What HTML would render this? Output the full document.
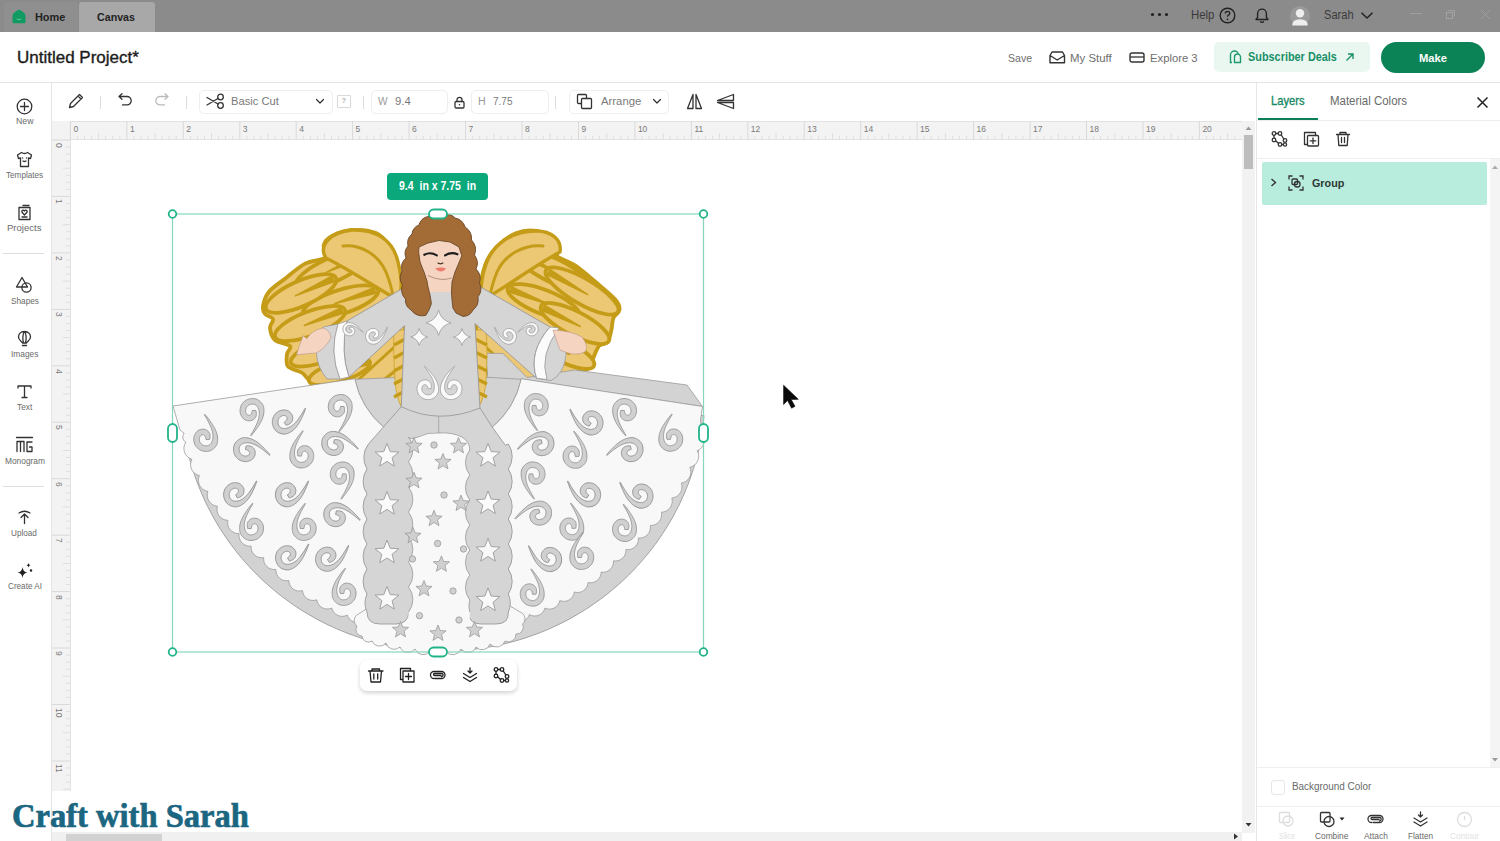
<!DOCTYPE html>
<html><head><meta charset="utf-8"><style>*{margin:0;padding:0;box-sizing:border-box}
html,body{width:1500px;height:841px;overflow:hidden;background:#fff;font-family:"Liberation Sans",sans-serif;color:#2b2b2b}
.a{position:absolute}
.tx{position:absolute;white-space:nowrap}
svg{overflow:visible}</style></head><body><div class="a" style="left:0;top:0;width:1500px;height:32px;background:#8b8b8b"></div><div class="a" style="left:79px;top:2px;width:76px;height:30px;background:#a8a8a8;border-radius:3px 3px 0 0"></div><div class="a" style="left:4px;top:2px;width:74px;height:30px;background:#8f8f8f;border-radius:3px 3px 0 0"></div><svg class="a" style="left:12px;top:9px;" width="14" height="15" viewBox="0 0 14 15"><path d="M0.5 7 Q0.5 4.5 3 3 L5.5 1.2 Q7 0.2 8.5 1.2 L11 3 Q13.5 4.5 13.5 7 V13 Q13.5 14.3 12.2 14.3 H1.8 Q0.5 14.3 0.5 13 Z" fill="#119a62"/><path d="M4.8 10 q2.2 1.4 4.4 0" stroke="#6cc9a0" stroke-width="0.9" fill="none"/></svg><div class="tx" style="left:35.00px;top:10.93px;font-size:11.77px;line-height:11.77px;font-weight:bold;color:#222;font-family:'Liberation Sans',sans-serif;transform:scaleX(0.9263);transform-origin:0 0;">Home</div><div class="tx" style="left:97.40px;top:10.93px;font-size:11.77px;line-height:11.77px;font-weight:bold;color:#222;font-family:'Liberation Sans',sans-serif;transform:scaleX(0.9072);transform-origin:0 0;">Canvas</div><svg class="a" style="left:1150px;top:12px;" width="20" height="5" viewBox="0 0 20 5"><circle cx="2.5" cy="2.5" r="1.6" fill="#222"/><circle cx="9.5" cy="2.5" r="1.6" fill="#222"/><circle cx="16.5" cy="2.5" r="1.6" fill="#222"/></svg><div class="tx" style="left:1191.00px;top:8.43px;font-size:13.08px;line-height:13.08px;font-weight:normal;color:#3a3a3a;font-family:'Liberation Sans',sans-serif;transform:scaleX(0.8697);transform-origin:0 0;">Help</div><svg class="a" style="left:1218px;top:7px;" width="19" height="17" viewBox="0 0 19 17"><circle cx="9.5" cy="8.5" r="7.3" fill="none" stroke="#222" stroke-width="1.4"/><path d="M7.3 6.6 q0-2.2 2.2-2.2 q2.2 0 2.2 2 q0 1.4-1.6 2 q-0.6 0.3-0.6 1.3" fill="none" stroke="#222" stroke-width="1.4"/><circle cx="9.5" cy="12.3" r="0.9" fill="#222"/></svg><svg class="a" style="left:1253px;top:7px;" width="18" height="17" viewBox="0 0 18 17"><path d="M3 12.5 h12 l-1.6-2.2 v-3.8 a4.4 4.4 0 0 0-8.8 0 v3.8 z" fill="none" stroke="#222" stroke-width="1.4" stroke-linejoin="round"/><path d="M7.3 14.2 a1.8 1.8 0 0 0 3.4 0" fill="none" stroke="#222" stroke-width="1.3"/></svg><svg class="a" style="left:1289px;top:6px;" width="22" height="21" viewBox="0 0 22 21"><circle cx="11" cy="10" r="10" fill="#9a9a9a"/><circle cx="11" cy="7.2" r="4.2" fill="#eeeeee"/><path d="M3.2 19.5 q0-6.2 7.8-6.2 q7.8 0 7.8 6.2 z" fill="#eeeeee"/></svg><div class="tx" style="left:1324.00px;top:8.43px;font-size:13.08px;line-height:13.08px;font-weight:normal;color:#3a3a3a;font-family:'Liberation Sans',sans-serif;transform:scaleX(0.8479);transform-origin:0 0;">Sarah</div><svg class="a" style="left:1360px;top:11px;" width="14" height="9" viewBox="0 0 14 9"><path d="M1.5 1.8 L7 7 L12.5 1.8" fill="none" stroke="#222" stroke-width="1.5"/></svg><div class="a" style="left:1410px;top:13px;width:12px;height:1px;background:#9e9e9e"></div><svg class="a" style="left:1446px;top:10px;" width="11" height="9" viewBox="0 0 11 9"><rect x="0.5" y="2.5" width="6" height="6" fill="none" stroke="#a2a2a2"/><path d="M2.5 0.5 h6 v6" fill="none" stroke="#a2a2a2"/></svg><svg class="a" style="left:1480px;top:9px;" width="11" height="11" viewBox="0 0 11 11"><path d="M1 1 L10 10 M10 1 L1 10" stroke="#a0a0a0" stroke-width="1"/></svg><div class="a" style="left:0;top:32px;width:1500px;height:51px;background:#fff"></div><div class="a" style="left:0;top:82px;width:1500px;height:1px;background:#e4e4e4"></div><div class="tx" style="left:16.60px;top:48.82px;font-size:16.28px;line-height:16.28px;font-weight:normal;color:#1c1c1c;font-family:'Liberation Sans',sans-serif;transform:scaleX(1.0452);transform-origin:0 0;-webkit-text-stroke:0.35px currentColor;">Untitled Project*</div><div class="tx" style="left:1007.60px;top:51.66px;font-size:11.63px;line-height:11.63px;font-weight:normal;color:#6e6e6e;font-family:'Liberation Sans',sans-serif;transform:scaleX(0.9093);transform-origin:0 0;">Save</div><svg class="a" style="left:1049px;top:51px;" width="17" height="13" viewBox="0 0 17 13"><path d="M1 4.5 V11.8 H15.5 V4.5 L13.5 1 H3 Z M1 4.5 L8.2 9 L15.5 4.5" fill="none" stroke="#333" stroke-width="1.4" stroke-linejoin="round"/></svg><div class="tx" style="left:1069.80px;top:51.66px;font-size:11.63px;line-height:11.63px;font-weight:normal;color:#6e6e6e;font-family:'Liberation Sans',sans-serif;transform:scaleX(0.9827);transform-origin:0 0;">My Stuff</div><svg class="a" style="left:1129px;top:52px;" width="16" height="11" viewBox="0 0 16 11"><rect x="1" y="1" width="14" height="9" rx="2" fill="none" stroke="#333" stroke-width="1.4"/><path d="M1 5 H15" stroke="#333" stroke-width="1.3"/></svg><div class="tx" style="left:1149.80px;top:51.66px;font-size:11.63px;line-height:11.63px;font-weight:normal;color:#6e6e6e;font-family:'Liberation Sans',sans-serif;transform:scaleX(0.9690);transform-origin:0 0;">Explore 3</div><div class="a" style="left:1214px;top:42px;width:156px;height:30px;background:#eaf7f1;border-radius:5px"></div><svg class="a" style="left:1228px;top:50px;" width="15" height="14" viewBox="0 0 15 14"><path d="M4 12.5 H2.5 V5 a4 4 0 0 1 8 0 M6 12.5 H12.5 V7 a3 3 0 0 0-6 0 V12.5" fill="none" stroke="#1d9a70" stroke-width="1.4"/></svg><div class="tx" style="left:1248.00px;top:51.04px;font-size:12.35px;line-height:12.35px;font-weight:bold;color:#1a9069;font-family:'Liberation Sans',sans-serif;transform:scaleX(0.8817);transform-origin:0 0;">Subscriber Deals</div><svg class="a" style="left:1345px;top:52px;" width="10" height="10" viewBox="0 0 10 10"><path d="M1.5 8.5 L8 2 M3 2 H8 V7" fill="none" stroke="#1a9069" stroke-width="1.4"/></svg><div class="a" style="left:1381px;top:42px;width:104px;height:31px;background:#0c8257;border-radius:16px"></div><div class="tx" style="left:1418.50px;top:52.16px;font-size:11.63px;line-height:11.63px;font-weight:bold;color:#ffffff;font-family:'Liberation Sans',sans-serif;transform:scaleX(0.9626);transform-origin:0 0;">Make</div><div class="a" style="left:51px;top:83px;width:1px;height:758px;background:#e4e4e4"></div><svg class="a" style="left:16px;top:98px;" width="17" height="17" viewBox="0 0 17 17"><circle cx="8.5" cy="8.5" r="7.3" fill="none" stroke="#333" stroke-width="1.3" stroke-linecap="round" stroke-linejoin="round"/><path d="M8.5 4.5 V12.5 M4.5 8.5 H12.5" fill="none" stroke="#333" stroke-width="1.3" stroke-linecap="round" stroke-linejoin="round"/></svg><div class="tx" style="left:15.50px;top:117.42px;font-size:8.72px;line-height:8.72px;font-weight:normal;color:#6a6a6a;font-family:'Liberation Sans',sans-serif;transform:scaleX(1.0031);transform-origin:0 0;">New</div><svg class="a" style="left:16px;top:151px;" width="17" height="17" viewBox="0 0 17 17"><path d="M5.5 1.5 L1.5 4 L2.5 7.5 L4.5 7 V15.5 H12.5 V7 L14.5 7.5 L15.5 4 L11.5 1.5 Q8.5 3.5 5.5 1.5 Z" fill="none" stroke="#333" stroke-width="1.3" stroke-linecap="round" stroke-linejoin="round"/><path d="M6.5 7 h0.1 M10.5 7 h0.1 M7 10 q1.5 1 3 0" fill="none" stroke="#333" stroke-width="1.3" stroke-linecap="round" stroke-linejoin="round"/></svg><div class="tx" style="left:5.70px;top:170.75px;font-size:9.16px;line-height:9.16px;font-weight:normal;color:#6a6a6a;font-family:'Liberation Sans',sans-serif;transform:scaleX(0.8913);transform-origin:0 0;">Templates</div><svg class="a" style="left:17px;top:204px;" width="15" height="17" viewBox="0 0 15 17"><path d="M2 3.5 H13 V15.5 H2 Z" fill="none" stroke="#333" stroke-width="1.3" stroke-linecap="round" stroke-linejoin="round"/><path d="M6 1.5 H12" fill="none" stroke="#333" stroke-width="1.3" stroke-linecap="round" stroke-linejoin="round"/><path d="M7.5 11 L5 8.3 a1.3 1.3 0 0 1 2.5-1.3 a1.3 1.3 0 0 1 2.5 1.3 Z" fill="none" stroke="#333" stroke-width="1.3" stroke-linecap="round" stroke-linejoin="round"/><path d="M5 13 H10" fill="none" stroke="#333" stroke-width="1.3" stroke-linecap="round" stroke-linejoin="round"/></svg><div class="tx" style="left:7.00px;top:224.39px;font-size:8.87px;line-height:8.87px;font-weight:normal;color:#6a6a6a;font-family:'Liberation Sans',sans-serif;transform:scaleX(1.0772);transform-origin:0 0;">Projects</div><div class="a" style="left:3px;top:253px;width:41px;height:1px;background:#dedede"></div><svg class="a" style="left:15px;top:276px;" width="18" height="18" viewBox="0 0 18 18"><path d="M7 1.5 L1.5 11 H12.5 Z" fill="none" stroke="#333" stroke-width="1.3" stroke-linecap="round" stroke-linejoin="round"/><circle cx="11.5" cy="11.5" r="4.6" fill="none" stroke="#333" stroke-width="1.3" stroke-linecap="round" stroke-linejoin="round"/></svg><div class="tx" style="left:10.50px;top:296.99px;font-size:8.87px;line-height:8.87px;font-weight:normal;color:#6a6a6a;font-family:'Liberation Sans',sans-serif;transform:scaleX(0.9311);transform-origin:0 0;">Shapes</div><svg class="a" style="left:17px;top:330px;" width="15" height="17" viewBox="0 0 15 17"><path d="M7.5 1.5 C3 1.5 1.5 4.5 1.5 7 C1.5 10 4.5 11.5 5.5 13 H9.5 C10.5 11.5 13.5 10 13.5 7 C13.5 4.5 12 1.5 7.5 1.5 Z M7.5 1.5 C5.5 3.5 5.5 10 6.5 13 M7.5 1.5 C9.5 3.5 9.5 10 8.5 13 M5.5 15.5 H9.5" fill="none" stroke="#333" stroke-width="1.3" stroke-linecap="round" stroke-linejoin="round"/></svg><div class="tx" style="left:10.60px;top:350.09px;font-size:8.87px;line-height:8.87px;font-weight:normal;color:#6a6a6a;font-family:'Liberation Sans',sans-serif;transform:scaleX(0.9424);transform-origin:0 0;">Images</div><svg class="a" style="left:16px;top:384px;" width="17" height="15" viewBox="0 0 17 15"><path d="M2 4 V2 H15 V4 M8.5 2 V13.5 M6 13.5 H11" fill="none" stroke="#333" stroke-width="1.3" stroke-linecap="round" stroke-linejoin="round"/></svg><div class="tx" style="left:16.50px;top:403.12px;font-size:8.72px;line-height:8.72px;font-weight:normal;color:#6a6a6a;font-family:'Liberation Sans',sans-serif;transform:scaleX(0.9504);transform-origin:0 0;">Text</div><svg class="a" style="left:15px;top:436px;" width="19" height="18" viewBox="0 0 19 18"><path d="M1.5 1.5 H17.5" fill="none" stroke="#333" stroke-width="1.3" stroke-linecap="round" stroke-linejoin="round"/><path d="M2 15.5 V5.5 H9 V15.5 M5.5 5.5 V15.5" fill="none" stroke="#333" stroke-width="1.3" stroke-linecap="round" stroke-linejoin="round"/><path d="M17 6 H12 V15.5 H17 V11 H14.5" fill="none" stroke="#333" stroke-width="1.3" stroke-linecap="round" stroke-linejoin="round"/></svg><div class="tx" style="left:4.50px;top:457.19px;font-size:8.87px;line-height:8.87px;font-weight:normal;color:#6a6a6a;font-family:'Liberation Sans',sans-serif;transform:scaleX(0.9438);transform-origin:0 0;">Monogram</div><div class="a" style="left:3px;top:486px;width:41px;height:1px;background:#dedede"></div><svg class="a" style="left:17px;top:509px;" width="15" height="16" viewBox="0 0 15 16"><path d="M2 4 Q7.5 0.5 13 4 M7.5 5 V14.5 M4 8.5 L7.5 5 L11 8.5" fill="none" stroke="#333" stroke-width="1.3" stroke-linecap="round" stroke-linejoin="round"/></svg><div class="tx" style="left:11.30px;top:528.87px;font-size:9.01px;line-height:9.01px;font-weight:normal;color:#6a6a6a;font-family:'Liberation Sans',sans-serif;transform:scaleX(0.9069);transform-origin:0 0;">Upload</div><svg class="a" style="left:16px;top:562px;" width="17" height="17" viewBox="0 0 17 17"><path d="M6.5 5 Q7 10 11.5 10.5 Q7 11 6.5 16 Q6 11 1.5 10.5 Q6 10 6.5 5 Z" fill="#222"/><path d="M12.5 1 Q12.7 3 14.5 3.3 Q12.7 3.6 12.5 5.5 Q12.3 3.6 10.5 3.3 Q12.3 3 12.5 1 Z" fill="#222"/><circle cx="15" cy="8.5" r="1.2" fill="#222"/></svg><div class="tx" style="left:7.50px;top:582.07px;font-size:9.01px;line-height:9.01px;font-weight:normal;color:#6a6a6a;font-family:'Liberation Sans',sans-serif;transform:scaleX(0.9050);transform-origin:0 0;">Create AI</div><svg class="a" style="left:67px;top:92px;" width="18" height="18" viewBox="0 0 18 18"><path d="M2.5 15.5 L3.5 11.5 L12.5 2.5 L15.5 5.5 L6.5 14.5 Z M11 4 L14 7" fill="none" stroke="#333" stroke-width="1.3" stroke-linecap="round" stroke-linejoin="round"/></svg><div class="a" style="left:100px;top:96px;width:1px;height:13px;background:#dcdcdc"></div><svg class="a" style="left:116px;top:93px;" width="19" height="15" viewBox="0 0 19 15"><path d="M3 3.5 H11 a4.2 4.2 0 0 1 0 8.4 H6.5 M6 0.8 L3 3.5 L6 6.2" fill="none" stroke="#333" stroke-width="1.3" stroke-linecap="round" stroke-linejoin="round"/></svg><svg class="a" style="left:152px;top:93px;" width="19" height="15" viewBox="0 0 19 15"><path d="M16 3.5 H8 a4.2 4.2 0 0 0 0 8.4 H12.5 M13 0.8 L16 3.5 L13 6.2" fill="none" stroke="#bbbbbb" stroke-width="1.3" stroke-linecap="round" stroke-linejoin="round"/></svg><div class="a" style="left:186px;top:96px;width:1px;height:13px;background:#dcdcdc"></div><div class="a" style="left:199px;top:89.5px;width:134px;height:24px;border:1px solid #eeeeee;border-radius:5px;background:#fff"></div><svg class="a" style="left:205px;top:93px;" width="21" height="17" viewBox="0 0 21 17"><circle cx="15.5" cy="4" r="2.8" fill="none" stroke="#333" stroke-width="1.3" stroke-linecap="round" stroke-linejoin="round"/><circle cx="15.5" cy="12.5" r="2.8" fill="none" stroke="#333" stroke-width="1.3" stroke-linecap="round" stroke-linejoin="round"/><path d="M13 5.5 L2 12 M13 11 L2 4.5" fill="none" stroke="#333" stroke-width="1.3" stroke-linecap="round" stroke-linejoin="round"/></svg><div class="tx" style="left:230.80px;top:95.36px;font-size:11.63px;line-height:11.63px;font-weight:normal;color:#7a7a7a;font-family:'Liberation Sans',sans-serif;transform:scaleX(0.9606);transform-origin:0 0;">Basic Cut</div><svg class="a" style="left:315px;top:98px;" width="10" height="7" viewBox="0 0 10 7"><path d="M1.5 1.5 L5 5 L8.5 1.5" fill="none" stroke="#333" stroke-width="1.3" stroke-linecap="round" stroke-linejoin="round"/></svg><div class="a" style="left:337px;top:94.5px;width:14px;height:13px;border:1px solid #d8d8d8;border-radius:1px"></div><div class="tx" style="left:337px;top:95px;width:14px;text-align:center;font-size:7px;line-height:12px;color:#b0b0b0;font-weight:bold">?</div><div class="a" style="left:363px;top:96px;width:1px;height:13px;background:#dcdcdc"></div><div class="a" style="left:371px;top:90px;width:77px;height:24px;border:1px solid #eeeeee;border-radius:5px"></div><div class="tx" style="left:377.70px;top:95.36px;font-size:11.63px;line-height:11.63px;font-weight:normal;color:#9a9a9a;font-family:'Liberation Sans',sans-serif;transform:scaleX(0.8747);transform-origin:0 0;">W</div><div class="tx" style="left:395.00px;top:95.36px;font-size:11.63px;line-height:11.63px;font-weight:normal;color:#7a7a7a;font-family:'Liberation Sans',sans-serif;transform:scaleX(0.9713);transform-origin:0 0;">9.4</div><svg class="a" style="left:454px;top:96px;" width="11" height="13" viewBox="0 0 11 13"><rect x="1" y="5.5" width="9" height="6.5" rx="1.2" fill="none" stroke="#333" stroke-width="1.3" stroke-linecap="round" stroke-linejoin="round"/><path d="M3 5.5 V3.8 a2.5 2.5 0 0 1 5 0 V5.5" fill="none" stroke="#333" stroke-width="1.3" stroke-linecap="round" stroke-linejoin="round"/><circle cx="5.5" cy="8.7" r="0.8" fill="#333"/></svg><div class="a" style="left:471px;top:90px;width:78px;height:24px;border:1px solid #eeeeee;border-radius:5px"></div><div class="tx" style="left:478.30px;top:95.36px;font-size:11.63px;line-height:11.63px;font-weight:normal;color:#9a9a9a;font-family:'Liberation Sans',sans-serif;transform:scaleX(0.9169);transform-origin:0 0;">H</div><div class="tx" style="left:493.40px;top:95.36px;font-size:11.63px;line-height:11.63px;font-weight:normal;color:#7a7a7a;font-family:'Liberation Sans',sans-serif;transform:scaleX(0.8616);transform-origin:0 0;">7.75</div><div class="a" style="left:555px;top:96px;width:1px;height:13px;background:#dcdcdc"></div><div class="a" style="left:569px;top:89.5px;width:100px;height:24px;border:1px solid #eeeeee;border-radius:5px"></div><svg class="a" style="left:576px;top:93px;" width="17" height="17" viewBox="0 0 17 17"><rect x="1.5" y="1.5" width="9" height="9" rx="1" fill="none" stroke="#333" stroke-width="1.3" stroke-linecap="round" stroke-linejoin="round"/><rect x="5.5" y="5.5" width="10" height="10" rx="1" fill="#fff" stroke="#333" stroke-width="1.3"/></svg><div class="tx" style="left:600.50px;top:95.36px;font-size:11.63px;line-height:11.63px;font-weight:normal;color:#7a7a7a;font-family:'Liberation Sans',sans-serif;transform:scaleX(0.9741);transform-origin:0 0;">Arrange</div><svg class="a" style="left:652px;top:98px;" width="10" height="7" viewBox="0 0 10 7"><path d="M1.5 1.5 L5 5 L8.5 1.5" fill="none" stroke="#333" stroke-width="1.3" stroke-linecap="round" stroke-linejoin="round"/></svg><svg class="a" style="left:686px;top:93px;" width="17" height="17" viewBox="0 0 17 17"><path d="M7 1.5 L1.5 15.5 H7 Z M10 1.5 L15.5 15.5 H10 Z" fill="none" stroke="#333" stroke-width="1.3" stroke-linecap="round" stroke-linejoin="round"/></svg><svg class="a" style="left:716px;top:93px;" width="19" height="17" viewBox="0 0 19 17"><path d="M17.5 1.5 L1.5 7.5 H17.5 Z M17.5 15.5 L1.5 9.5 H17.5 Z" fill="none" stroke="#333" stroke-width="1.3" stroke-linecap="round" stroke-linejoin="round"/></svg><div class="a" style="left:52px;top:121px;width:1190px;height:19px;background:#f3f3f3;border-top:1px solid #e2e2e2;border-bottom:1px solid #e3e3e3"></div><div class="a" style="left:52px;top:121px;width:18.5px;height:670px;background:#f3f3f3;border-right:1px solid #e3e3e3"></div><svg class="a" style="left:0;top:0" width="1242" height="142"><path d="M70.4 121 V140" stroke="#d9d9d9" stroke-width="1"/><path d="M77.5 136 V140" stroke="#dedede" stroke-width="1"/><path d="M84.5 136 V140" stroke="#dedede" stroke-width="1"/><path d="M91.6 136 V140" stroke="#dedede" stroke-width="1"/><path d="M98.6 133 V140" stroke="#dedede" stroke-width="1"/><path d="M105.7 136 V140" stroke="#dedede" stroke-width="1"/><path d="M112.7 136 V140" stroke="#dedede" stroke-width="1"/><path d="M119.8 136 V140" stroke="#dedede" stroke-width="1"/><path d="M126.9 121 V140" stroke="#d9d9d9" stroke-width="1"/><path d="M133.9 136 V140" stroke="#dedede" stroke-width="1"/><path d="M141.0 136 V140" stroke="#dedede" stroke-width="1"/><path d="M148.0 136 V140" stroke="#dedede" stroke-width="1"/><path d="M155.1 133 V140" stroke="#dedede" stroke-width="1"/><path d="M162.1 136 V140" stroke="#dedede" stroke-width="1"/><path d="M169.2 136 V140" stroke="#dedede" stroke-width="1"/><path d="M176.2 136 V140" stroke="#dedede" stroke-width="1"/><path d="M183.3 121 V140" stroke="#d9d9d9" stroke-width="1"/><path d="M190.4 136 V140" stroke="#dedede" stroke-width="1"/><path d="M197.4 136 V140" stroke="#dedede" stroke-width="1"/><path d="M204.5 136 V140" stroke="#dedede" stroke-width="1"/><path d="M211.5 133 V140" stroke="#dedede" stroke-width="1"/><path d="M218.6 136 V140" stroke="#dedede" stroke-width="1"/><path d="M225.6 136 V140" stroke="#dedede" stroke-width="1"/><path d="M232.7 136 V140" stroke="#dedede" stroke-width="1"/><path d="M239.8 121 V140" stroke="#d9d9d9" stroke-width="1"/><path d="M246.8 136 V140" stroke="#dedede" stroke-width="1"/><path d="M253.9 136 V140" stroke="#dedede" stroke-width="1"/><path d="M260.9 136 V140" stroke="#dedede" stroke-width="1"/><path d="M268.0 133 V140" stroke="#dedede" stroke-width="1"/><path d="M275.0 136 V140" stroke="#dedede" stroke-width="1"/><path d="M282.1 136 V140" stroke="#dedede" stroke-width="1"/><path d="M289.1 136 V140" stroke="#dedede" stroke-width="1"/><path d="M296.2 121 V140" stroke="#d9d9d9" stroke-width="1"/><path d="M303.3 136 V140" stroke="#dedede" stroke-width="1"/><path d="M310.3 136 V140" stroke="#dedede" stroke-width="1"/><path d="M317.4 136 V140" stroke="#dedede" stroke-width="1"/><path d="M324.4 133 V140" stroke="#dedede" stroke-width="1"/><path d="M331.5 136 V140" stroke="#dedede" stroke-width="1"/><path d="M338.5 136 V140" stroke="#dedede" stroke-width="1"/><path d="M345.6 136 V140" stroke="#dedede" stroke-width="1"/><path d="M352.6 121 V140" stroke="#d9d9d9" stroke-width="1"/><path d="M359.7 136 V140" stroke="#dedede" stroke-width="1"/><path d="M366.8 136 V140" stroke="#dedede" stroke-width="1"/><path d="M373.8 136 V140" stroke="#dedede" stroke-width="1"/><path d="M380.9 133 V140" stroke="#dedede" stroke-width="1"/><path d="M387.9 136 V140" stroke="#dedede" stroke-width="1"/><path d="M395.0 136 V140" stroke="#dedede" stroke-width="1"/><path d="M402.0 136 V140" stroke="#dedede" stroke-width="1"/><path d="M409.1 121 V140" stroke="#d9d9d9" stroke-width="1"/><path d="M416.2 136 V140" stroke="#dedede" stroke-width="1"/><path d="M423.2 136 V140" stroke="#dedede" stroke-width="1"/><path d="M430.3 136 V140" stroke="#dedede" stroke-width="1"/><path d="M437.3 133 V140" stroke="#dedede" stroke-width="1"/><path d="M444.4 136 V140" stroke="#dedede" stroke-width="1"/><path d="M451.4 136 V140" stroke="#dedede" stroke-width="1"/><path d="M458.5 136 V140" stroke="#dedede" stroke-width="1"/><path d="M465.6 121 V140" stroke="#d9d9d9" stroke-width="1"/><path d="M472.6 136 V140" stroke="#dedede" stroke-width="1"/><path d="M479.7 136 V140" stroke="#dedede" stroke-width="1"/><path d="M486.7 136 V140" stroke="#dedede" stroke-width="1"/><path d="M493.8 133 V140" stroke="#dedede" stroke-width="1"/><path d="M500.8 136 V140" stroke="#dedede" stroke-width="1"/><path d="M507.9 136 V140" stroke="#dedede" stroke-width="1"/><path d="M514.9 136 V140" stroke="#dedede" stroke-width="1"/><path d="M522.0 121 V140" stroke="#d9d9d9" stroke-width="1"/><path d="M529.1 136 V140" stroke="#dedede" stroke-width="1"/><path d="M536.1 136 V140" stroke="#dedede" stroke-width="1"/><path d="M543.2 136 V140" stroke="#dedede" stroke-width="1"/><path d="M550.2 133 V140" stroke="#dedede" stroke-width="1"/><path d="M557.3 136 V140" stroke="#dedede" stroke-width="1"/><path d="M564.3 136 V140" stroke="#dedede" stroke-width="1"/><path d="M571.4 136 V140" stroke="#dedede" stroke-width="1"/><path d="M578.5 121 V140" stroke="#d9d9d9" stroke-width="1"/><path d="M585.5 136 V140" stroke="#dedede" stroke-width="1"/><path d="M592.6 136 V140" stroke="#dedede" stroke-width="1"/><path d="M599.6 136 V140" stroke="#dedede" stroke-width="1"/><path d="M606.7 133 V140" stroke="#dedede" stroke-width="1"/><path d="M613.7 136 V140" stroke="#dedede" stroke-width="1"/><path d="M620.8 136 V140" stroke="#dedede" stroke-width="1"/><path d="M627.8 136 V140" stroke="#dedede" stroke-width="1"/><path d="M634.9 121 V140" stroke="#d9d9d9" stroke-width="1"/><path d="M642.0 136 V140" stroke="#dedede" stroke-width="1"/><path d="M649.0 136 V140" stroke="#dedede" stroke-width="1"/><path d="M656.1 136 V140" stroke="#dedede" stroke-width="1"/><path d="M663.1 133 V140" stroke="#dedede" stroke-width="1"/><path d="M670.2 136 V140" stroke="#dedede" stroke-width="1"/><path d="M677.2 136 V140" stroke="#dedede" stroke-width="1"/><path d="M684.3 136 V140" stroke="#dedede" stroke-width="1"/><path d="M691.4 121 V140" stroke="#d9d9d9" stroke-width="1"/><path d="M698.4 136 V140" stroke="#dedede" stroke-width="1"/><path d="M705.5 136 V140" stroke="#dedede" stroke-width="1"/><path d="M712.5 136 V140" stroke="#dedede" stroke-width="1"/><path d="M719.6 133 V140" stroke="#dedede" stroke-width="1"/><path d="M726.6 136 V140" stroke="#dedede" stroke-width="1"/><path d="M733.7 136 V140" stroke="#dedede" stroke-width="1"/><path d="M740.7 136 V140" stroke="#dedede" stroke-width="1"/><path d="M747.8 121 V140" stroke="#d9d9d9" stroke-width="1"/><path d="M754.9 136 V140" stroke="#dedede" stroke-width="1"/><path d="M761.9 136 V140" stroke="#dedede" stroke-width="1"/><path d="M769.0 136 V140" stroke="#dedede" stroke-width="1"/><path d="M776.0 133 V140" stroke="#dedede" stroke-width="1"/><path d="M783.1 136 V140" stroke="#dedede" stroke-width="1"/><path d="M790.1 136 V140" stroke="#dedede" stroke-width="1"/><path d="M797.2 136 V140" stroke="#dedede" stroke-width="1"/><path d="M804.2 121 V140" stroke="#d9d9d9" stroke-width="1"/><path d="M811.3 136 V140" stroke="#dedede" stroke-width="1"/><path d="M818.4 136 V140" stroke="#dedede" stroke-width="1"/><path d="M825.4 136 V140" stroke="#dedede" stroke-width="1"/><path d="M832.5 133 V140" stroke="#dedede" stroke-width="1"/><path d="M839.5 136 V140" stroke="#dedede" stroke-width="1"/><path d="M846.6 136 V140" stroke="#dedede" stroke-width="1"/><path d="M853.6 136 V140" stroke="#dedede" stroke-width="1"/><path d="M860.7 121 V140" stroke="#d9d9d9" stroke-width="1"/><path d="M867.8 136 V140" stroke="#dedede" stroke-width="1"/><path d="M874.8 136 V140" stroke="#dedede" stroke-width="1"/><path d="M881.9 136 V140" stroke="#dedede" stroke-width="1"/><path d="M888.9 133 V140" stroke="#dedede" stroke-width="1"/><path d="M896.0 136 V140" stroke="#dedede" stroke-width="1"/><path d="M903.0 136 V140" stroke="#dedede" stroke-width="1"/><path d="M910.1 136 V140" stroke="#dedede" stroke-width="1"/><path d="M917.1 121 V140" stroke="#d9d9d9" stroke-width="1"/><path d="M924.2 136 V140" stroke="#dedede" stroke-width="1"/><path d="M931.3 136 V140" stroke="#dedede" stroke-width="1"/><path d="M938.3 136 V140" stroke="#dedede" stroke-width="1"/><path d="M945.4 133 V140" stroke="#dedede" stroke-width="1"/><path d="M952.4 136 V140" stroke="#dedede" stroke-width="1"/><path d="M959.5 136 V140" stroke="#dedede" stroke-width="1"/><path d="M966.5 136 V140" stroke="#dedede" stroke-width="1"/><path d="M973.6 121 V140" stroke="#d9d9d9" stroke-width="1"/><path d="M980.7 136 V140" stroke="#dedede" stroke-width="1"/><path d="M987.7 136 V140" stroke="#dedede" stroke-width="1"/><path d="M994.8 136 V140" stroke="#dedede" stroke-width="1"/><path d="M1001.8 133 V140" stroke="#dedede" stroke-width="1"/><path d="M1008.9 136 V140" stroke="#dedede" stroke-width="1"/><path d="M1015.9 136 V140" stroke="#dedede" stroke-width="1"/><path d="M1023.0 136 V140" stroke="#dedede" stroke-width="1"/><path d="M1030.1 121 V140" stroke="#d9d9d9" stroke-width="1"/><path d="M1037.1 136 V140" stroke="#dedede" stroke-width="1"/><path d="M1044.2 136 V140" stroke="#dedede" stroke-width="1"/><path d="M1051.2 136 V140" stroke="#dedede" stroke-width="1"/><path d="M1058.3 133 V140" stroke="#dedede" stroke-width="1"/><path d="M1065.3 136 V140" stroke="#dedede" stroke-width="1"/><path d="M1072.4 136 V140" stroke="#dedede" stroke-width="1"/><path d="M1079.4 136 V140" stroke="#dedede" stroke-width="1"/><path d="M1086.5 121 V140" stroke="#d9d9d9" stroke-width="1"/><path d="M1093.6 136 V140" stroke="#dedede" stroke-width="1"/><path d="M1100.6 136 V140" stroke="#dedede" stroke-width="1"/><path d="M1107.7 136 V140" stroke="#dedede" stroke-width="1"/><path d="M1114.7 133 V140" stroke="#dedede" stroke-width="1"/><path d="M1121.8 136 V140" stroke="#dedede" stroke-width="1"/><path d="M1128.8 136 V140" stroke="#dedede" stroke-width="1"/><path d="M1135.9 136 V140" stroke="#dedede" stroke-width="1"/><path d="M1143.0 121 V140" stroke="#d9d9d9" stroke-width="1"/><path d="M1150.0 136 V140" stroke="#dedede" stroke-width="1"/><path d="M1157.1 136 V140" stroke="#dedede" stroke-width="1"/><path d="M1164.1 136 V140" stroke="#dedede" stroke-width="1"/><path d="M1171.2 133 V140" stroke="#dedede" stroke-width="1"/><path d="M1178.2 136 V140" stroke="#dedede" stroke-width="1"/><path d="M1185.3 136 V140" stroke="#dedede" stroke-width="1"/><path d="M1192.3 136 V140" stroke="#dedede" stroke-width="1"/><path d="M1199.4 121 V140" stroke="#d9d9d9" stroke-width="1"/><path d="M1206.5 136 V140" stroke="#dedede" stroke-width="1"/><path d="M1213.5 136 V140" stroke="#dedede" stroke-width="1"/><path d="M1220.6 136 V140" stroke="#dedede" stroke-width="1"/><path d="M1227.6 133 V140" stroke="#dedede" stroke-width="1"/><path d="M1234.7 136 V140" stroke="#dedede" stroke-width="1"/></svg><div class="tx" style="left:73.4px;top:123.5px;font-size:8.5px;line-height:10px;color:#7a7a7a">0</div><div class="tx" style="left:129.9px;top:123.5px;font-size:8.5px;line-height:10px;color:#7a7a7a">1</div><div class="tx" style="left:186.3px;top:123.5px;font-size:8.5px;line-height:10px;color:#7a7a7a">2</div><div class="tx" style="left:242.8px;top:123.5px;font-size:8.5px;line-height:10px;color:#7a7a7a">3</div><div class="tx" style="left:299.2px;top:123.5px;font-size:8.5px;line-height:10px;color:#7a7a7a">4</div><div class="tx" style="left:355.6px;top:123.5px;font-size:8.5px;line-height:10px;color:#7a7a7a">5</div><div class="tx" style="left:412.1px;top:123.5px;font-size:8.5px;line-height:10px;color:#7a7a7a">6</div><div class="tx" style="left:468.6px;top:123.5px;font-size:8.5px;line-height:10px;color:#7a7a7a">7</div><div class="tx" style="left:525.0px;top:123.5px;font-size:8.5px;line-height:10px;color:#7a7a7a">8</div><div class="tx" style="left:581.5px;top:123.5px;font-size:8.5px;line-height:10px;color:#7a7a7a">9</div><div class="tx" style="left:637.9px;top:123.5px;font-size:8.5px;line-height:10px;color:#7a7a7a">10</div><div class="tx" style="left:694.4px;top:123.5px;font-size:8.5px;line-height:10px;color:#7a7a7a">11</div><div class="tx" style="left:750.8px;top:123.5px;font-size:8.5px;line-height:10px;color:#7a7a7a">12</div><div class="tx" style="left:807.2px;top:123.5px;font-size:8.5px;line-height:10px;color:#7a7a7a">13</div><div class="tx" style="left:863.7px;top:123.5px;font-size:8.5px;line-height:10px;color:#7a7a7a">14</div><div class="tx" style="left:920.1px;top:123.5px;font-size:8.5px;line-height:10px;color:#7a7a7a">15</div><div class="tx" style="left:976.6px;top:123.5px;font-size:8.5px;line-height:10px;color:#7a7a7a">16</div><div class="tx" style="left:1033.1px;top:123.5px;font-size:8.5px;line-height:10px;color:#7a7a7a">17</div><div class="tx" style="left:1089.5px;top:123.5px;font-size:8.5px;line-height:10px;color:#7a7a7a">18</div><div class="tx" style="left:1146.0px;top:123.5px;font-size:8.5px;line-height:10px;color:#7a7a7a">19</div><div class="tx" style="left:1202.4px;top:123.5px;font-size:8.5px;line-height:10px;color:#7a7a7a">20</div><svg class="a" style="left:0;top:0" width="72" height="800"><path d="M52 140.0 H70" stroke="#d9d9d9" stroke-width="1"/><path d="M66 147.1 H70" stroke="#dedede" stroke-width="1"/><path d="M66 154.1 H70" stroke="#dedede" stroke-width="1"/><path d="M66 161.2 H70" stroke="#dedede" stroke-width="1"/><path d="M63 168.2 H70" stroke="#dedede" stroke-width="1"/><path d="M66 175.3 H70" stroke="#dedede" stroke-width="1"/><path d="M66 182.3 H70" stroke="#dedede" stroke-width="1"/><path d="M66 189.4 H70" stroke="#dedede" stroke-width="1"/><path d="M52 196.4 H70" stroke="#d9d9d9" stroke-width="1"/><path d="M66 203.5 H70" stroke="#dedede" stroke-width="1"/><path d="M66 210.6 H70" stroke="#dedede" stroke-width="1"/><path d="M66 217.6 H70" stroke="#dedede" stroke-width="1"/><path d="M63 224.7 H70" stroke="#dedede" stroke-width="1"/><path d="M66 231.7 H70" stroke="#dedede" stroke-width="1"/><path d="M66 238.8 H70" stroke="#dedede" stroke-width="1"/><path d="M66 245.8 H70" stroke="#dedede" stroke-width="1"/><path d="M52 252.9 H70" stroke="#d9d9d9" stroke-width="1"/><path d="M66 260.0 H70" stroke="#dedede" stroke-width="1"/><path d="M66 267.0 H70" stroke="#dedede" stroke-width="1"/><path d="M66 274.1 H70" stroke="#dedede" stroke-width="1"/><path d="M63 281.1 H70" stroke="#dedede" stroke-width="1"/><path d="M66 288.2 H70" stroke="#dedede" stroke-width="1"/><path d="M66 295.2 H70" stroke="#dedede" stroke-width="1"/><path d="M66 302.3 H70" stroke="#dedede" stroke-width="1"/><path d="M52 309.4 H70" stroke="#d9d9d9" stroke-width="1"/><path d="M66 316.4 H70" stroke="#dedede" stroke-width="1"/><path d="M66 323.5 H70" stroke="#dedede" stroke-width="1"/><path d="M66 330.5 H70" stroke="#dedede" stroke-width="1"/><path d="M63 337.6 H70" stroke="#dedede" stroke-width="1"/><path d="M66 344.6 H70" stroke="#dedede" stroke-width="1"/><path d="M66 351.7 H70" stroke="#dedede" stroke-width="1"/><path d="M66 358.7 H70" stroke="#dedede" stroke-width="1"/><path d="M52 365.8 H70" stroke="#d9d9d9" stroke-width="1"/><path d="M66 372.9 H70" stroke="#dedede" stroke-width="1"/><path d="M66 379.9 H70" stroke="#dedede" stroke-width="1"/><path d="M66 387.0 H70" stroke="#dedede" stroke-width="1"/><path d="M63 394.0 H70" stroke="#dedede" stroke-width="1"/><path d="M66 401.1 H70" stroke="#dedede" stroke-width="1"/><path d="M66 408.1 H70" stroke="#dedede" stroke-width="1"/><path d="M66 415.2 H70" stroke="#dedede" stroke-width="1"/><path d="M52 422.2 H70" stroke="#d9d9d9" stroke-width="1"/><path d="M66 429.3 H70" stroke="#dedede" stroke-width="1"/><path d="M66 436.4 H70" stroke="#dedede" stroke-width="1"/><path d="M66 443.4 H70" stroke="#dedede" stroke-width="1"/><path d="M63 450.5 H70" stroke="#dedede" stroke-width="1"/><path d="M66 457.5 H70" stroke="#dedede" stroke-width="1"/><path d="M66 464.6 H70" stroke="#dedede" stroke-width="1"/><path d="M66 471.6 H70" stroke="#dedede" stroke-width="1"/><path d="M52 478.7 H70" stroke="#d9d9d9" stroke-width="1"/><path d="M66 485.8 H70" stroke="#dedede" stroke-width="1"/><path d="M66 492.8 H70" stroke="#dedede" stroke-width="1"/><path d="M66 499.9 H70" stroke="#dedede" stroke-width="1"/><path d="M63 506.9 H70" stroke="#dedede" stroke-width="1"/><path d="M66 514.0 H70" stroke="#dedede" stroke-width="1"/><path d="M66 521.0 H70" stroke="#dedede" stroke-width="1"/><path d="M66 528.1 H70" stroke="#dedede" stroke-width="1"/><path d="M52 535.2 H70" stroke="#d9d9d9" stroke-width="1"/><path d="M66 542.2 H70" stroke="#dedede" stroke-width="1"/><path d="M66 549.3 H70" stroke="#dedede" stroke-width="1"/><path d="M66 556.3 H70" stroke="#dedede" stroke-width="1"/><path d="M63 563.4 H70" stroke="#dedede" stroke-width="1"/><path d="M66 570.4 H70" stroke="#dedede" stroke-width="1"/><path d="M66 577.5 H70" stroke="#dedede" stroke-width="1"/><path d="M66 584.5 H70" stroke="#dedede" stroke-width="1"/><path d="M52 591.6 H70" stroke="#d9d9d9" stroke-width="1"/><path d="M66 598.7 H70" stroke="#dedede" stroke-width="1"/><path d="M66 605.7 H70" stroke="#dedede" stroke-width="1"/><path d="M66 612.8 H70" stroke="#dedede" stroke-width="1"/><path d="M63 619.8 H70" stroke="#dedede" stroke-width="1"/><path d="M66 626.9 H70" stroke="#dedede" stroke-width="1"/><path d="M66 633.9 H70" stroke="#dedede" stroke-width="1"/><path d="M66 641.0 H70" stroke="#dedede" stroke-width="1"/><path d="M52 648.0 H70" stroke="#d9d9d9" stroke-width="1"/><path d="M66 655.1 H70" stroke="#dedede" stroke-width="1"/><path d="M66 662.2 H70" stroke="#dedede" stroke-width="1"/><path d="M66 669.2 H70" stroke="#dedede" stroke-width="1"/><path d="M63 676.3 H70" stroke="#dedede" stroke-width="1"/><path d="M66 683.3 H70" stroke="#dedede" stroke-width="1"/><path d="M66 690.4 H70" stroke="#dedede" stroke-width="1"/><path d="M66 697.4 H70" stroke="#dedede" stroke-width="1"/><path d="M52 704.5 H70" stroke="#d9d9d9" stroke-width="1"/><path d="M66 711.6 H70" stroke="#dedede" stroke-width="1"/><path d="M66 718.6 H70" stroke="#dedede" stroke-width="1"/><path d="M66 725.7 H70" stroke="#dedede" stroke-width="1"/><path d="M63 732.7 H70" stroke="#dedede" stroke-width="1"/><path d="M66 739.8 H70" stroke="#dedede" stroke-width="1"/><path d="M66 746.8 H70" stroke="#dedede" stroke-width="1"/><path d="M66 753.9 H70" stroke="#dedede" stroke-width="1"/><path d="M52 761.0 H70" stroke="#d9d9d9" stroke-width="1"/><path d="M66 768.0 H70" stroke="#dedede" stroke-width="1"/><path d="M66 775.1 H70" stroke="#dedede" stroke-width="1"/><path d="M66 782.1 H70" stroke="#dedede" stroke-width="1"/><path d="M63 789.2 H70" stroke="#dedede" stroke-width="1"/></svg><div class="tx" style="left:53.5px;top:143.0px;font-size:8.5px;line-height:10px;color:#7a7a7a;transform:rotate(90deg);transform-origin:5px 5px">0</div><div class="tx" style="left:53.5px;top:199.4px;font-size:8.5px;line-height:10px;color:#7a7a7a;transform:rotate(90deg);transform-origin:5px 5px">1</div><div class="tx" style="left:53.5px;top:255.9px;font-size:8.5px;line-height:10px;color:#7a7a7a;transform:rotate(90deg);transform-origin:5px 5px">2</div><div class="tx" style="left:53.5px;top:312.4px;font-size:8.5px;line-height:10px;color:#7a7a7a;transform:rotate(90deg);transform-origin:5px 5px">3</div><div class="tx" style="left:53.5px;top:368.8px;font-size:8.5px;line-height:10px;color:#7a7a7a;transform:rotate(90deg);transform-origin:5px 5px">4</div><div class="tx" style="left:53.5px;top:425.2px;font-size:8.5px;line-height:10px;color:#7a7a7a;transform:rotate(90deg);transform-origin:5px 5px">5</div><div class="tx" style="left:53.5px;top:481.7px;font-size:8.5px;line-height:10px;color:#7a7a7a;transform:rotate(90deg);transform-origin:5px 5px">6</div><div class="tx" style="left:53.5px;top:538.2px;font-size:8.5px;line-height:10px;color:#7a7a7a;transform:rotate(90deg);transform-origin:5px 5px">7</div><div class="tx" style="left:53.5px;top:594.6px;font-size:8.5px;line-height:10px;color:#7a7a7a;transform:rotate(90deg);transform-origin:5px 5px">8</div><div class="tx" style="left:53.5px;top:651.0px;font-size:8.5px;line-height:10px;color:#7a7a7a;transform:rotate(90deg);transform-origin:5px 5px">9</div><div class="tx" style="left:53.5px;top:707.5px;font-size:8.5px;line-height:10px;color:#7a7a7a;transform:rotate(90deg);transform-origin:5px 5px">10</div><div class="tx" style="left:53.5px;top:764.0px;font-size:8.5px;line-height:10px;color:#7a7a7a;transform:rotate(90deg);transform-origin:5px 5px">11</div><div class="a" style="left:1242px;top:121px;width:13px;height:712px;background:#f2f2f2"></div><div class="a" style="left:1244px;top:135px;width:9px;height:34px;background:#bdbdbd"></div><svg class="a" style="left:1244px;top:125px;" width="9" height="6" viewBox="0 0 9 6"><path d="M1.5 5 L4.5 1.5 L7.5 5 Z" fill="#9a9a9a"/></svg><svg class="a" style="left:1244px;top:822px;" width="9" height="6" viewBox="0 0 9 6"><path d="M1.5 1 L4.5 4.5 L7.5 1 Z" fill="#333"/></svg><div class="a" style="left:52px;top:832px;width:1190px;height:9px;background:#f0f0f0"></div><div class="a" style="left:66px;top:834px;width:96px;height:7px;background:#d2d2d2"></div><svg class="a" style="left:1232px;top:832px;" width="8" height="9" viewBox="0 0 8 9"><path d="M2 1.5 L6 4.5 L2 7.5 Z" fill="#333"/></svg><div class="a" style="left:1256px;top:83px;width:1px;height:758px;background:#e6e6e6"></div><div class="tx" style="left:1271.00px;top:95.29px;font-size:12.06px;line-height:12.06px;font-weight:normal;color:#1a8a66;font-family:'Liberation Sans',sans-serif;transform:scaleX(0.9251);transform-origin:0 0;-webkit-text-stroke:0.35px currentColor;">Layers</div><div class="tx" style="left:1330.00px;top:95.29px;font-size:12.06px;line-height:12.06px;font-weight:normal;color:#6a6a6a;font-family:'Liberation Sans',sans-serif;transform:scaleX(0.9516);transform-origin:0 0;">Material Colors</div><svg class="a" style="left:1476px;top:96px;" width="13" height="13" viewBox="0 0 13 13"><path d="M1.5 1.5 L11.5 11.5 M11.5 1.5 L1.5 11.5" stroke="#222" stroke-width="1.5"/></svg><div class="a" style="left:1257px;top:119.5px;width:243px;height:1px;background:#ececec"></div><div class="a" style="left:1258px;top:117.5px;width:60px;height:2.5px;background:#0f7d57"></div><svg class="a" style="left:1271px;top:131px;" width="17" height="16" viewBox="0 0 17 16"><circle cx="3" cy="2.5" r="1.8" fill="none" stroke="#333" stroke-width="1.3" stroke-linecap="round" stroke-linejoin="round"/><circle cx="9" cy="2.5" r="1.8" fill="none" stroke="#333" stroke-width="1.3" stroke-linecap="round" stroke-linejoin="round"/><circle cx="3" cy="9" r="1.8" fill="none" stroke="#333" stroke-width="1.3" stroke-linecap="round" stroke-linejoin="round"/><circle cx="14" cy="9.5" r="1.8" fill="none" stroke="#333" stroke-width="1.3" stroke-linecap="round" stroke-linejoin="round"/><circle cx="9" cy="13.5" r="1.8" fill="none" stroke="#333" stroke-width="1.3" stroke-linecap="round" stroke-linejoin="round"/><circle cx="14" cy="13.5" r="1.6" fill="none" stroke="#333" stroke-width="1.3" stroke-linecap="round" stroke-linejoin="round"/><path d="M4.8 2.5 H7.2 M3 4.3 V7.2 M4.6 9.8 L7.6 12.6 M10.8 13.5 H12.4 M10.3 4 L12.8 8" fill="none" stroke="#333" stroke-width="1.3" stroke-linecap="round" stroke-linejoin="round"/></svg><svg class="a" style="left:1303px;top:131px;" width="17" height="16" viewBox="0 0 17 16"><path d="M4.5 13.5 H1.5 V1.5 H12.5 V4.5" fill="none" stroke="#333" stroke-width="1.3" stroke-linecap="round" stroke-linejoin="round"/><rect x="4.5" y="4.5" width="11" height="10.5" rx="1" fill="none" stroke="#333" stroke-width="1.3" stroke-linecap="round" stroke-linejoin="round"/><path d="M10 7 V12.5 M7.2 9.8 H12.8" fill="none" stroke="#333" stroke-width="1.3" stroke-linecap="round" stroke-linejoin="round"/></svg><svg class="a" style="left:1335px;top:131px;" width="16" height="16" viewBox="0 0 16 16"><path d="M1.5 3.5 H14.5 M5 3.5 V1.5 H11 V3.5 M3 3.5 L3.8 14.5 H12.2 L13 3.5 M6.5 6.5 V11.5 M9.5 6.5 V11.5" fill="none" stroke="#333" stroke-width="1.3" stroke-linecap="round" stroke-linejoin="round"/></svg><div class="a" style="left:1257px;top:158px;width:243px;height:1px;background:#eeeeee"></div><div class="a" style="left:1261.5px;top:162px;width:225px;height:43px;background:#b8ecdc;border-radius:2px"></div><svg class="a" style="left:1270px;top:178px;" width="8" height="9" viewBox="0 0 8 9"><path d="M1.5 1 L5.5 4.5 L1.5 8" fill="none" stroke="#333" stroke-width="1.4"/></svg><svg class="a" style="left:1288px;top:175px;" width="16" height="16" viewBox="0 0 16 16"><path d="M1 4.5 V1 H4.5 M11.5 1 H15 V4.5 M15 11.5 V15 H11.5 M4.5 15 H1 V11.5" fill="none" stroke="#333" stroke-width="1.3"/><rect x="4" y="4" width="5.5" height="5.5" rx="1" fill="none" stroke="#333" stroke-width="1.3"/><rect x="6.5" y="6.5" width="5.5" height="5.5" rx="2.5" fill="none" stroke="#333" stroke-width="1.3"/></svg><div class="tx" style="left:1312.00px;top:176.96px;font-size:11.63px;line-height:11.63px;font-weight:bold;color:#2c3833;font-family:'Liberation Sans',sans-serif;transform:scaleX(0.9261);transform-origin:0 0;">Group</div><div class="a" style="left:1490px;top:159px;width:10px;height:608px;background:#f4f4f4"></div><svg class="a" style="left:1491px;top:164px;" width="8" height="6" viewBox="0 0 8 6"><path d="M1 5 L4 1.5 L7 5 Z" fill="#aaaaaa"/></svg><svg class="a" style="left:1491px;top:757px;" width="8" height="6" viewBox="0 0 8 6"><path d="M1 1 L4 4.5 L7 1 Z" fill="#999"/></svg><div class="a" style="left:1257px;top:767px;width:243px;height:1px;background:#efefef"></div><div class="a" style="left:1270.5px;top:780px;width:14.5px;height:15px;border:1px solid #e6e6e6;border-radius:3px"></div><div class="tx" style="left:1292.00px;top:781.45px;font-size:11.05px;line-height:11.05px;font-weight:normal;color:#6a6a6a;font-family:'Liberation Sans',sans-serif;transform:scaleX(0.8968);transform-origin:0 0;">Background Color</div><div class="a" style="left:1257px;top:806px;width:243px;height:1px;background:#efefef"></div><svg class="a" style="left:1278px;top:811px;" width="18" height="17" viewBox="0 0 18 17"><rect x="1.5" y="1.5" width="10" height="10" rx="1" fill="none" stroke="#dddddd" stroke-width="1.3"/><circle cx="10" cy="10" r="5" fill="none" stroke="#dddddd" stroke-width="1.3"/></svg><div class="tx" style="left:1279.00px;top:832.12px;font-size:8.72px;line-height:8.72px;font-weight:normal;color:#e0e0e0;font-family:'Liberation Sans',sans-serif;transform:scaleX(0.8464);transform-origin:0 0;">Slice</div><svg class="a" style="left:1319px;top:811px;" width="28" height="17" viewBox="0 0 28 17"><rect x="1.5" y="1.5" width="9.5" height="9.5" rx="1" fill="none" stroke="#333" stroke-width="1.3" stroke-linecap="round" stroke-linejoin="round"/><circle cx="10" cy="10.5" r="5" fill="none" stroke="#333" stroke-width="1.3" stroke-linecap="round" stroke-linejoin="round"/><path d="M20.5 6.5 H25.5 L23 9.5 Z" fill="#222"/></svg><div class="tx" style="left:1314.60px;top:832.12px;font-size:8.72px;line-height:8.72px;font-weight:normal;color:#6a6a6a;font-family:'Liberation Sans',sans-serif;transform:scaleX(0.9570);transform-origin:0 0;">Combine</div><svg class="a" style="left:1367px;top:813px;" width="18" height="12" viewBox="0 0 18 12"><path d="M6 9.5 H12.5 a3.5 3.5 0 0 0 0-7 H4.5 a3.5 3.5 0 0 0 0 7 M12 6.5 H5 a1 1 0 0 1 0-2 H12.5 a1.7 1.7 0 0 1 0 3.4" fill="none" stroke="#333" stroke-width="1.3" stroke-linecap="round" stroke-linejoin="round"/></svg><div class="tx" style="left:1364.00px;top:832.12px;font-size:8.72px;line-height:8.72px;font-weight:normal;color:#6a6a6a;font-family:'Liberation Sans',sans-serif;transform:scaleX(0.9626);transform-origin:0 0;">Attach</div><svg class="a" style="left:1412px;top:811px;" width="17" height="17" viewBox="0 0 17 17"><path d="M8.5 1 V6 M6.5 4 L8.5 6 L10.5 4 M2 7 L8.5 11 L15 7 M2 11 L8.5 15 L15 11" fill="none" stroke="#333" stroke-width="1.3" stroke-linecap="round" stroke-linejoin="round"/></svg><div class="tx" style="left:1408.00px;top:832.12px;font-size:8.72px;line-height:8.72px;font-weight:normal;color:#6a6a6a;font-family:'Liberation Sans',sans-serif;transform:scaleX(0.9377);transform-origin:0 0;">Flatten</div><svg class="a" style="left:1456px;top:811px;" width="17" height="17" viewBox="0 0 17 17"><circle cx="8.5" cy="8.5" r="7" fill="none" stroke="#dddddd" stroke-width="1.3"/><path d="M8.5 5 V9" fill="none" stroke="#dddddd" stroke-width="1.3"/></svg><div class="tx" style="left:1450.00px;top:832.12px;font-size:8.72px;line-height:8.72px;font-weight:normal;color:#e2e2e2;font-family:'Liberation Sans',sans-serif;transform:scaleX(0.9347);transform-origin:0 0;">Contour</div><svg class="a" style="left:0;top:0" width="1500" height="841" viewBox="0 0 1500 841"><path d="M402.0 300.0 C400.7 289.2 399.3 274.2 397.0 265.0 C394.7 255.8 391.5 250.3 388.0 245.0 C384.5 239.7 382.0 235.5 376.0 233.0 C370.0 230.5 359.3 229.5 352.0 230.0 C344.7 230.5 336.7 233.5 332.0 236.0 C327.3 238.5 324.8 241.4 323.7 245.0 C322.6 248.6 328.7 254.2 325.7 257.3 C322.7 260.4 312.2 259.9 305.5 263.4 C298.8 266.9 291.4 273.8 285.3 278.5 C279.2 283.2 272.7 287.1 269.0 291.7 C265.3 296.2 263.7 302.1 263.0 305.8 C262.3 309.5 263.3 311.7 265.0 313.9 C266.7 316.1 272.2 316.6 273.0 319.0 C273.8 321.4 269.7 324.5 270.0 328.0 C270.3 331.5 271.7 337.0 275.0 340.0 C278.3 343.0 288.0 343.7 290.0 346.0 C292.0 348.3 287.3 350.6 287.0 354.0 C286.7 357.4 285.6 363.3 288.0 366.4 C290.4 369.5 298.2 370.5 301.5 372.5 C304.8 374.5 305.1 376.2 307.5 378.5 C309.9 380.8 308.9 383.8 316.0 386.0 C323.1 388.2 335.7 388.3 350.0 392.0 C364.3 395.7 392.8 418.3 402.0 408.0 C411.2 397.7 405.0 348.0 405.0 330.0 C405.0 312.0 403.3 310.8 402.0 300.0 Z" fill="#ecc774" stroke="#c59c17" stroke-width="3.8" stroke-linejoin="round"/><path d="M476.0 330.0 C476.0 312.0 476.5 310.8 478.0 300.0 C479.5 289.2 481.9 274.2 485.0 265.4 C488.1 256.6 491.1 252.6 496.3 247.2 C501.6 241.8 509.8 235.7 516.5 233.0 C523.2 230.3 530.3 230.0 536.7 231.0 C543.1 232.0 551.0 236.0 554.8 239.0 C558.6 242.0 559.1 246.2 559.5 249.0 C559.9 251.8 554.4 253.3 557.0 256.0 C559.6 258.7 568.6 261.1 575.0 265.4 C581.4 269.7 588.5 275.9 595.3 281.6 C602.0 287.3 611.5 295.0 615.5 299.7 C619.5 304.4 619.9 306.8 619.5 309.8 C619.1 312.9 614.8 314.6 613.4 318.0 C612.0 321.4 612.4 326.0 611.4 330.0 C610.4 334.0 609.5 339.5 607.4 342.2 C605.3 344.9 601.4 343.3 599.0 346.0 C596.6 348.7 594.8 354.6 593.2 358.3 C591.6 362.0 591.9 366.1 589.2 368.4 C586.5 370.7 581.9 368.1 577.0 372.0 C572.1 375.9 576.5 386.0 560.0 392.0 C543.5 398.0 492.0 418.3 478.0 408.0 C464.0 397.7 476.0 348.0 476.0 330.0 Z" fill="#ecc774" stroke="#c59c17" stroke-width="3.8" stroke-linejoin="round"/><path d="M345 392 L402 340" stroke="#c59c17" stroke-width="3" stroke-linecap="round"/><path d="M360 398 L403 365" stroke="#c59c17" stroke-width="3" stroke-linecap="round"/><path d="M330 388 L395 330" stroke="#c59c17" stroke-width="3" stroke-linecap="round"/><path d="M380 404 L404 385" stroke="#c59c17" stroke-width="3" stroke-linecap="round"/><path d="M535 392 L478 340" stroke="#c59c17" stroke-width="3" stroke-linecap="round"/><path d="M520 398 L477 365" stroke="#c59c17" stroke-width="3" stroke-linecap="round"/><path d="M550 388 L485 330" stroke="#c59c17" stroke-width="3" stroke-linecap="round"/><path d="M500 404 L476 385" stroke="#c59c17" stroke-width="3" stroke-linecap="round"/><g transform="translate(339.5 371.5) rotate(-17.3)"><ellipse cx="0" cy="0" rx="31.9" ry="10.0" fill="#ecc774" stroke="#c59c17" stroke-width="3.8"/><path d="M29.4 -2.8 L-5.1 -0.2 L29.4 2.0 Z" fill="#c59c17" stroke="#c59c17" stroke-width="1.5" stroke-linejoin="round"/></g><g transform="translate(324.5 350.0) rotate(-21.2)"><ellipse cx="0" cy="0" rx="35.9" ry="11.0" fill="#ecc774" stroke="#c59c17" stroke-width="3.8"/><path d="M33.1 -3.1 L-5.7 -0.2 L33.1 2.2 Z" fill="#c59c17" stroke="#c59c17" stroke-width="1.5" stroke-linejoin="round"/></g><g transform="translate(340.5 302.0) rotate(-17.7)"><ellipse cx="0" cy="0" rx="39.4" ry="12.0" fill="#ecc774" stroke="#c59c17" stroke-width="3.8"/><path d="M36.2 -3.4 L-6.3 -0.2 L36.2 2.4 Z" fill="#c59c17" stroke="#c59c17" stroke-width="1.5" stroke-linejoin="round"/></g><g transform="translate(310.0 323.5) rotate(-21.1)"><ellipse cx="0" cy="0" rx="37.5" ry="12.0" fill="#ecc774" stroke="#c59c17" stroke-width="3.8"/><path d="M34.5 -3.4 L-6.0 -0.2 L34.5 2.4 Z" fill="#c59c17" stroke="#c59c17" stroke-width="1.5" stroke-linejoin="round"/></g><g transform="translate(332.0 270.0) rotate(-24.0)"><ellipse cx="0" cy="0" rx="39.4" ry="12.0" fill="#ecc774" stroke="#c59c17" stroke-width="3.8"/><path d="M36.2 -3.4 L-6.3 -0.2 L36.2 2.4 Z" fill="#c59c17" stroke="#c59c17" stroke-width="1.5" stroke-linejoin="round"/></g><g transform="translate(301.0 293.5) rotate(-23.9)"><ellipse cx="0" cy="0" rx="38.3" ry="12.5" fill="#ecc774" stroke="#c59c17" stroke-width="3.8"/><path d="M35.2 -3.5 L-6.1 -0.2 L35.2 2.5 Z" fill="#c59c17" stroke="#c59c17" stroke-width="1.5" stroke-linejoin="round"/></g><path d="M326 258 C318 246 330 232 352 230 C376 229 393 240 398 262 C402 278 402 292 398 300 C380 290 350 270 326 258 Z" fill="#ecc774" stroke="#c59c17" stroke-width="3.4" stroke-linejoin="round"/><path d="M343 246 C360 244 378 254 386 272 C390 282 392 290 393 296" fill="none" stroke="#c59c17" stroke-width="3" stroke-linecap="round"/><g transform="translate(565.0 352.0) rotate(-154.2)"><ellipse cx="0" cy="0" rx="32.2" ry="10.5" fill="#ecc774" stroke="#c59c17" stroke-width="3.8"/><path d="M29.6 -2.9 L-5.2 -0.2 L29.6 2.1 Z" fill="#c59c17" stroke="#c59c17" stroke-width="1.5" stroke-linejoin="round"/></g><g transform="translate(543.5 302.0) rotate(-158.5)"><ellipse cx="0" cy="0" rx="38.2" ry="12.0" fill="#ecc774" stroke="#c59c17" stroke-width="3.8"/><path d="M35.1 -3.4 L-6.1 -0.2 L35.1 2.4 Z" fill="#c59c17" stroke="#c59c17" stroke-width="1.5" stroke-linejoin="round"/></g><g transform="translate(575.0 323.5) rotate(-152.8)"><ellipse cx="0" cy="0" rx="38.2" ry="12.0" fill="#ecc774" stroke="#c59c17" stroke-width="3.8"/><path d="M35.2 -3.4 L-6.1 -0.2 L35.2 2.4 Z" fill="#c59c17" stroke="#c59c17" stroke-width="1.5" stroke-linejoin="round"/></g><g transform="translate(553.5 270.5) rotate(-153.7)"><ellipse cx="0" cy="0" rx="41.8" ry="12.0" fill="#ecc774" stroke="#c59c17" stroke-width="3.8"/><path d="M38.5 -3.4 L-6.7 -0.2 L38.5 2.4 Z" fill="#c59c17" stroke="#c59c17" stroke-width="1.5" stroke-linejoin="round"/></g><g transform="translate(582.0 291.0) rotate(-149.7)"><ellipse cx="0" cy="0" rx="41.7" ry="12.5" fill="#ecc774" stroke="#c59c17" stroke-width="3.8"/><path d="M38.3 -3.5 L-6.7 -0.2 L38.3 2.5 Z" fill="#c59c17" stroke="#c59c17" stroke-width="1.5" stroke-linejoin="round"/></g><path d="M560 252 C562 240 552 231 536 231 C512 231 493 244 486 264 C481 278 480 292 482 300 C500 292 530 268 560 252 Z" fill="#ecc774" stroke="#c59c17" stroke-width="3.4" stroke-linejoin="round"/><path d="M543 246 C525 244 505 254 497 272 C493 282 491 290 490 296" fill="none" stroke="#c59c17" stroke-width="3" stroke-linecap="round"/><path d="M485.5 353.3 L503 353.5 L527 377.5 L574.6 370 L687 385 L702.5 406.5 L521 379 L490 400 Z" fill="#d3d3d3" stroke="#9a9a9a" stroke-width="0.8"/><path d="M704.0 415.5 L703.6 420.0 L703.0 424.4 L702.5 428.9 L701.8 433.4 L701.0 437.8 L700.2 442.2 L699.3 446.6 L698.3 451.0 L697.2 455.4 L696.1 459.8 L694.9 464.1 L693.6 468.4 L692.2 472.7 L690.7 477.0 L689.2 481.2 L687.6 485.5 L685.9 489.6 L684.2 493.8 L682.3 497.9 L680.5 502.0 L678.5 506.1 L676.4 510.1 L674.3 514.1 L672.2 518.1 L669.9 522.0 L667.6 525.9 L665.2 529.7 L662.7 533.5 L660.2 537.3 L657.6 541.0 L655.0 544.6 L652.2 548.3 L649.5 551.8 L646.6 555.4 L643.7 558.8 L640.7 562.3 L637.7 565.6 L634.6 569.0 L631.5 572.2 L628.3 575.4 L625.0 578.6 L621.7 581.7 L618.3 584.7 L614.9 587.7 L611.4 590.6 L607.9 593.5 L604.3 596.3 L600.7 599.0 L597.0 601.7 L593.3 604.3 L589.5 606.9 L585.7 609.4 L581.8 611.8 L577.9 614.1 L574.0 616.4 L570.0 618.7 L566.0 620.8 L561.9 622.9 L557.9 624.9 L553.7 626.8 L549.6 628.7 L545.4 630.5 L541.1 632.2 L536.9 633.9 L532.6 635.4 L528.3 636.9 L524.0 638.4 L519.6 639.7 L515.2 641.0 L510.8 642.2 L506.4 643.3 L501.9 644.4 L497.5 645.4 L493.0 646.3 L488.5 647.1 L484.0 647.8 L479.5 648.5 L474.9 649.1 L470.4 649.6 L465.8 650.0 L461.3 650.4 L456.7 650.6 L452.1 650.8 L447.6 651.0 L443.0 651.0 L438.4 651.0 L433.9 650.8 L429.3 650.6 L424.7 650.4 L420.2 650.0 L415.6 649.6 L411.1 649.1 L406.5 648.5 L402.0 647.8 L397.5 647.1 L393.0 646.3 L388.5 645.4 L384.1 644.4 L379.6 643.3 L375.2 642.2 L370.8 641.0 L366.4 639.7 L362.0 638.4 L357.7 636.9 L353.4 635.4 L349.1 633.9 L344.9 632.2 L340.6 630.5 L336.4 628.7 L332.3 626.8 L328.1 624.9 L324.1 622.9 L320.0 620.8 L316.0 618.7 L312.0 616.4 L308.1 614.1 L304.2 611.8 L300.3 609.4 L296.5 606.9 L292.7 604.3 L289.0 601.7 L285.3 599.0 L281.7 596.3 L278.1 593.5 L274.6 590.6 L271.1 587.7 L267.7 584.7 L264.3 581.7 L261.0 578.6 L257.7 575.4 L254.5 572.2 L251.4 569.0 L248.3 565.6 L245.3 562.3 L242.3 558.8 L239.4 555.4 L236.5 551.8 L233.8 548.3 L231.0 544.6 L228.4 541.0 L225.8 537.3 L223.3 533.5 L220.8 529.7 L218.4 525.9 L216.1 522.0 L213.8 518.1 L211.7 514.1 L209.6 510.1 L207.5 506.1 L205.5 502.0 L203.7 497.9 L201.8 493.8 L200.1 489.6 L198.4 485.5 L196.8 481.2 L195.3 477.0 L193.8 472.7 L192.4 468.4 L191.1 464.1 L189.9 459.8 L188.8 455.4 L187.7 451.0 L186.7 446.6 L185.8 442.2 L185.0 437.8 L184.2 433.4 L183.5 428.9 L183.0 424.4 L182.4 420.0 L182.0 415.5 Z" fill="#d2d2d2" stroke="#9a9a9a" stroke-width="0.9"/><path d="M521.1 379.3 L520.8 380.7 L520.5 382.2 L520.1 383.6 L519.7 385.0 L519.3 386.5 L518.8 387.9 L518.4 389.3 L517.9 390.7 L517.4 392.1 L516.8 393.4 L516.2 394.8 L515.7 396.2 L515.0 397.5 L514.4 398.9 L513.7 400.2 L513.1 401.5 L512.3 402.8 L511.6 404.1 L510.9 405.4 L510.1 406.6 L509.3 407.9 L508.5 409.1 L507.6 410.4 L506.8 411.6 L505.9 412.8 L505.0 413.9 L504.1 415.1 L503.1 416.2 L502.2 417.4 L501.2 418.5 L500.2 419.6 L499.1 420.6 L498.1 421.7 L497.0 422.7 L496.0 423.8 L494.9 424.8 L493.8 425.8 L492.6 426.7 L491.5 427.7 L490.3 428.6 L489.2 429.5 L488.0 430.4 L486.8 431.2 L485.5 432.1 L484.3 432.9 L483.0 433.7 L481.8 434.5 L480.5 435.2 L479.2 435.9 L477.9 436.7 L476.6 437.3 L475.3 438.0 L473.9 438.6 L472.6 439.3 L471.2 439.8 L469.8 440.4 L468.5 441.0 L467.1 441.5 L465.7 442.0 L464.3 442.4 L462.9 442.9 L461.4 443.3 L460.0 443.7 L458.6 444.1 L457.1 444.4 L455.7 444.7 L454.2 445.0 L452.8 445.3 L451.3 445.6 L449.8 445.8 L448.4 446.0 L446.9 446.1 L445.4 446.3 L443.9 446.4 L442.4 446.5 L441.0 446.5 L439.5 446.6 L438.0 446.6 L436.5 446.6 L435.0 446.5 L433.6 446.5 L432.1 446.4 L430.6 446.3 L429.1 446.1 L427.6 446.0 L426.2 445.8 L424.7 445.6 L423.2 445.3 L421.8 445.0 L420.3 444.7 L418.9 444.4 L417.4 444.1 L416.0 443.7 L414.6 443.3 L413.1 442.9 L411.7 442.4 L410.3 442.0 L408.9 441.5 L407.5 441.0 L406.2 440.4 L404.8 439.8 L403.4 439.3 L402.1 438.6 L400.7 438.0 L399.4 437.3 L398.1 436.7 L396.8 435.9 L395.5 435.2 L394.2 434.5 L393.0 433.7 L391.7 432.9 L390.5 432.1 L389.2 431.2 L388.0 430.4 L386.8 429.5 L385.7 428.6 L384.5 427.7 L383.4 426.7 L382.2 425.8 L381.1 424.8 L380.0 423.8 L379.0 422.7 L377.9 421.7 L376.9 420.6 L375.8 419.6 L374.8 418.5 L373.8 417.4 L372.9 416.2 L371.9 415.1 L371.0 413.9 L370.1 412.8 L369.2 411.6 L368.4 410.4 L367.5 409.1 L366.7 407.9 L365.9 406.6 L365.1 405.4 L364.4 404.1 L363.7 402.8 L362.9 401.5 L362.3 400.2 L361.6 398.9 L361.0 397.5 L360.3 396.2 L359.8 394.8 L359.2 393.4 L358.6 392.1 L358.1 390.7 L357.6 389.3 L357.2 387.9 L356.7 386.5 L356.3 385.0 L355.9 383.6 L355.5 382.2 L355.2 380.7 L354.9 379.3 L484 374 L397 372 Z" fill="#d3d3d3" stroke="#9a9a9a" stroke-width="0.8"/><path d="M702.5 406.5 L700.5 420 L701.8 433.4 A11.3 11.3 0 0 1 697.3 450.8 A11.3 11.3 0 0 1 689.8 467.3 A11.2 11.2 0 0 1 681.3 483.1 A11.1 11.1 0 0 1 671.8 498.0 A11.0 11.0 0 0 1 661.4 512.2 A10.9 10.9 0 0 1 650.3 525.5 A10.8 10.8 0 0 1 638.4 538.0 A10.6 10.6 0 0 1 625.9 549.5 A10.5 10.5 0 0 1 613.4 560.8 A10.4 10.4 0 0 1 601.1 572.1 A10.5 10.5 0 0 1 588.0 582.5 A10.5 10.5 0 0 1 574.3 592.0 A10.5 10.5 0 0 1 559.8 600.6 A10.5 10.5 0 0 1 544.9 608.1 A10.5 10.5 0 0 1 529.4 614.6 A10.5 10.5 0 0 1 513.5 620.0 A10.5 10.5 0 0 1 497.2 624.2 A10.5 10.5 0 0 1 480.7 627.4 A10.5 10.5 0 0 1 464.0 629.4 A10.5 10.5 0 0 1 447.2 630.3 A10.9 10.9 0 0 1 430.2 633.9 A10.7 10.7 0 0 1 413.1 632.5 A10.7 10.7 0 0 1 396.3 629.8 A10.7 10.7 0 0 1 379.6 626.0 A10.7 10.7 0 0 1 363.2 621.1 A10.7 10.7 0 0 1 347.3 615.1 A10.7 10.7 0 0 1 331.8 608.0 A10.6 10.6 0 0 1 316.8 599.8 A10.6 10.6 0 0 1 302.5 590.6 A10.6 10.6 0 0 1 288.8 580.5 A10.6 10.6 0 0 1 275.9 569.4 A10.6 10.6 0 0 1 263.7 557.6 A10.7 10.7 0 0 1 251.1 546.1 A10.8 10.8 0 0 1 239.1 533.6 A10.9 10.9 0 0 1 227.9 520.3 A11.0 11.0 0 0 1 217.4 506.2 A11.1 11.1 0 0 1 207.9 491.3 A11.1 11.1 0 0 1 199.4 475.6 A11.2 11.2 0 0 1 191.9 459.3 A11.3 11.3 0 0 1 185.8 442.2 A5.6 5.6 0 0 1 184.2 433.4 L180 430 L173 406 L354.7 378.7 A85 85 0 0 0 521.3 378.7 Z" fill="#f8f8f8" stroke="#9a9a9a" stroke-width="0.8"/><path transform="translate(205.5 433.0) rotate(0) scale(-0.93 0.93)" d="M0.75 -20.17 L0.29 -19.65 L-0.30 -18.95 L-1.00 -18.10 L-1.76 -17.15 L-2.56 -16.13 L-3.37 -15.08 L-4.15 -14.03 L-4.87 -13.02 L-5.55 -12.05 L-6.25 -11.05 L-6.95 -10.02 L-7.64 -8.97 L-8.31 -7.91 L-8.96 -6.82 L-9.56 -5.72 L-10.11 -4.63 L-10.61 -3.54 L-11.07 -2.43 L-11.51 -1.32 L-11.90 -0.19 L-12.25 0.96 L-12.54 2.11 L-12.78 3.26 L-12.94 4.41 L-13.04 5.55 L-13.08 6.69 L-13.06 7.85 L-12.97 9.01 L-12.81 10.17 L-12.55 11.33 L-12.14 12.44 L-11.59 13.51 L-10.94 14.51 L-10.20 15.43 L-9.38 16.29 L-8.49 17.07 L-7.55 17.78 L-6.56 18.41 L-5.51 18.94 L-4.40 19.36 L-3.24 19.65 L-2.06 19.81 L-0.88 19.85 L0.28 19.80 L1.43 19.66 L2.54 19.44 L3.62 19.15 L4.66 18.77 L5.67 18.29 L6.63 17.71 L7.54 17.06 L8.39 16.35 L9.18 15.58 L9.91 14.75 L10.56 13.87 L11.14 12.93 L11.62 11.91 L11.99 10.86 L12.27 9.79 L12.47 8.71 L12.59 7.63 L12.62 6.57 L12.58 5.52 L12.45 4.47 L12.21 3.44 L11.86 2.44 L11.43 1.49 L10.93 0.59 L10.37 -0.25 L9.75 -1.03 L9.06 -1.75 L8.28 -2.41 L7.40 -2.98 L6.47 -3.41 L5.52 -3.73 L4.58 -3.95 L3.63 -4.08 L2.69 -4.12 L1.75 -4.08 L0.80 -3.92 L-0.15 -3.61 L-1.02 -3.20 L-1.80 -2.69 L-2.51 -2.13 L-3.16 -1.51 L-3.73 -0.83 L-4.19 -0.08 L-4.56 0.81 L-4.82 1.82 L-4.92 2.82 L-4.92 3.74 L-4.85 4.60 L-4.76 5.38 L-4.65 6.05 L-4.54 6.56 L-4.45 6.91 L-0.55 7.09 L-0.42 6.64 L-0.31 6.06 L-0.20 5.42 L-0.08 4.77 L0.06 4.15 L0.23 3.63 L0.40 3.30 L0.56 3.19 L0.76 3.08 L0.99 2.87 L1.21 2.61 L1.45 2.38 L1.69 2.18 L1.92 2.04 L2.09 1.95 L2.20 1.92 L2.38 1.89 L2.69 1.88 L3.07 1.89 L3.49 1.95 L3.89 2.04 L4.25 2.16 L4.52 2.29 L4.72 2.41 L4.93 2.60 L5.22 2.90 L5.52 3.28 L5.82 3.72 L6.08 4.19 L6.29 4.66 L6.45 5.11 L6.55 5.53 L6.60 5.99 L6.62 6.57 L6.60 7.20 L6.53 7.85 L6.41 8.50 L6.26 9.10 L6.07 9.63 L5.86 10.07 L5.60 10.50 L5.25 10.97 L4.83 11.44 L4.36 11.90 L3.86 12.32 L3.34 12.69 L2.83 13.00 L2.34 13.23 L1.80 13.43 L1.17 13.60 L0.49 13.74 L-0.22 13.82 L-0.91 13.85 L-1.56 13.83 L-2.12 13.76 L-2.60 13.64 L-3.06 13.46 L-3.59 13.19 L-4.15 12.84 L-4.70 12.43 L-5.22 11.97 L-5.69 11.47 L-6.09 10.97 L-6.41 10.49 L-6.67 9.98 L-6.92 9.39 L-7.21 8.73 L-7.47 7.99 L-7.68 7.18 L-7.85 6.34 L-7.98 5.46 L-8.06 4.59 L-8.09 3.71 L-8.07 2.78 L-7.98 1.82 L-7.85 0.81 L-7.67 -0.22 L-7.44 -1.27 L-7.18 -2.33 L-6.89 -3.37 L-6.56 -4.41 L-6.17 -5.47 L-5.72 -6.56 L-5.24 -7.65 L-4.72 -8.75 L-4.19 -9.84 L-3.65 -10.92 L-3.13 -11.98 L-2.58 -13.04 L-1.97 -14.16 L-1.32 -15.30 L-0.68 -16.41 L-0.06 -17.46 L0.48 -18.40 L0.93 -19.21 L1.25 -19.83 Z" fill="#d0d0d0" stroke="#8e8e8e" stroke-width="0.91" stroke-linejoin="round"/><path transform="translate(251.8 417.0) rotate(180) scale(0.93 0.93)" d="M0.75 -20.17 L0.29 -19.65 L-0.30 -18.95 L-1.00 -18.10 L-1.76 -17.15 L-2.56 -16.13 L-3.37 -15.08 L-4.15 -14.03 L-4.87 -13.02 L-5.55 -12.05 L-6.25 -11.05 L-6.95 -10.02 L-7.64 -8.97 L-8.31 -7.91 L-8.96 -6.82 L-9.56 -5.72 L-10.11 -4.63 L-10.61 -3.54 L-11.07 -2.43 L-11.51 -1.32 L-11.90 -0.19 L-12.25 0.96 L-12.54 2.11 L-12.78 3.26 L-12.94 4.41 L-13.04 5.55 L-13.08 6.69 L-13.06 7.85 L-12.97 9.01 L-12.81 10.17 L-12.55 11.33 L-12.14 12.44 L-11.59 13.51 L-10.94 14.51 L-10.20 15.43 L-9.38 16.29 L-8.49 17.07 L-7.55 17.78 L-6.56 18.41 L-5.51 18.94 L-4.40 19.36 L-3.24 19.65 L-2.06 19.81 L-0.88 19.85 L0.28 19.80 L1.43 19.66 L2.54 19.44 L3.62 19.15 L4.66 18.77 L5.67 18.29 L6.63 17.71 L7.54 17.06 L8.39 16.35 L9.18 15.58 L9.91 14.75 L10.56 13.87 L11.14 12.93 L11.62 11.91 L11.99 10.86 L12.27 9.79 L12.47 8.71 L12.59 7.63 L12.62 6.57 L12.58 5.52 L12.45 4.47 L12.21 3.44 L11.86 2.44 L11.43 1.49 L10.93 0.59 L10.37 -0.25 L9.75 -1.03 L9.06 -1.75 L8.28 -2.41 L7.40 -2.98 L6.47 -3.41 L5.52 -3.73 L4.58 -3.95 L3.63 -4.08 L2.69 -4.12 L1.75 -4.08 L0.80 -3.92 L-0.15 -3.61 L-1.02 -3.20 L-1.80 -2.69 L-2.51 -2.13 L-3.16 -1.51 L-3.73 -0.83 L-4.19 -0.08 L-4.56 0.81 L-4.82 1.82 L-4.92 2.82 L-4.92 3.74 L-4.85 4.60 L-4.76 5.38 L-4.65 6.05 L-4.54 6.56 L-4.45 6.91 L-0.55 7.09 L-0.42 6.64 L-0.31 6.06 L-0.20 5.42 L-0.08 4.77 L0.06 4.15 L0.23 3.63 L0.40 3.30 L0.56 3.19 L0.76 3.08 L0.99 2.87 L1.21 2.61 L1.45 2.38 L1.69 2.18 L1.92 2.04 L2.09 1.95 L2.20 1.92 L2.38 1.89 L2.69 1.88 L3.07 1.89 L3.49 1.95 L3.89 2.04 L4.25 2.16 L4.52 2.29 L4.72 2.41 L4.93 2.60 L5.22 2.90 L5.52 3.28 L5.82 3.72 L6.08 4.19 L6.29 4.66 L6.45 5.11 L6.55 5.53 L6.60 5.99 L6.62 6.57 L6.60 7.20 L6.53 7.85 L6.41 8.50 L6.26 9.10 L6.07 9.63 L5.86 10.07 L5.60 10.50 L5.25 10.97 L4.83 11.44 L4.36 11.90 L3.86 12.32 L3.34 12.69 L2.83 13.00 L2.34 13.23 L1.80 13.43 L1.17 13.60 L0.49 13.74 L-0.22 13.82 L-0.91 13.85 L-1.56 13.83 L-2.12 13.76 L-2.60 13.64 L-3.06 13.46 L-3.59 13.19 L-4.15 12.84 L-4.70 12.43 L-5.22 11.97 L-5.69 11.47 L-6.09 10.97 L-6.41 10.49 L-6.67 9.98 L-6.92 9.39 L-7.21 8.73 L-7.47 7.99 L-7.68 7.18 L-7.85 6.34 L-7.98 5.46 L-8.06 4.59 L-8.09 3.71 L-8.07 2.78 L-7.98 1.82 L-7.85 0.81 L-7.67 -0.22 L-7.44 -1.27 L-7.18 -2.33 L-6.89 -3.37 L-6.56 -4.41 L-6.17 -5.47 L-5.72 -6.56 L-5.24 -7.65 L-4.72 -8.75 L-4.19 -9.84 L-3.65 -10.92 L-3.13 -11.98 L-2.58 -13.04 L-1.97 -14.16 L-1.32 -15.30 L-0.68 -16.41 L-0.06 -17.46 L0.48 -18.40 L0.93 -19.21 L1.25 -19.83 Z" fill="#d0d0d0" stroke="#8e8e8e" stroke-width="0.91" stroke-linejoin="round"/><path transform="translate(289.7 418.5) rotate(60) scale(-0.93 0.93)" d="M0.75 -20.17 L0.29 -19.65 L-0.30 -18.95 L-1.00 -18.10 L-1.76 -17.15 L-2.56 -16.13 L-3.37 -15.08 L-4.15 -14.03 L-4.87 -13.02 L-5.55 -12.05 L-6.25 -11.05 L-6.95 -10.02 L-7.64 -8.97 L-8.31 -7.91 L-8.96 -6.82 L-9.56 -5.72 L-10.11 -4.63 L-10.61 -3.54 L-11.07 -2.43 L-11.51 -1.32 L-11.90 -0.19 L-12.25 0.96 L-12.54 2.11 L-12.78 3.26 L-12.94 4.41 L-13.04 5.55 L-13.08 6.69 L-13.06 7.85 L-12.97 9.01 L-12.81 10.17 L-12.55 11.33 L-12.14 12.44 L-11.59 13.51 L-10.94 14.51 L-10.20 15.43 L-9.38 16.29 L-8.49 17.07 L-7.55 17.78 L-6.56 18.41 L-5.51 18.94 L-4.40 19.36 L-3.24 19.65 L-2.06 19.81 L-0.88 19.85 L0.28 19.80 L1.43 19.66 L2.54 19.44 L3.62 19.15 L4.66 18.77 L5.67 18.29 L6.63 17.71 L7.54 17.06 L8.39 16.35 L9.18 15.58 L9.91 14.75 L10.56 13.87 L11.14 12.93 L11.62 11.91 L11.99 10.86 L12.27 9.79 L12.47 8.71 L12.59 7.63 L12.62 6.57 L12.58 5.52 L12.45 4.47 L12.21 3.44 L11.86 2.44 L11.43 1.49 L10.93 0.59 L10.37 -0.25 L9.75 -1.03 L9.06 -1.75 L8.28 -2.41 L7.40 -2.98 L6.47 -3.41 L5.52 -3.73 L4.58 -3.95 L3.63 -4.08 L2.69 -4.12 L1.75 -4.08 L0.80 -3.92 L-0.15 -3.61 L-1.02 -3.20 L-1.80 -2.69 L-2.51 -2.13 L-3.16 -1.51 L-3.73 -0.83 L-4.19 -0.08 L-4.56 0.81 L-4.82 1.82 L-4.92 2.82 L-4.92 3.74 L-4.85 4.60 L-4.76 5.38 L-4.65 6.05 L-4.54 6.56 L-4.45 6.91 L-0.55 7.09 L-0.42 6.64 L-0.31 6.06 L-0.20 5.42 L-0.08 4.77 L0.06 4.15 L0.23 3.63 L0.40 3.30 L0.56 3.19 L0.76 3.08 L0.99 2.87 L1.21 2.61 L1.45 2.38 L1.69 2.18 L1.92 2.04 L2.09 1.95 L2.20 1.92 L2.38 1.89 L2.69 1.88 L3.07 1.89 L3.49 1.95 L3.89 2.04 L4.25 2.16 L4.52 2.29 L4.72 2.41 L4.93 2.60 L5.22 2.90 L5.52 3.28 L5.82 3.72 L6.08 4.19 L6.29 4.66 L6.45 5.11 L6.55 5.53 L6.60 5.99 L6.62 6.57 L6.60 7.20 L6.53 7.85 L6.41 8.50 L6.26 9.10 L6.07 9.63 L5.86 10.07 L5.60 10.50 L5.25 10.97 L4.83 11.44 L4.36 11.90 L3.86 12.32 L3.34 12.69 L2.83 13.00 L2.34 13.23 L1.80 13.43 L1.17 13.60 L0.49 13.74 L-0.22 13.82 L-0.91 13.85 L-1.56 13.83 L-2.12 13.76 L-2.60 13.64 L-3.06 13.46 L-3.59 13.19 L-4.15 12.84 L-4.70 12.43 L-5.22 11.97 L-5.69 11.47 L-6.09 10.97 L-6.41 10.49 L-6.67 9.98 L-6.92 9.39 L-7.21 8.73 L-7.47 7.99 L-7.68 7.18 L-7.85 6.34 L-7.98 5.46 L-8.06 4.59 L-8.09 3.71 L-8.07 2.78 L-7.98 1.82 L-7.85 0.81 L-7.67 -0.22 L-7.44 -1.27 L-7.18 -2.33 L-6.89 -3.37 L-6.56 -4.41 L-6.17 -5.47 L-5.72 -6.56 L-5.24 -7.65 L-4.72 -8.75 L-4.19 -9.84 L-3.65 -10.92 L-3.13 -11.98 L-2.58 -13.04 L-1.97 -14.16 L-1.32 -15.30 L-0.68 -16.41 L-0.06 -17.46 L0.48 -18.40 L0.93 -19.21 L1.25 -19.83 Z" fill="#d0d0d0" stroke="#8e8e8e" stroke-width="0.91" stroke-linejoin="round"/><path transform="translate(251.8 451.0) rotate(100) scale(0.93 0.93)" d="M0.75 -20.17 L0.29 -19.65 L-0.30 -18.95 L-1.00 -18.10 L-1.76 -17.15 L-2.56 -16.13 L-3.37 -15.08 L-4.15 -14.03 L-4.87 -13.02 L-5.55 -12.05 L-6.25 -11.05 L-6.95 -10.02 L-7.64 -8.97 L-8.31 -7.91 L-8.96 -6.82 L-9.56 -5.72 L-10.11 -4.63 L-10.61 -3.54 L-11.07 -2.43 L-11.51 -1.32 L-11.90 -0.19 L-12.25 0.96 L-12.54 2.11 L-12.78 3.26 L-12.94 4.41 L-13.04 5.55 L-13.08 6.69 L-13.06 7.85 L-12.97 9.01 L-12.81 10.17 L-12.55 11.33 L-12.14 12.44 L-11.59 13.51 L-10.94 14.51 L-10.20 15.43 L-9.38 16.29 L-8.49 17.07 L-7.55 17.78 L-6.56 18.41 L-5.51 18.94 L-4.40 19.36 L-3.24 19.65 L-2.06 19.81 L-0.88 19.85 L0.28 19.80 L1.43 19.66 L2.54 19.44 L3.62 19.15 L4.66 18.77 L5.67 18.29 L6.63 17.71 L7.54 17.06 L8.39 16.35 L9.18 15.58 L9.91 14.75 L10.56 13.87 L11.14 12.93 L11.62 11.91 L11.99 10.86 L12.27 9.79 L12.47 8.71 L12.59 7.63 L12.62 6.57 L12.58 5.52 L12.45 4.47 L12.21 3.44 L11.86 2.44 L11.43 1.49 L10.93 0.59 L10.37 -0.25 L9.75 -1.03 L9.06 -1.75 L8.28 -2.41 L7.40 -2.98 L6.47 -3.41 L5.52 -3.73 L4.58 -3.95 L3.63 -4.08 L2.69 -4.12 L1.75 -4.08 L0.80 -3.92 L-0.15 -3.61 L-1.02 -3.20 L-1.80 -2.69 L-2.51 -2.13 L-3.16 -1.51 L-3.73 -0.83 L-4.19 -0.08 L-4.56 0.81 L-4.82 1.82 L-4.92 2.82 L-4.92 3.74 L-4.85 4.60 L-4.76 5.38 L-4.65 6.05 L-4.54 6.56 L-4.45 6.91 L-0.55 7.09 L-0.42 6.64 L-0.31 6.06 L-0.20 5.42 L-0.08 4.77 L0.06 4.15 L0.23 3.63 L0.40 3.30 L0.56 3.19 L0.76 3.08 L0.99 2.87 L1.21 2.61 L1.45 2.38 L1.69 2.18 L1.92 2.04 L2.09 1.95 L2.20 1.92 L2.38 1.89 L2.69 1.88 L3.07 1.89 L3.49 1.95 L3.89 2.04 L4.25 2.16 L4.52 2.29 L4.72 2.41 L4.93 2.60 L5.22 2.90 L5.52 3.28 L5.82 3.72 L6.08 4.19 L6.29 4.66 L6.45 5.11 L6.55 5.53 L6.60 5.99 L6.62 6.57 L6.60 7.20 L6.53 7.85 L6.41 8.50 L6.26 9.10 L6.07 9.63 L5.86 10.07 L5.60 10.50 L5.25 10.97 L4.83 11.44 L4.36 11.90 L3.86 12.32 L3.34 12.69 L2.83 13.00 L2.34 13.23 L1.80 13.43 L1.17 13.60 L0.49 13.74 L-0.22 13.82 L-0.91 13.85 L-1.56 13.83 L-2.12 13.76 L-2.60 13.64 L-3.06 13.46 L-3.59 13.19 L-4.15 12.84 L-4.70 12.43 L-5.22 11.97 L-5.69 11.47 L-6.09 10.97 L-6.41 10.49 L-6.67 9.98 L-6.92 9.39 L-7.21 8.73 L-7.47 7.99 L-7.68 7.18 L-7.85 6.34 L-7.98 5.46 L-8.06 4.59 L-8.09 3.71 L-8.07 2.78 L-7.98 1.82 L-7.85 0.81 L-7.67 -0.22 L-7.44 -1.27 L-7.18 -2.33 L-6.89 -3.37 L-6.56 -4.41 L-6.17 -5.47 L-5.72 -6.56 L-5.24 -7.65 L-4.72 -8.75 L-4.19 -9.84 L-3.65 -10.92 L-3.13 -11.98 L-2.58 -13.04 L-1.97 -14.16 L-1.32 -15.30 L-0.68 -16.41 L-0.06 -17.46 L0.48 -18.40 L0.93 -19.21 L1.25 -19.83 Z" fill="#d0d0d0" stroke="#8e8e8e" stroke-width="0.91" stroke-linejoin="round"/><path transform="translate(302.0 449.5) rotate(0) scale(0.93 0.93)" d="M0.75 -20.17 L0.29 -19.65 L-0.30 -18.95 L-1.00 -18.10 L-1.76 -17.15 L-2.56 -16.13 L-3.37 -15.08 L-4.15 -14.03 L-4.87 -13.02 L-5.55 -12.05 L-6.25 -11.05 L-6.95 -10.02 L-7.64 -8.97 L-8.31 -7.91 L-8.96 -6.82 L-9.56 -5.72 L-10.11 -4.63 L-10.61 -3.54 L-11.07 -2.43 L-11.51 -1.32 L-11.90 -0.19 L-12.25 0.96 L-12.54 2.11 L-12.78 3.26 L-12.94 4.41 L-13.04 5.55 L-13.08 6.69 L-13.06 7.85 L-12.97 9.01 L-12.81 10.17 L-12.55 11.33 L-12.14 12.44 L-11.59 13.51 L-10.94 14.51 L-10.20 15.43 L-9.38 16.29 L-8.49 17.07 L-7.55 17.78 L-6.56 18.41 L-5.51 18.94 L-4.40 19.36 L-3.24 19.65 L-2.06 19.81 L-0.88 19.85 L0.28 19.80 L1.43 19.66 L2.54 19.44 L3.62 19.15 L4.66 18.77 L5.67 18.29 L6.63 17.71 L7.54 17.06 L8.39 16.35 L9.18 15.58 L9.91 14.75 L10.56 13.87 L11.14 12.93 L11.62 11.91 L11.99 10.86 L12.27 9.79 L12.47 8.71 L12.59 7.63 L12.62 6.57 L12.58 5.52 L12.45 4.47 L12.21 3.44 L11.86 2.44 L11.43 1.49 L10.93 0.59 L10.37 -0.25 L9.75 -1.03 L9.06 -1.75 L8.28 -2.41 L7.40 -2.98 L6.47 -3.41 L5.52 -3.73 L4.58 -3.95 L3.63 -4.08 L2.69 -4.12 L1.75 -4.08 L0.80 -3.92 L-0.15 -3.61 L-1.02 -3.20 L-1.80 -2.69 L-2.51 -2.13 L-3.16 -1.51 L-3.73 -0.83 L-4.19 -0.08 L-4.56 0.81 L-4.82 1.82 L-4.92 2.82 L-4.92 3.74 L-4.85 4.60 L-4.76 5.38 L-4.65 6.05 L-4.54 6.56 L-4.45 6.91 L-0.55 7.09 L-0.42 6.64 L-0.31 6.06 L-0.20 5.42 L-0.08 4.77 L0.06 4.15 L0.23 3.63 L0.40 3.30 L0.56 3.19 L0.76 3.08 L0.99 2.87 L1.21 2.61 L1.45 2.38 L1.69 2.18 L1.92 2.04 L2.09 1.95 L2.20 1.92 L2.38 1.89 L2.69 1.88 L3.07 1.89 L3.49 1.95 L3.89 2.04 L4.25 2.16 L4.52 2.29 L4.72 2.41 L4.93 2.60 L5.22 2.90 L5.52 3.28 L5.82 3.72 L6.08 4.19 L6.29 4.66 L6.45 5.11 L6.55 5.53 L6.60 5.99 L6.62 6.57 L6.60 7.20 L6.53 7.85 L6.41 8.50 L6.26 9.10 L6.07 9.63 L5.86 10.07 L5.60 10.50 L5.25 10.97 L4.83 11.44 L4.36 11.90 L3.86 12.32 L3.34 12.69 L2.83 13.00 L2.34 13.23 L1.80 13.43 L1.17 13.60 L0.49 13.74 L-0.22 13.82 L-0.91 13.85 L-1.56 13.83 L-2.12 13.76 L-2.60 13.64 L-3.06 13.46 L-3.59 13.19 L-4.15 12.84 L-4.70 12.43 L-5.22 11.97 L-5.69 11.47 L-6.09 10.97 L-6.41 10.49 L-6.67 9.98 L-6.92 9.39 L-7.21 8.73 L-7.47 7.99 L-7.68 7.18 L-7.85 6.34 L-7.98 5.46 L-8.06 4.59 L-8.09 3.71 L-8.07 2.78 L-7.98 1.82 L-7.85 0.81 L-7.67 -0.22 L-7.44 -1.27 L-7.18 -2.33 L-6.89 -3.37 L-6.56 -4.41 L-6.17 -5.47 L-5.72 -6.56 L-5.24 -7.65 L-4.72 -8.75 L-4.19 -9.84 L-3.65 -10.92 L-3.13 -11.98 L-2.58 -13.04 L-1.97 -14.16 L-1.32 -15.30 L-0.68 -16.41 L-0.06 -17.46 L0.48 -18.40 L0.93 -19.21 L1.25 -19.83 Z" fill="#d0d0d0" stroke="#8e8e8e" stroke-width="0.91" stroke-linejoin="round"/><path transform="translate(340.0 444.8) rotate(100) scale(0.93 0.93)" d="M0.75 -20.17 L0.29 -19.65 L-0.30 -18.95 L-1.00 -18.10 L-1.76 -17.15 L-2.56 -16.13 L-3.37 -15.08 L-4.15 -14.03 L-4.87 -13.02 L-5.55 -12.05 L-6.25 -11.05 L-6.95 -10.02 L-7.64 -8.97 L-8.31 -7.91 L-8.96 -6.82 L-9.56 -5.72 L-10.11 -4.63 L-10.61 -3.54 L-11.07 -2.43 L-11.51 -1.32 L-11.90 -0.19 L-12.25 0.96 L-12.54 2.11 L-12.78 3.26 L-12.94 4.41 L-13.04 5.55 L-13.08 6.69 L-13.06 7.85 L-12.97 9.01 L-12.81 10.17 L-12.55 11.33 L-12.14 12.44 L-11.59 13.51 L-10.94 14.51 L-10.20 15.43 L-9.38 16.29 L-8.49 17.07 L-7.55 17.78 L-6.56 18.41 L-5.51 18.94 L-4.40 19.36 L-3.24 19.65 L-2.06 19.81 L-0.88 19.85 L0.28 19.80 L1.43 19.66 L2.54 19.44 L3.62 19.15 L4.66 18.77 L5.67 18.29 L6.63 17.71 L7.54 17.06 L8.39 16.35 L9.18 15.58 L9.91 14.75 L10.56 13.87 L11.14 12.93 L11.62 11.91 L11.99 10.86 L12.27 9.79 L12.47 8.71 L12.59 7.63 L12.62 6.57 L12.58 5.52 L12.45 4.47 L12.21 3.44 L11.86 2.44 L11.43 1.49 L10.93 0.59 L10.37 -0.25 L9.75 -1.03 L9.06 -1.75 L8.28 -2.41 L7.40 -2.98 L6.47 -3.41 L5.52 -3.73 L4.58 -3.95 L3.63 -4.08 L2.69 -4.12 L1.75 -4.08 L0.80 -3.92 L-0.15 -3.61 L-1.02 -3.20 L-1.80 -2.69 L-2.51 -2.13 L-3.16 -1.51 L-3.73 -0.83 L-4.19 -0.08 L-4.56 0.81 L-4.82 1.82 L-4.92 2.82 L-4.92 3.74 L-4.85 4.60 L-4.76 5.38 L-4.65 6.05 L-4.54 6.56 L-4.45 6.91 L-0.55 7.09 L-0.42 6.64 L-0.31 6.06 L-0.20 5.42 L-0.08 4.77 L0.06 4.15 L0.23 3.63 L0.40 3.30 L0.56 3.19 L0.76 3.08 L0.99 2.87 L1.21 2.61 L1.45 2.38 L1.69 2.18 L1.92 2.04 L2.09 1.95 L2.20 1.92 L2.38 1.89 L2.69 1.88 L3.07 1.89 L3.49 1.95 L3.89 2.04 L4.25 2.16 L4.52 2.29 L4.72 2.41 L4.93 2.60 L5.22 2.90 L5.52 3.28 L5.82 3.72 L6.08 4.19 L6.29 4.66 L6.45 5.11 L6.55 5.53 L6.60 5.99 L6.62 6.57 L6.60 7.20 L6.53 7.85 L6.41 8.50 L6.26 9.10 L6.07 9.63 L5.86 10.07 L5.60 10.50 L5.25 10.97 L4.83 11.44 L4.36 11.90 L3.86 12.32 L3.34 12.69 L2.83 13.00 L2.34 13.23 L1.80 13.43 L1.17 13.60 L0.49 13.74 L-0.22 13.82 L-0.91 13.85 L-1.56 13.83 L-2.12 13.76 L-2.60 13.64 L-3.06 13.46 L-3.59 13.19 L-4.15 12.84 L-4.70 12.43 L-5.22 11.97 L-5.69 11.47 L-6.09 10.97 L-6.41 10.49 L-6.67 9.98 L-6.92 9.39 L-7.21 8.73 L-7.47 7.99 L-7.68 7.18 L-7.85 6.34 L-7.98 5.46 L-8.06 4.59 L-8.09 3.71 L-8.07 2.78 L-7.98 1.82 L-7.85 0.81 L-7.67 -0.22 L-7.44 -1.27 L-7.18 -2.33 L-6.89 -3.37 L-6.56 -4.41 L-6.17 -5.47 L-5.72 -6.56 L-5.24 -7.65 L-4.72 -8.75 L-4.19 -9.84 L-3.65 -10.92 L-3.13 -11.98 L-2.58 -13.04 L-1.97 -14.16 L-1.32 -15.30 L-0.68 -16.41 L-0.06 -17.46 L0.48 -18.40 L0.93 -19.21 L1.25 -19.83 Z" fill="#d0d0d0" stroke="#8e8e8e" stroke-width="0.91" stroke-linejoin="round"/><path transform="translate(340.0 413.0) rotate(180) scale(0.93 0.93)" d="M0.75 -20.17 L0.29 -19.65 L-0.30 -18.95 L-1.00 -18.10 L-1.76 -17.15 L-2.56 -16.13 L-3.37 -15.08 L-4.15 -14.03 L-4.87 -13.02 L-5.55 -12.05 L-6.25 -11.05 L-6.95 -10.02 L-7.64 -8.97 L-8.31 -7.91 L-8.96 -6.82 L-9.56 -5.72 L-10.11 -4.63 L-10.61 -3.54 L-11.07 -2.43 L-11.51 -1.32 L-11.90 -0.19 L-12.25 0.96 L-12.54 2.11 L-12.78 3.26 L-12.94 4.41 L-13.04 5.55 L-13.08 6.69 L-13.06 7.85 L-12.97 9.01 L-12.81 10.17 L-12.55 11.33 L-12.14 12.44 L-11.59 13.51 L-10.94 14.51 L-10.20 15.43 L-9.38 16.29 L-8.49 17.07 L-7.55 17.78 L-6.56 18.41 L-5.51 18.94 L-4.40 19.36 L-3.24 19.65 L-2.06 19.81 L-0.88 19.85 L0.28 19.80 L1.43 19.66 L2.54 19.44 L3.62 19.15 L4.66 18.77 L5.67 18.29 L6.63 17.71 L7.54 17.06 L8.39 16.35 L9.18 15.58 L9.91 14.75 L10.56 13.87 L11.14 12.93 L11.62 11.91 L11.99 10.86 L12.27 9.79 L12.47 8.71 L12.59 7.63 L12.62 6.57 L12.58 5.52 L12.45 4.47 L12.21 3.44 L11.86 2.44 L11.43 1.49 L10.93 0.59 L10.37 -0.25 L9.75 -1.03 L9.06 -1.75 L8.28 -2.41 L7.40 -2.98 L6.47 -3.41 L5.52 -3.73 L4.58 -3.95 L3.63 -4.08 L2.69 -4.12 L1.75 -4.08 L0.80 -3.92 L-0.15 -3.61 L-1.02 -3.20 L-1.80 -2.69 L-2.51 -2.13 L-3.16 -1.51 L-3.73 -0.83 L-4.19 -0.08 L-4.56 0.81 L-4.82 1.82 L-4.92 2.82 L-4.92 3.74 L-4.85 4.60 L-4.76 5.38 L-4.65 6.05 L-4.54 6.56 L-4.45 6.91 L-0.55 7.09 L-0.42 6.64 L-0.31 6.06 L-0.20 5.42 L-0.08 4.77 L0.06 4.15 L0.23 3.63 L0.40 3.30 L0.56 3.19 L0.76 3.08 L0.99 2.87 L1.21 2.61 L1.45 2.38 L1.69 2.18 L1.92 2.04 L2.09 1.95 L2.20 1.92 L2.38 1.89 L2.69 1.88 L3.07 1.89 L3.49 1.95 L3.89 2.04 L4.25 2.16 L4.52 2.29 L4.72 2.41 L4.93 2.60 L5.22 2.90 L5.52 3.28 L5.82 3.72 L6.08 4.19 L6.29 4.66 L6.45 5.11 L6.55 5.53 L6.60 5.99 L6.62 6.57 L6.60 7.20 L6.53 7.85 L6.41 8.50 L6.26 9.10 L6.07 9.63 L5.86 10.07 L5.60 10.50 L5.25 10.97 L4.83 11.44 L4.36 11.90 L3.86 12.32 L3.34 12.69 L2.83 13.00 L2.34 13.23 L1.80 13.43 L1.17 13.60 L0.49 13.74 L-0.22 13.82 L-0.91 13.85 L-1.56 13.83 L-2.12 13.76 L-2.60 13.64 L-3.06 13.46 L-3.59 13.19 L-4.15 12.84 L-4.70 12.43 L-5.22 11.97 L-5.69 11.47 L-6.09 10.97 L-6.41 10.49 L-6.67 9.98 L-6.92 9.39 L-7.21 8.73 L-7.47 7.99 L-7.68 7.18 L-7.85 6.34 L-7.98 5.46 L-8.06 4.59 L-8.09 3.71 L-8.07 2.78 L-7.98 1.82 L-7.85 0.81 L-7.67 -0.22 L-7.44 -1.27 L-7.18 -2.33 L-6.89 -3.37 L-6.56 -4.41 L-6.17 -5.47 L-5.72 -6.56 L-5.24 -7.65 L-4.72 -8.75 L-4.19 -9.84 L-3.65 -10.92 L-3.13 -11.98 L-2.58 -13.04 L-1.97 -14.16 L-1.32 -15.30 L-0.68 -16.41 L-0.06 -17.46 L0.48 -18.40 L0.93 -19.21 L1.25 -19.83 Z" fill="#d0d0d0" stroke="#8e8e8e" stroke-width="0.91" stroke-linejoin="round"/><path transform="translate(241.0 491.2) rotate(60) scale(-0.93 0.93)" d="M0.75 -20.17 L0.29 -19.65 L-0.30 -18.95 L-1.00 -18.10 L-1.76 -17.15 L-2.56 -16.13 L-3.37 -15.08 L-4.15 -14.03 L-4.87 -13.02 L-5.55 -12.05 L-6.25 -11.05 L-6.95 -10.02 L-7.64 -8.97 L-8.31 -7.91 L-8.96 -6.82 L-9.56 -5.72 L-10.11 -4.63 L-10.61 -3.54 L-11.07 -2.43 L-11.51 -1.32 L-11.90 -0.19 L-12.25 0.96 L-12.54 2.11 L-12.78 3.26 L-12.94 4.41 L-13.04 5.55 L-13.08 6.69 L-13.06 7.85 L-12.97 9.01 L-12.81 10.17 L-12.55 11.33 L-12.14 12.44 L-11.59 13.51 L-10.94 14.51 L-10.20 15.43 L-9.38 16.29 L-8.49 17.07 L-7.55 17.78 L-6.56 18.41 L-5.51 18.94 L-4.40 19.36 L-3.24 19.65 L-2.06 19.81 L-0.88 19.85 L0.28 19.80 L1.43 19.66 L2.54 19.44 L3.62 19.15 L4.66 18.77 L5.67 18.29 L6.63 17.71 L7.54 17.06 L8.39 16.35 L9.18 15.58 L9.91 14.75 L10.56 13.87 L11.14 12.93 L11.62 11.91 L11.99 10.86 L12.27 9.79 L12.47 8.71 L12.59 7.63 L12.62 6.57 L12.58 5.52 L12.45 4.47 L12.21 3.44 L11.86 2.44 L11.43 1.49 L10.93 0.59 L10.37 -0.25 L9.75 -1.03 L9.06 -1.75 L8.28 -2.41 L7.40 -2.98 L6.47 -3.41 L5.52 -3.73 L4.58 -3.95 L3.63 -4.08 L2.69 -4.12 L1.75 -4.08 L0.80 -3.92 L-0.15 -3.61 L-1.02 -3.20 L-1.80 -2.69 L-2.51 -2.13 L-3.16 -1.51 L-3.73 -0.83 L-4.19 -0.08 L-4.56 0.81 L-4.82 1.82 L-4.92 2.82 L-4.92 3.74 L-4.85 4.60 L-4.76 5.38 L-4.65 6.05 L-4.54 6.56 L-4.45 6.91 L-0.55 7.09 L-0.42 6.64 L-0.31 6.06 L-0.20 5.42 L-0.08 4.77 L0.06 4.15 L0.23 3.63 L0.40 3.30 L0.56 3.19 L0.76 3.08 L0.99 2.87 L1.21 2.61 L1.45 2.38 L1.69 2.18 L1.92 2.04 L2.09 1.95 L2.20 1.92 L2.38 1.89 L2.69 1.88 L3.07 1.89 L3.49 1.95 L3.89 2.04 L4.25 2.16 L4.52 2.29 L4.72 2.41 L4.93 2.60 L5.22 2.90 L5.52 3.28 L5.82 3.72 L6.08 4.19 L6.29 4.66 L6.45 5.11 L6.55 5.53 L6.60 5.99 L6.62 6.57 L6.60 7.20 L6.53 7.85 L6.41 8.50 L6.26 9.10 L6.07 9.63 L5.86 10.07 L5.60 10.50 L5.25 10.97 L4.83 11.44 L4.36 11.90 L3.86 12.32 L3.34 12.69 L2.83 13.00 L2.34 13.23 L1.80 13.43 L1.17 13.60 L0.49 13.74 L-0.22 13.82 L-0.91 13.85 L-1.56 13.83 L-2.12 13.76 L-2.60 13.64 L-3.06 13.46 L-3.59 13.19 L-4.15 12.84 L-4.70 12.43 L-5.22 11.97 L-5.69 11.47 L-6.09 10.97 L-6.41 10.49 L-6.67 9.98 L-6.92 9.39 L-7.21 8.73 L-7.47 7.99 L-7.68 7.18 L-7.85 6.34 L-7.98 5.46 L-8.06 4.59 L-8.09 3.71 L-8.07 2.78 L-7.98 1.82 L-7.85 0.81 L-7.67 -0.22 L-7.44 -1.27 L-7.18 -2.33 L-6.89 -3.37 L-6.56 -4.41 L-6.17 -5.47 L-5.72 -6.56 L-5.24 -7.65 L-4.72 -8.75 L-4.19 -9.84 L-3.65 -10.92 L-3.13 -11.98 L-2.58 -13.04 L-1.97 -14.16 L-1.32 -15.30 L-0.68 -16.41 L-0.06 -17.46 L0.48 -18.40 L0.93 -19.21 L1.25 -19.83 Z" fill="#d0d0d0" stroke="#8e8e8e" stroke-width="0.91" stroke-linejoin="round"/><path transform="translate(292.8 491.2) rotate(60) scale(-0.93 0.93)" d="M0.75 -20.17 L0.29 -19.65 L-0.30 -18.95 L-1.00 -18.10 L-1.76 -17.15 L-2.56 -16.13 L-3.37 -15.08 L-4.15 -14.03 L-4.87 -13.02 L-5.55 -12.05 L-6.25 -11.05 L-6.95 -10.02 L-7.64 -8.97 L-8.31 -7.91 L-8.96 -6.82 L-9.56 -5.72 L-10.11 -4.63 L-10.61 -3.54 L-11.07 -2.43 L-11.51 -1.32 L-11.90 -0.19 L-12.25 0.96 L-12.54 2.11 L-12.78 3.26 L-12.94 4.41 L-13.04 5.55 L-13.08 6.69 L-13.06 7.85 L-12.97 9.01 L-12.81 10.17 L-12.55 11.33 L-12.14 12.44 L-11.59 13.51 L-10.94 14.51 L-10.20 15.43 L-9.38 16.29 L-8.49 17.07 L-7.55 17.78 L-6.56 18.41 L-5.51 18.94 L-4.40 19.36 L-3.24 19.65 L-2.06 19.81 L-0.88 19.85 L0.28 19.80 L1.43 19.66 L2.54 19.44 L3.62 19.15 L4.66 18.77 L5.67 18.29 L6.63 17.71 L7.54 17.06 L8.39 16.35 L9.18 15.58 L9.91 14.75 L10.56 13.87 L11.14 12.93 L11.62 11.91 L11.99 10.86 L12.27 9.79 L12.47 8.71 L12.59 7.63 L12.62 6.57 L12.58 5.52 L12.45 4.47 L12.21 3.44 L11.86 2.44 L11.43 1.49 L10.93 0.59 L10.37 -0.25 L9.75 -1.03 L9.06 -1.75 L8.28 -2.41 L7.40 -2.98 L6.47 -3.41 L5.52 -3.73 L4.58 -3.95 L3.63 -4.08 L2.69 -4.12 L1.75 -4.08 L0.80 -3.92 L-0.15 -3.61 L-1.02 -3.20 L-1.80 -2.69 L-2.51 -2.13 L-3.16 -1.51 L-3.73 -0.83 L-4.19 -0.08 L-4.56 0.81 L-4.82 1.82 L-4.92 2.82 L-4.92 3.74 L-4.85 4.60 L-4.76 5.38 L-4.65 6.05 L-4.54 6.56 L-4.45 6.91 L-0.55 7.09 L-0.42 6.64 L-0.31 6.06 L-0.20 5.42 L-0.08 4.77 L0.06 4.15 L0.23 3.63 L0.40 3.30 L0.56 3.19 L0.76 3.08 L0.99 2.87 L1.21 2.61 L1.45 2.38 L1.69 2.18 L1.92 2.04 L2.09 1.95 L2.20 1.92 L2.38 1.89 L2.69 1.88 L3.07 1.89 L3.49 1.95 L3.89 2.04 L4.25 2.16 L4.52 2.29 L4.72 2.41 L4.93 2.60 L5.22 2.90 L5.52 3.28 L5.82 3.72 L6.08 4.19 L6.29 4.66 L6.45 5.11 L6.55 5.53 L6.60 5.99 L6.62 6.57 L6.60 7.20 L6.53 7.85 L6.41 8.50 L6.26 9.10 L6.07 9.63 L5.86 10.07 L5.60 10.50 L5.25 10.97 L4.83 11.44 L4.36 11.90 L3.86 12.32 L3.34 12.69 L2.83 13.00 L2.34 13.23 L1.80 13.43 L1.17 13.60 L0.49 13.74 L-0.22 13.82 L-0.91 13.85 L-1.56 13.83 L-2.12 13.76 L-2.60 13.64 L-3.06 13.46 L-3.59 13.19 L-4.15 12.84 L-4.70 12.43 L-5.22 11.97 L-5.69 11.47 L-6.09 10.97 L-6.41 10.49 L-6.67 9.98 L-6.92 9.39 L-7.21 8.73 L-7.47 7.99 L-7.68 7.18 L-7.85 6.34 L-7.98 5.46 L-8.06 4.59 L-8.09 3.71 L-8.07 2.78 L-7.98 1.82 L-7.85 0.81 L-7.67 -0.22 L-7.44 -1.27 L-7.18 -2.33 L-6.89 -3.37 L-6.56 -4.41 L-6.17 -5.47 L-5.72 -6.56 L-5.24 -7.65 L-4.72 -8.75 L-4.19 -9.84 L-3.65 -10.92 L-3.13 -11.98 L-2.58 -13.04 L-1.97 -14.16 L-1.32 -15.30 L-0.68 -16.41 L-0.06 -17.46 L0.48 -18.40 L0.93 -19.21 L1.25 -19.83 Z" fill="#d0d0d0" stroke="#8e8e8e" stroke-width="0.91" stroke-linejoin="round"/><path transform="translate(342.0 480.4) rotate(180) scale(0.93 0.93)" d="M0.75 -20.17 L0.29 -19.65 L-0.30 -18.95 L-1.00 -18.10 L-1.76 -17.15 L-2.56 -16.13 L-3.37 -15.08 L-4.15 -14.03 L-4.87 -13.02 L-5.55 -12.05 L-6.25 -11.05 L-6.95 -10.02 L-7.64 -8.97 L-8.31 -7.91 L-8.96 -6.82 L-9.56 -5.72 L-10.11 -4.63 L-10.61 -3.54 L-11.07 -2.43 L-11.51 -1.32 L-11.90 -0.19 L-12.25 0.96 L-12.54 2.11 L-12.78 3.26 L-12.94 4.41 L-13.04 5.55 L-13.08 6.69 L-13.06 7.85 L-12.97 9.01 L-12.81 10.17 L-12.55 11.33 L-12.14 12.44 L-11.59 13.51 L-10.94 14.51 L-10.20 15.43 L-9.38 16.29 L-8.49 17.07 L-7.55 17.78 L-6.56 18.41 L-5.51 18.94 L-4.40 19.36 L-3.24 19.65 L-2.06 19.81 L-0.88 19.85 L0.28 19.80 L1.43 19.66 L2.54 19.44 L3.62 19.15 L4.66 18.77 L5.67 18.29 L6.63 17.71 L7.54 17.06 L8.39 16.35 L9.18 15.58 L9.91 14.75 L10.56 13.87 L11.14 12.93 L11.62 11.91 L11.99 10.86 L12.27 9.79 L12.47 8.71 L12.59 7.63 L12.62 6.57 L12.58 5.52 L12.45 4.47 L12.21 3.44 L11.86 2.44 L11.43 1.49 L10.93 0.59 L10.37 -0.25 L9.75 -1.03 L9.06 -1.75 L8.28 -2.41 L7.40 -2.98 L6.47 -3.41 L5.52 -3.73 L4.58 -3.95 L3.63 -4.08 L2.69 -4.12 L1.75 -4.08 L0.80 -3.92 L-0.15 -3.61 L-1.02 -3.20 L-1.80 -2.69 L-2.51 -2.13 L-3.16 -1.51 L-3.73 -0.83 L-4.19 -0.08 L-4.56 0.81 L-4.82 1.82 L-4.92 2.82 L-4.92 3.74 L-4.85 4.60 L-4.76 5.38 L-4.65 6.05 L-4.54 6.56 L-4.45 6.91 L-0.55 7.09 L-0.42 6.64 L-0.31 6.06 L-0.20 5.42 L-0.08 4.77 L0.06 4.15 L0.23 3.63 L0.40 3.30 L0.56 3.19 L0.76 3.08 L0.99 2.87 L1.21 2.61 L1.45 2.38 L1.69 2.18 L1.92 2.04 L2.09 1.95 L2.20 1.92 L2.38 1.89 L2.69 1.88 L3.07 1.89 L3.49 1.95 L3.89 2.04 L4.25 2.16 L4.52 2.29 L4.72 2.41 L4.93 2.60 L5.22 2.90 L5.52 3.28 L5.82 3.72 L6.08 4.19 L6.29 4.66 L6.45 5.11 L6.55 5.53 L6.60 5.99 L6.62 6.57 L6.60 7.20 L6.53 7.85 L6.41 8.50 L6.26 9.10 L6.07 9.63 L5.86 10.07 L5.60 10.50 L5.25 10.97 L4.83 11.44 L4.36 11.90 L3.86 12.32 L3.34 12.69 L2.83 13.00 L2.34 13.23 L1.80 13.43 L1.17 13.60 L0.49 13.74 L-0.22 13.82 L-0.91 13.85 L-1.56 13.83 L-2.12 13.76 L-2.60 13.64 L-3.06 13.46 L-3.59 13.19 L-4.15 12.84 L-4.70 12.43 L-5.22 11.97 L-5.69 11.47 L-6.09 10.97 L-6.41 10.49 L-6.67 9.98 L-6.92 9.39 L-7.21 8.73 L-7.47 7.99 L-7.68 7.18 L-7.85 6.34 L-7.98 5.46 L-8.06 4.59 L-8.09 3.71 L-8.07 2.78 L-7.98 1.82 L-7.85 0.81 L-7.67 -0.22 L-7.44 -1.27 L-7.18 -2.33 L-6.89 -3.37 L-6.56 -4.41 L-6.17 -5.47 L-5.72 -6.56 L-5.24 -7.65 L-4.72 -8.75 L-4.19 -9.84 L-3.65 -10.92 L-3.13 -11.98 L-2.58 -13.04 L-1.97 -14.16 L-1.32 -15.30 L-0.68 -16.41 L-0.06 -17.46 L0.48 -18.40 L0.93 -19.21 L1.25 -19.83 Z" fill="#d0d0d0" stroke="#8e8e8e" stroke-width="0.91" stroke-linejoin="round"/><path transform="translate(251.8 522.0) rotate(0) scale(0.93 0.93)" d="M0.75 -20.17 L0.29 -19.65 L-0.30 -18.95 L-1.00 -18.10 L-1.76 -17.15 L-2.56 -16.13 L-3.37 -15.08 L-4.15 -14.03 L-4.87 -13.02 L-5.55 -12.05 L-6.25 -11.05 L-6.95 -10.02 L-7.64 -8.97 L-8.31 -7.91 L-8.96 -6.82 L-9.56 -5.72 L-10.11 -4.63 L-10.61 -3.54 L-11.07 -2.43 L-11.51 -1.32 L-11.90 -0.19 L-12.25 0.96 L-12.54 2.11 L-12.78 3.26 L-12.94 4.41 L-13.04 5.55 L-13.08 6.69 L-13.06 7.85 L-12.97 9.01 L-12.81 10.17 L-12.55 11.33 L-12.14 12.44 L-11.59 13.51 L-10.94 14.51 L-10.20 15.43 L-9.38 16.29 L-8.49 17.07 L-7.55 17.78 L-6.56 18.41 L-5.51 18.94 L-4.40 19.36 L-3.24 19.65 L-2.06 19.81 L-0.88 19.85 L0.28 19.80 L1.43 19.66 L2.54 19.44 L3.62 19.15 L4.66 18.77 L5.67 18.29 L6.63 17.71 L7.54 17.06 L8.39 16.35 L9.18 15.58 L9.91 14.75 L10.56 13.87 L11.14 12.93 L11.62 11.91 L11.99 10.86 L12.27 9.79 L12.47 8.71 L12.59 7.63 L12.62 6.57 L12.58 5.52 L12.45 4.47 L12.21 3.44 L11.86 2.44 L11.43 1.49 L10.93 0.59 L10.37 -0.25 L9.75 -1.03 L9.06 -1.75 L8.28 -2.41 L7.40 -2.98 L6.47 -3.41 L5.52 -3.73 L4.58 -3.95 L3.63 -4.08 L2.69 -4.12 L1.75 -4.08 L0.80 -3.92 L-0.15 -3.61 L-1.02 -3.20 L-1.80 -2.69 L-2.51 -2.13 L-3.16 -1.51 L-3.73 -0.83 L-4.19 -0.08 L-4.56 0.81 L-4.82 1.82 L-4.92 2.82 L-4.92 3.74 L-4.85 4.60 L-4.76 5.38 L-4.65 6.05 L-4.54 6.56 L-4.45 6.91 L-0.55 7.09 L-0.42 6.64 L-0.31 6.06 L-0.20 5.42 L-0.08 4.77 L0.06 4.15 L0.23 3.63 L0.40 3.30 L0.56 3.19 L0.76 3.08 L0.99 2.87 L1.21 2.61 L1.45 2.38 L1.69 2.18 L1.92 2.04 L2.09 1.95 L2.20 1.92 L2.38 1.89 L2.69 1.88 L3.07 1.89 L3.49 1.95 L3.89 2.04 L4.25 2.16 L4.52 2.29 L4.72 2.41 L4.93 2.60 L5.22 2.90 L5.52 3.28 L5.82 3.72 L6.08 4.19 L6.29 4.66 L6.45 5.11 L6.55 5.53 L6.60 5.99 L6.62 6.57 L6.60 7.20 L6.53 7.85 L6.41 8.50 L6.26 9.10 L6.07 9.63 L5.86 10.07 L5.60 10.50 L5.25 10.97 L4.83 11.44 L4.36 11.90 L3.86 12.32 L3.34 12.69 L2.83 13.00 L2.34 13.23 L1.80 13.43 L1.17 13.60 L0.49 13.74 L-0.22 13.82 L-0.91 13.85 L-1.56 13.83 L-2.12 13.76 L-2.60 13.64 L-3.06 13.46 L-3.59 13.19 L-4.15 12.84 L-4.70 12.43 L-5.22 11.97 L-5.69 11.47 L-6.09 10.97 L-6.41 10.49 L-6.67 9.98 L-6.92 9.39 L-7.21 8.73 L-7.47 7.99 L-7.68 7.18 L-7.85 6.34 L-7.98 5.46 L-8.06 4.59 L-8.09 3.71 L-8.07 2.78 L-7.98 1.82 L-7.85 0.81 L-7.67 -0.22 L-7.44 -1.27 L-7.18 -2.33 L-6.89 -3.37 L-6.56 -4.41 L-6.17 -5.47 L-5.72 -6.56 L-5.24 -7.65 L-4.72 -8.75 L-4.19 -9.84 L-3.65 -10.92 L-3.13 -11.98 L-2.58 -13.04 L-1.97 -14.16 L-1.32 -15.30 L-0.68 -16.41 L-0.06 -17.46 L0.48 -18.40 L0.93 -19.21 L1.25 -19.83 Z" fill="#d0d0d0" stroke="#8e8e8e" stroke-width="0.91" stroke-linejoin="round"/><path transform="translate(304.4 522.0) rotate(0) scale(0.93 0.93)" d="M0.75 -20.17 L0.29 -19.65 L-0.30 -18.95 L-1.00 -18.10 L-1.76 -17.15 L-2.56 -16.13 L-3.37 -15.08 L-4.15 -14.03 L-4.87 -13.02 L-5.55 -12.05 L-6.25 -11.05 L-6.95 -10.02 L-7.64 -8.97 L-8.31 -7.91 L-8.96 -6.82 L-9.56 -5.72 L-10.11 -4.63 L-10.61 -3.54 L-11.07 -2.43 L-11.51 -1.32 L-11.90 -0.19 L-12.25 0.96 L-12.54 2.11 L-12.78 3.26 L-12.94 4.41 L-13.04 5.55 L-13.08 6.69 L-13.06 7.85 L-12.97 9.01 L-12.81 10.17 L-12.55 11.33 L-12.14 12.44 L-11.59 13.51 L-10.94 14.51 L-10.20 15.43 L-9.38 16.29 L-8.49 17.07 L-7.55 17.78 L-6.56 18.41 L-5.51 18.94 L-4.40 19.36 L-3.24 19.65 L-2.06 19.81 L-0.88 19.85 L0.28 19.80 L1.43 19.66 L2.54 19.44 L3.62 19.15 L4.66 18.77 L5.67 18.29 L6.63 17.71 L7.54 17.06 L8.39 16.35 L9.18 15.58 L9.91 14.75 L10.56 13.87 L11.14 12.93 L11.62 11.91 L11.99 10.86 L12.27 9.79 L12.47 8.71 L12.59 7.63 L12.62 6.57 L12.58 5.52 L12.45 4.47 L12.21 3.44 L11.86 2.44 L11.43 1.49 L10.93 0.59 L10.37 -0.25 L9.75 -1.03 L9.06 -1.75 L8.28 -2.41 L7.40 -2.98 L6.47 -3.41 L5.52 -3.73 L4.58 -3.95 L3.63 -4.08 L2.69 -4.12 L1.75 -4.08 L0.80 -3.92 L-0.15 -3.61 L-1.02 -3.20 L-1.80 -2.69 L-2.51 -2.13 L-3.16 -1.51 L-3.73 -0.83 L-4.19 -0.08 L-4.56 0.81 L-4.82 1.82 L-4.92 2.82 L-4.92 3.74 L-4.85 4.60 L-4.76 5.38 L-4.65 6.05 L-4.54 6.56 L-4.45 6.91 L-0.55 7.09 L-0.42 6.64 L-0.31 6.06 L-0.20 5.42 L-0.08 4.77 L0.06 4.15 L0.23 3.63 L0.40 3.30 L0.56 3.19 L0.76 3.08 L0.99 2.87 L1.21 2.61 L1.45 2.38 L1.69 2.18 L1.92 2.04 L2.09 1.95 L2.20 1.92 L2.38 1.89 L2.69 1.88 L3.07 1.89 L3.49 1.95 L3.89 2.04 L4.25 2.16 L4.52 2.29 L4.72 2.41 L4.93 2.60 L5.22 2.90 L5.52 3.28 L5.82 3.72 L6.08 4.19 L6.29 4.66 L6.45 5.11 L6.55 5.53 L6.60 5.99 L6.62 6.57 L6.60 7.20 L6.53 7.85 L6.41 8.50 L6.26 9.10 L6.07 9.63 L5.86 10.07 L5.60 10.50 L5.25 10.97 L4.83 11.44 L4.36 11.90 L3.86 12.32 L3.34 12.69 L2.83 13.00 L2.34 13.23 L1.80 13.43 L1.17 13.60 L0.49 13.74 L-0.22 13.82 L-0.91 13.85 L-1.56 13.83 L-2.12 13.76 L-2.60 13.64 L-3.06 13.46 L-3.59 13.19 L-4.15 12.84 L-4.70 12.43 L-5.22 11.97 L-5.69 11.47 L-6.09 10.97 L-6.41 10.49 L-6.67 9.98 L-6.92 9.39 L-7.21 8.73 L-7.47 7.99 L-7.68 7.18 L-7.85 6.34 L-7.98 5.46 L-8.06 4.59 L-8.09 3.71 L-8.07 2.78 L-7.98 1.82 L-7.85 0.81 L-7.67 -0.22 L-7.44 -1.27 L-7.18 -2.33 L-6.89 -3.37 L-6.56 -4.41 L-6.17 -5.47 L-5.72 -6.56 L-5.24 -7.65 L-4.72 -8.75 L-4.19 -9.84 L-3.65 -10.92 L-3.13 -11.98 L-2.58 -13.04 L-1.97 -14.16 L-1.32 -15.30 L-0.68 -16.41 L-0.06 -17.46 L0.48 -18.40 L0.93 -19.21 L1.25 -19.83 Z" fill="#d0d0d0" stroke="#8e8e8e" stroke-width="0.91" stroke-linejoin="round"/><path transform="translate(342.0 516.0) rotate(100) scale(0.93 0.93)" d="M0.75 -20.17 L0.29 -19.65 L-0.30 -18.95 L-1.00 -18.10 L-1.76 -17.15 L-2.56 -16.13 L-3.37 -15.08 L-4.15 -14.03 L-4.87 -13.02 L-5.55 -12.05 L-6.25 -11.05 L-6.95 -10.02 L-7.64 -8.97 L-8.31 -7.91 L-8.96 -6.82 L-9.56 -5.72 L-10.11 -4.63 L-10.61 -3.54 L-11.07 -2.43 L-11.51 -1.32 L-11.90 -0.19 L-12.25 0.96 L-12.54 2.11 L-12.78 3.26 L-12.94 4.41 L-13.04 5.55 L-13.08 6.69 L-13.06 7.85 L-12.97 9.01 L-12.81 10.17 L-12.55 11.33 L-12.14 12.44 L-11.59 13.51 L-10.94 14.51 L-10.20 15.43 L-9.38 16.29 L-8.49 17.07 L-7.55 17.78 L-6.56 18.41 L-5.51 18.94 L-4.40 19.36 L-3.24 19.65 L-2.06 19.81 L-0.88 19.85 L0.28 19.80 L1.43 19.66 L2.54 19.44 L3.62 19.15 L4.66 18.77 L5.67 18.29 L6.63 17.71 L7.54 17.06 L8.39 16.35 L9.18 15.58 L9.91 14.75 L10.56 13.87 L11.14 12.93 L11.62 11.91 L11.99 10.86 L12.27 9.79 L12.47 8.71 L12.59 7.63 L12.62 6.57 L12.58 5.52 L12.45 4.47 L12.21 3.44 L11.86 2.44 L11.43 1.49 L10.93 0.59 L10.37 -0.25 L9.75 -1.03 L9.06 -1.75 L8.28 -2.41 L7.40 -2.98 L6.47 -3.41 L5.52 -3.73 L4.58 -3.95 L3.63 -4.08 L2.69 -4.12 L1.75 -4.08 L0.80 -3.92 L-0.15 -3.61 L-1.02 -3.20 L-1.80 -2.69 L-2.51 -2.13 L-3.16 -1.51 L-3.73 -0.83 L-4.19 -0.08 L-4.56 0.81 L-4.82 1.82 L-4.92 2.82 L-4.92 3.74 L-4.85 4.60 L-4.76 5.38 L-4.65 6.05 L-4.54 6.56 L-4.45 6.91 L-0.55 7.09 L-0.42 6.64 L-0.31 6.06 L-0.20 5.42 L-0.08 4.77 L0.06 4.15 L0.23 3.63 L0.40 3.30 L0.56 3.19 L0.76 3.08 L0.99 2.87 L1.21 2.61 L1.45 2.38 L1.69 2.18 L1.92 2.04 L2.09 1.95 L2.20 1.92 L2.38 1.89 L2.69 1.88 L3.07 1.89 L3.49 1.95 L3.89 2.04 L4.25 2.16 L4.52 2.29 L4.72 2.41 L4.93 2.60 L5.22 2.90 L5.52 3.28 L5.82 3.72 L6.08 4.19 L6.29 4.66 L6.45 5.11 L6.55 5.53 L6.60 5.99 L6.62 6.57 L6.60 7.20 L6.53 7.85 L6.41 8.50 L6.26 9.10 L6.07 9.63 L5.86 10.07 L5.60 10.50 L5.25 10.97 L4.83 11.44 L4.36 11.90 L3.86 12.32 L3.34 12.69 L2.83 13.00 L2.34 13.23 L1.80 13.43 L1.17 13.60 L0.49 13.74 L-0.22 13.82 L-0.91 13.85 L-1.56 13.83 L-2.12 13.76 L-2.60 13.64 L-3.06 13.46 L-3.59 13.19 L-4.15 12.84 L-4.70 12.43 L-5.22 11.97 L-5.69 11.47 L-6.09 10.97 L-6.41 10.49 L-6.67 9.98 L-6.92 9.39 L-7.21 8.73 L-7.47 7.99 L-7.68 7.18 L-7.85 6.34 L-7.98 5.46 L-8.06 4.59 L-8.09 3.71 L-8.07 2.78 L-7.98 1.82 L-7.85 0.81 L-7.67 -0.22 L-7.44 -1.27 L-7.18 -2.33 L-6.89 -3.37 L-6.56 -4.41 L-6.17 -5.47 L-5.72 -6.56 L-5.24 -7.65 L-4.72 -8.75 L-4.19 -9.84 L-3.65 -10.92 L-3.13 -11.98 L-2.58 -13.04 L-1.97 -14.16 L-1.32 -15.30 L-0.68 -16.41 L-0.06 -17.46 L0.48 -18.40 L0.93 -19.21 L1.25 -19.83 Z" fill="#d0d0d0" stroke="#8e8e8e" stroke-width="0.91" stroke-linejoin="round"/><path transform="translate(292.9 554.3) rotate(60) scale(-0.93 0.93)" d="M0.75 -20.17 L0.29 -19.65 L-0.30 -18.95 L-1.00 -18.10 L-1.76 -17.15 L-2.56 -16.13 L-3.37 -15.08 L-4.15 -14.03 L-4.87 -13.02 L-5.55 -12.05 L-6.25 -11.05 L-6.95 -10.02 L-7.64 -8.97 L-8.31 -7.91 L-8.96 -6.82 L-9.56 -5.72 L-10.11 -4.63 L-10.61 -3.54 L-11.07 -2.43 L-11.51 -1.32 L-11.90 -0.19 L-12.25 0.96 L-12.54 2.11 L-12.78 3.26 L-12.94 4.41 L-13.04 5.55 L-13.08 6.69 L-13.06 7.85 L-12.97 9.01 L-12.81 10.17 L-12.55 11.33 L-12.14 12.44 L-11.59 13.51 L-10.94 14.51 L-10.20 15.43 L-9.38 16.29 L-8.49 17.07 L-7.55 17.78 L-6.56 18.41 L-5.51 18.94 L-4.40 19.36 L-3.24 19.65 L-2.06 19.81 L-0.88 19.85 L0.28 19.80 L1.43 19.66 L2.54 19.44 L3.62 19.15 L4.66 18.77 L5.67 18.29 L6.63 17.71 L7.54 17.06 L8.39 16.35 L9.18 15.58 L9.91 14.75 L10.56 13.87 L11.14 12.93 L11.62 11.91 L11.99 10.86 L12.27 9.79 L12.47 8.71 L12.59 7.63 L12.62 6.57 L12.58 5.52 L12.45 4.47 L12.21 3.44 L11.86 2.44 L11.43 1.49 L10.93 0.59 L10.37 -0.25 L9.75 -1.03 L9.06 -1.75 L8.28 -2.41 L7.40 -2.98 L6.47 -3.41 L5.52 -3.73 L4.58 -3.95 L3.63 -4.08 L2.69 -4.12 L1.75 -4.08 L0.80 -3.92 L-0.15 -3.61 L-1.02 -3.20 L-1.80 -2.69 L-2.51 -2.13 L-3.16 -1.51 L-3.73 -0.83 L-4.19 -0.08 L-4.56 0.81 L-4.82 1.82 L-4.92 2.82 L-4.92 3.74 L-4.85 4.60 L-4.76 5.38 L-4.65 6.05 L-4.54 6.56 L-4.45 6.91 L-0.55 7.09 L-0.42 6.64 L-0.31 6.06 L-0.20 5.42 L-0.08 4.77 L0.06 4.15 L0.23 3.63 L0.40 3.30 L0.56 3.19 L0.76 3.08 L0.99 2.87 L1.21 2.61 L1.45 2.38 L1.69 2.18 L1.92 2.04 L2.09 1.95 L2.20 1.92 L2.38 1.89 L2.69 1.88 L3.07 1.89 L3.49 1.95 L3.89 2.04 L4.25 2.16 L4.52 2.29 L4.72 2.41 L4.93 2.60 L5.22 2.90 L5.52 3.28 L5.82 3.72 L6.08 4.19 L6.29 4.66 L6.45 5.11 L6.55 5.53 L6.60 5.99 L6.62 6.57 L6.60 7.20 L6.53 7.85 L6.41 8.50 L6.26 9.10 L6.07 9.63 L5.86 10.07 L5.60 10.50 L5.25 10.97 L4.83 11.44 L4.36 11.90 L3.86 12.32 L3.34 12.69 L2.83 13.00 L2.34 13.23 L1.80 13.43 L1.17 13.60 L0.49 13.74 L-0.22 13.82 L-0.91 13.85 L-1.56 13.83 L-2.12 13.76 L-2.60 13.64 L-3.06 13.46 L-3.59 13.19 L-4.15 12.84 L-4.70 12.43 L-5.22 11.97 L-5.69 11.47 L-6.09 10.97 L-6.41 10.49 L-6.67 9.98 L-6.92 9.39 L-7.21 8.73 L-7.47 7.99 L-7.68 7.18 L-7.85 6.34 L-7.98 5.46 L-8.06 4.59 L-8.09 3.71 L-8.07 2.78 L-7.98 1.82 L-7.85 0.81 L-7.67 -0.22 L-7.44 -1.27 L-7.18 -2.33 L-6.89 -3.37 L-6.56 -4.41 L-6.17 -5.47 L-5.72 -6.56 L-5.24 -7.65 L-4.72 -8.75 L-4.19 -9.84 L-3.65 -10.92 L-3.13 -11.98 L-2.58 -13.04 L-1.97 -14.16 L-1.32 -15.30 L-0.68 -16.41 L-0.06 -17.46 L0.48 -18.40 L0.93 -19.21 L1.25 -19.83 Z" fill="#d0d0d0" stroke="#8e8e8e" stroke-width="0.91" stroke-linejoin="round"/><path transform="translate(332.9 555.7) rotate(60) scale(-0.93 0.93)" d="M0.75 -20.17 L0.29 -19.65 L-0.30 -18.95 L-1.00 -18.10 L-1.76 -17.15 L-2.56 -16.13 L-3.37 -15.08 L-4.15 -14.03 L-4.87 -13.02 L-5.55 -12.05 L-6.25 -11.05 L-6.95 -10.02 L-7.64 -8.97 L-8.31 -7.91 L-8.96 -6.82 L-9.56 -5.72 L-10.11 -4.63 L-10.61 -3.54 L-11.07 -2.43 L-11.51 -1.32 L-11.90 -0.19 L-12.25 0.96 L-12.54 2.11 L-12.78 3.26 L-12.94 4.41 L-13.04 5.55 L-13.08 6.69 L-13.06 7.85 L-12.97 9.01 L-12.81 10.17 L-12.55 11.33 L-12.14 12.44 L-11.59 13.51 L-10.94 14.51 L-10.20 15.43 L-9.38 16.29 L-8.49 17.07 L-7.55 17.78 L-6.56 18.41 L-5.51 18.94 L-4.40 19.36 L-3.24 19.65 L-2.06 19.81 L-0.88 19.85 L0.28 19.80 L1.43 19.66 L2.54 19.44 L3.62 19.15 L4.66 18.77 L5.67 18.29 L6.63 17.71 L7.54 17.06 L8.39 16.35 L9.18 15.58 L9.91 14.75 L10.56 13.87 L11.14 12.93 L11.62 11.91 L11.99 10.86 L12.27 9.79 L12.47 8.71 L12.59 7.63 L12.62 6.57 L12.58 5.52 L12.45 4.47 L12.21 3.44 L11.86 2.44 L11.43 1.49 L10.93 0.59 L10.37 -0.25 L9.75 -1.03 L9.06 -1.75 L8.28 -2.41 L7.40 -2.98 L6.47 -3.41 L5.52 -3.73 L4.58 -3.95 L3.63 -4.08 L2.69 -4.12 L1.75 -4.08 L0.80 -3.92 L-0.15 -3.61 L-1.02 -3.20 L-1.80 -2.69 L-2.51 -2.13 L-3.16 -1.51 L-3.73 -0.83 L-4.19 -0.08 L-4.56 0.81 L-4.82 1.82 L-4.92 2.82 L-4.92 3.74 L-4.85 4.60 L-4.76 5.38 L-4.65 6.05 L-4.54 6.56 L-4.45 6.91 L-0.55 7.09 L-0.42 6.64 L-0.31 6.06 L-0.20 5.42 L-0.08 4.77 L0.06 4.15 L0.23 3.63 L0.40 3.30 L0.56 3.19 L0.76 3.08 L0.99 2.87 L1.21 2.61 L1.45 2.38 L1.69 2.18 L1.92 2.04 L2.09 1.95 L2.20 1.92 L2.38 1.89 L2.69 1.88 L3.07 1.89 L3.49 1.95 L3.89 2.04 L4.25 2.16 L4.52 2.29 L4.72 2.41 L4.93 2.60 L5.22 2.90 L5.52 3.28 L5.82 3.72 L6.08 4.19 L6.29 4.66 L6.45 5.11 L6.55 5.53 L6.60 5.99 L6.62 6.57 L6.60 7.20 L6.53 7.85 L6.41 8.50 L6.26 9.10 L6.07 9.63 L5.86 10.07 L5.60 10.50 L5.25 10.97 L4.83 11.44 L4.36 11.90 L3.86 12.32 L3.34 12.69 L2.83 13.00 L2.34 13.23 L1.80 13.43 L1.17 13.60 L0.49 13.74 L-0.22 13.82 L-0.91 13.85 L-1.56 13.83 L-2.12 13.76 L-2.60 13.64 L-3.06 13.46 L-3.59 13.19 L-4.15 12.84 L-4.70 12.43 L-5.22 11.97 L-5.69 11.47 L-6.09 10.97 L-6.41 10.49 L-6.67 9.98 L-6.92 9.39 L-7.21 8.73 L-7.47 7.99 L-7.68 7.18 L-7.85 6.34 L-7.98 5.46 L-8.06 4.59 L-8.09 3.71 L-8.07 2.78 L-7.98 1.82 L-7.85 0.81 L-7.67 -0.22 L-7.44 -1.27 L-7.18 -2.33 L-6.89 -3.37 L-6.56 -4.41 L-6.17 -5.47 L-5.72 -6.56 L-5.24 -7.65 L-4.72 -8.75 L-4.19 -9.84 L-3.65 -10.92 L-3.13 -11.98 L-2.58 -13.04 L-1.97 -14.16 L-1.32 -15.30 L-0.68 -16.41 L-0.06 -17.46 L0.48 -18.40 L0.93 -19.21 L1.25 -19.83 Z" fill="#d0d0d0" stroke="#8e8e8e" stroke-width="0.91" stroke-linejoin="round"/><path transform="translate(344.3 587.0) rotate(0) scale(0.93 0.93)" d="M0.75 -20.17 L0.29 -19.65 L-0.30 -18.95 L-1.00 -18.10 L-1.76 -17.15 L-2.56 -16.13 L-3.37 -15.08 L-4.15 -14.03 L-4.87 -13.02 L-5.55 -12.05 L-6.25 -11.05 L-6.95 -10.02 L-7.64 -8.97 L-8.31 -7.91 L-8.96 -6.82 L-9.56 -5.72 L-10.11 -4.63 L-10.61 -3.54 L-11.07 -2.43 L-11.51 -1.32 L-11.90 -0.19 L-12.25 0.96 L-12.54 2.11 L-12.78 3.26 L-12.94 4.41 L-13.04 5.55 L-13.08 6.69 L-13.06 7.85 L-12.97 9.01 L-12.81 10.17 L-12.55 11.33 L-12.14 12.44 L-11.59 13.51 L-10.94 14.51 L-10.20 15.43 L-9.38 16.29 L-8.49 17.07 L-7.55 17.78 L-6.56 18.41 L-5.51 18.94 L-4.40 19.36 L-3.24 19.65 L-2.06 19.81 L-0.88 19.85 L0.28 19.80 L1.43 19.66 L2.54 19.44 L3.62 19.15 L4.66 18.77 L5.67 18.29 L6.63 17.71 L7.54 17.06 L8.39 16.35 L9.18 15.58 L9.91 14.75 L10.56 13.87 L11.14 12.93 L11.62 11.91 L11.99 10.86 L12.27 9.79 L12.47 8.71 L12.59 7.63 L12.62 6.57 L12.58 5.52 L12.45 4.47 L12.21 3.44 L11.86 2.44 L11.43 1.49 L10.93 0.59 L10.37 -0.25 L9.75 -1.03 L9.06 -1.75 L8.28 -2.41 L7.40 -2.98 L6.47 -3.41 L5.52 -3.73 L4.58 -3.95 L3.63 -4.08 L2.69 -4.12 L1.75 -4.08 L0.80 -3.92 L-0.15 -3.61 L-1.02 -3.20 L-1.80 -2.69 L-2.51 -2.13 L-3.16 -1.51 L-3.73 -0.83 L-4.19 -0.08 L-4.56 0.81 L-4.82 1.82 L-4.92 2.82 L-4.92 3.74 L-4.85 4.60 L-4.76 5.38 L-4.65 6.05 L-4.54 6.56 L-4.45 6.91 L-0.55 7.09 L-0.42 6.64 L-0.31 6.06 L-0.20 5.42 L-0.08 4.77 L0.06 4.15 L0.23 3.63 L0.40 3.30 L0.56 3.19 L0.76 3.08 L0.99 2.87 L1.21 2.61 L1.45 2.38 L1.69 2.18 L1.92 2.04 L2.09 1.95 L2.20 1.92 L2.38 1.89 L2.69 1.88 L3.07 1.89 L3.49 1.95 L3.89 2.04 L4.25 2.16 L4.52 2.29 L4.72 2.41 L4.93 2.60 L5.22 2.90 L5.52 3.28 L5.82 3.72 L6.08 4.19 L6.29 4.66 L6.45 5.11 L6.55 5.53 L6.60 5.99 L6.62 6.57 L6.60 7.20 L6.53 7.85 L6.41 8.50 L6.26 9.10 L6.07 9.63 L5.86 10.07 L5.60 10.50 L5.25 10.97 L4.83 11.44 L4.36 11.90 L3.86 12.32 L3.34 12.69 L2.83 13.00 L2.34 13.23 L1.80 13.43 L1.17 13.60 L0.49 13.74 L-0.22 13.82 L-0.91 13.85 L-1.56 13.83 L-2.12 13.76 L-2.60 13.64 L-3.06 13.46 L-3.59 13.19 L-4.15 12.84 L-4.70 12.43 L-5.22 11.97 L-5.69 11.47 L-6.09 10.97 L-6.41 10.49 L-6.67 9.98 L-6.92 9.39 L-7.21 8.73 L-7.47 7.99 L-7.68 7.18 L-7.85 6.34 L-7.98 5.46 L-8.06 4.59 L-8.09 3.71 L-8.07 2.78 L-7.98 1.82 L-7.85 0.81 L-7.67 -0.22 L-7.44 -1.27 L-7.18 -2.33 L-6.89 -3.37 L-6.56 -4.41 L-6.17 -5.47 L-5.72 -6.56 L-5.24 -7.65 L-4.72 -8.75 L-4.19 -9.84 L-3.65 -10.92 L-3.13 -11.98 L-2.58 -13.04 L-1.97 -14.16 L-1.32 -15.30 L-0.68 -16.41 L-0.06 -17.46 L0.48 -18.40 L0.93 -19.21 L1.25 -19.83 Z" fill="#d0d0d0" stroke="#8e8e8e" stroke-width="0.91" stroke-linejoin="round"/><path transform="translate(536.5 412.0) rotate(180) scale(-0.93 0.93)" d="M0.75 -20.17 L0.29 -19.65 L-0.30 -18.95 L-1.00 -18.10 L-1.76 -17.15 L-2.56 -16.13 L-3.37 -15.08 L-4.15 -14.03 L-4.87 -13.02 L-5.55 -12.05 L-6.25 -11.05 L-6.95 -10.02 L-7.64 -8.97 L-8.31 -7.91 L-8.96 -6.82 L-9.56 -5.72 L-10.11 -4.63 L-10.61 -3.54 L-11.07 -2.43 L-11.51 -1.32 L-11.90 -0.19 L-12.25 0.96 L-12.54 2.11 L-12.78 3.26 L-12.94 4.41 L-13.04 5.55 L-13.08 6.69 L-13.06 7.85 L-12.97 9.01 L-12.81 10.17 L-12.55 11.33 L-12.14 12.44 L-11.59 13.51 L-10.94 14.51 L-10.20 15.43 L-9.38 16.29 L-8.49 17.07 L-7.55 17.78 L-6.56 18.41 L-5.51 18.94 L-4.40 19.36 L-3.24 19.65 L-2.06 19.81 L-0.88 19.85 L0.28 19.80 L1.43 19.66 L2.54 19.44 L3.62 19.15 L4.66 18.77 L5.67 18.29 L6.63 17.71 L7.54 17.06 L8.39 16.35 L9.18 15.58 L9.91 14.75 L10.56 13.87 L11.14 12.93 L11.62 11.91 L11.99 10.86 L12.27 9.79 L12.47 8.71 L12.59 7.63 L12.62 6.57 L12.58 5.52 L12.45 4.47 L12.21 3.44 L11.86 2.44 L11.43 1.49 L10.93 0.59 L10.37 -0.25 L9.75 -1.03 L9.06 -1.75 L8.28 -2.41 L7.40 -2.98 L6.47 -3.41 L5.52 -3.73 L4.58 -3.95 L3.63 -4.08 L2.69 -4.12 L1.75 -4.08 L0.80 -3.92 L-0.15 -3.61 L-1.02 -3.20 L-1.80 -2.69 L-2.51 -2.13 L-3.16 -1.51 L-3.73 -0.83 L-4.19 -0.08 L-4.56 0.81 L-4.82 1.82 L-4.92 2.82 L-4.92 3.74 L-4.85 4.60 L-4.76 5.38 L-4.65 6.05 L-4.54 6.56 L-4.45 6.91 L-0.55 7.09 L-0.42 6.64 L-0.31 6.06 L-0.20 5.42 L-0.08 4.77 L0.06 4.15 L0.23 3.63 L0.40 3.30 L0.56 3.19 L0.76 3.08 L0.99 2.87 L1.21 2.61 L1.45 2.38 L1.69 2.18 L1.92 2.04 L2.09 1.95 L2.20 1.92 L2.38 1.89 L2.69 1.88 L3.07 1.89 L3.49 1.95 L3.89 2.04 L4.25 2.16 L4.52 2.29 L4.72 2.41 L4.93 2.60 L5.22 2.90 L5.52 3.28 L5.82 3.72 L6.08 4.19 L6.29 4.66 L6.45 5.11 L6.55 5.53 L6.60 5.99 L6.62 6.57 L6.60 7.20 L6.53 7.85 L6.41 8.50 L6.26 9.10 L6.07 9.63 L5.86 10.07 L5.60 10.50 L5.25 10.97 L4.83 11.44 L4.36 11.90 L3.86 12.32 L3.34 12.69 L2.83 13.00 L2.34 13.23 L1.80 13.43 L1.17 13.60 L0.49 13.74 L-0.22 13.82 L-0.91 13.85 L-1.56 13.83 L-2.12 13.76 L-2.60 13.64 L-3.06 13.46 L-3.59 13.19 L-4.15 12.84 L-4.70 12.43 L-5.22 11.97 L-5.69 11.47 L-6.09 10.97 L-6.41 10.49 L-6.67 9.98 L-6.92 9.39 L-7.21 8.73 L-7.47 7.99 L-7.68 7.18 L-7.85 6.34 L-7.98 5.46 L-8.06 4.59 L-8.09 3.71 L-8.07 2.78 L-7.98 1.82 L-7.85 0.81 L-7.67 -0.22 L-7.44 -1.27 L-7.18 -2.33 L-6.89 -3.37 L-6.56 -4.41 L-6.17 -5.47 L-5.72 -6.56 L-5.24 -7.65 L-4.72 -8.75 L-4.19 -9.84 L-3.65 -10.92 L-3.13 -11.98 L-2.58 -13.04 L-1.97 -14.16 L-1.32 -15.30 L-0.68 -16.41 L-0.06 -17.46 L0.48 -18.40 L0.93 -19.21 L1.25 -19.83 Z" fill="#d0d0d0" stroke="#8e8e8e" stroke-width="0.91" stroke-linejoin="round"/><path transform="translate(585.7 419.4) rotate(-60) scale(0.93 0.93)" d="M0.75 -20.17 L0.29 -19.65 L-0.30 -18.95 L-1.00 -18.10 L-1.76 -17.15 L-2.56 -16.13 L-3.37 -15.08 L-4.15 -14.03 L-4.87 -13.02 L-5.55 -12.05 L-6.25 -11.05 L-6.95 -10.02 L-7.64 -8.97 L-8.31 -7.91 L-8.96 -6.82 L-9.56 -5.72 L-10.11 -4.63 L-10.61 -3.54 L-11.07 -2.43 L-11.51 -1.32 L-11.90 -0.19 L-12.25 0.96 L-12.54 2.11 L-12.78 3.26 L-12.94 4.41 L-13.04 5.55 L-13.08 6.69 L-13.06 7.85 L-12.97 9.01 L-12.81 10.17 L-12.55 11.33 L-12.14 12.44 L-11.59 13.51 L-10.94 14.51 L-10.20 15.43 L-9.38 16.29 L-8.49 17.07 L-7.55 17.78 L-6.56 18.41 L-5.51 18.94 L-4.40 19.36 L-3.24 19.65 L-2.06 19.81 L-0.88 19.85 L0.28 19.80 L1.43 19.66 L2.54 19.44 L3.62 19.15 L4.66 18.77 L5.67 18.29 L6.63 17.71 L7.54 17.06 L8.39 16.35 L9.18 15.58 L9.91 14.75 L10.56 13.87 L11.14 12.93 L11.62 11.91 L11.99 10.86 L12.27 9.79 L12.47 8.71 L12.59 7.63 L12.62 6.57 L12.58 5.52 L12.45 4.47 L12.21 3.44 L11.86 2.44 L11.43 1.49 L10.93 0.59 L10.37 -0.25 L9.75 -1.03 L9.06 -1.75 L8.28 -2.41 L7.40 -2.98 L6.47 -3.41 L5.52 -3.73 L4.58 -3.95 L3.63 -4.08 L2.69 -4.12 L1.75 -4.08 L0.80 -3.92 L-0.15 -3.61 L-1.02 -3.20 L-1.80 -2.69 L-2.51 -2.13 L-3.16 -1.51 L-3.73 -0.83 L-4.19 -0.08 L-4.56 0.81 L-4.82 1.82 L-4.92 2.82 L-4.92 3.74 L-4.85 4.60 L-4.76 5.38 L-4.65 6.05 L-4.54 6.56 L-4.45 6.91 L-0.55 7.09 L-0.42 6.64 L-0.31 6.06 L-0.20 5.42 L-0.08 4.77 L0.06 4.15 L0.23 3.63 L0.40 3.30 L0.56 3.19 L0.76 3.08 L0.99 2.87 L1.21 2.61 L1.45 2.38 L1.69 2.18 L1.92 2.04 L2.09 1.95 L2.20 1.92 L2.38 1.89 L2.69 1.88 L3.07 1.89 L3.49 1.95 L3.89 2.04 L4.25 2.16 L4.52 2.29 L4.72 2.41 L4.93 2.60 L5.22 2.90 L5.52 3.28 L5.82 3.72 L6.08 4.19 L6.29 4.66 L6.45 5.11 L6.55 5.53 L6.60 5.99 L6.62 6.57 L6.60 7.20 L6.53 7.85 L6.41 8.50 L6.26 9.10 L6.07 9.63 L5.86 10.07 L5.60 10.50 L5.25 10.97 L4.83 11.44 L4.36 11.90 L3.86 12.32 L3.34 12.69 L2.83 13.00 L2.34 13.23 L1.80 13.43 L1.17 13.60 L0.49 13.74 L-0.22 13.82 L-0.91 13.85 L-1.56 13.83 L-2.12 13.76 L-2.60 13.64 L-3.06 13.46 L-3.59 13.19 L-4.15 12.84 L-4.70 12.43 L-5.22 11.97 L-5.69 11.47 L-6.09 10.97 L-6.41 10.49 L-6.67 9.98 L-6.92 9.39 L-7.21 8.73 L-7.47 7.99 L-7.68 7.18 L-7.85 6.34 L-7.98 5.46 L-8.06 4.59 L-8.09 3.71 L-8.07 2.78 L-7.98 1.82 L-7.85 0.81 L-7.67 -0.22 L-7.44 -1.27 L-7.18 -2.33 L-6.89 -3.37 L-6.56 -4.41 L-6.17 -5.47 L-5.72 -6.56 L-5.24 -7.65 L-4.72 -8.75 L-4.19 -9.84 L-3.65 -10.92 L-3.13 -11.98 L-2.58 -13.04 L-1.97 -14.16 L-1.32 -15.30 L-0.68 -16.41 L-0.06 -17.46 L0.48 -18.40 L0.93 -19.21 L1.25 -19.83 Z" fill="#d0d0d0" stroke="#8e8e8e" stroke-width="0.91" stroke-linejoin="round"/><path transform="translate(624.8 417.0) rotate(180) scale(-0.93 0.93)" d="M0.75 -20.17 L0.29 -19.65 L-0.30 -18.95 L-1.00 -18.10 L-1.76 -17.15 L-2.56 -16.13 L-3.37 -15.08 L-4.15 -14.03 L-4.87 -13.02 L-5.55 -12.05 L-6.25 -11.05 L-6.95 -10.02 L-7.64 -8.97 L-8.31 -7.91 L-8.96 -6.82 L-9.56 -5.72 L-10.11 -4.63 L-10.61 -3.54 L-11.07 -2.43 L-11.51 -1.32 L-11.90 -0.19 L-12.25 0.96 L-12.54 2.11 L-12.78 3.26 L-12.94 4.41 L-13.04 5.55 L-13.08 6.69 L-13.06 7.85 L-12.97 9.01 L-12.81 10.17 L-12.55 11.33 L-12.14 12.44 L-11.59 13.51 L-10.94 14.51 L-10.20 15.43 L-9.38 16.29 L-8.49 17.07 L-7.55 17.78 L-6.56 18.41 L-5.51 18.94 L-4.40 19.36 L-3.24 19.65 L-2.06 19.81 L-0.88 19.85 L0.28 19.80 L1.43 19.66 L2.54 19.44 L3.62 19.15 L4.66 18.77 L5.67 18.29 L6.63 17.71 L7.54 17.06 L8.39 16.35 L9.18 15.58 L9.91 14.75 L10.56 13.87 L11.14 12.93 L11.62 11.91 L11.99 10.86 L12.27 9.79 L12.47 8.71 L12.59 7.63 L12.62 6.57 L12.58 5.52 L12.45 4.47 L12.21 3.44 L11.86 2.44 L11.43 1.49 L10.93 0.59 L10.37 -0.25 L9.75 -1.03 L9.06 -1.75 L8.28 -2.41 L7.40 -2.98 L6.47 -3.41 L5.52 -3.73 L4.58 -3.95 L3.63 -4.08 L2.69 -4.12 L1.75 -4.08 L0.80 -3.92 L-0.15 -3.61 L-1.02 -3.20 L-1.80 -2.69 L-2.51 -2.13 L-3.16 -1.51 L-3.73 -0.83 L-4.19 -0.08 L-4.56 0.81 L-4.82 1.82 L-4.92 2.82 L-4.92 3.74 L-4.85 4.60 L-4.76 5.38 L-4.65 6.05 L-4.54 6.56 L-4.45 6.91 L-0.55 7.09 L-0.42 6.64 L-0.31 6.06 L-0.20 5.42 L-0.08 4.77 L0.06 4.15 L0.23 3.63 L0.40 3.30 L0.56 3.19 L0.76 3.08 L0.99 2.87 L1.21 2.61 L1.45 2.38 L1.69 2.18 L1.92 2.04 L2.09 1.95 L2.20 1.92 L2.38 1.89 L2.69 1.88 L3.07 1.89 L3.49 1.95 L3.89 2.04 L4.25 2.16 L4.52 2.29 L4.72 2.41 L4.93 2.60 L5.22 2.90 L5.52 3.28 L5.82 3.72 L6.08 4.19 L6.29 4.66 L6.45 5.11 L6.55 5.53 L6.60 5.99 L6.62 6.57 L6.60 7.20 L6.53 7.85 L6.41 8.50 L6.26 9.10 L6.07 9.63 L5.86 10.07 L5.60 10.50 L5.25 10.97 L4.83 11.44 L4.36 11.90 L3.86 12.32 L3.34 12.69 L2.83 13.00 L2.34 13.23 L1.80 13.43 L1.17 13.60 L0.49 13.74 L-0.22 13.82 L-0.91 13.85 L-1.56 13.83 L-2.12 13.76 L-2.60 13.64 L-3.06 13.46 L-3.59 13.19 L-4.15 12.84 L-4.70 12.43 L-5.22 11.97 L-5.69 11.47 L-6.09 10.97 L-6.41 10.49 L-6.67 9.98 L-6.92 9.39 L-7.21 8.73 L-7.47 7.99 L-7.68 7.18 L-7.85 6.34 L-7.98 5.46 L-8.06 4.59 L-8.09 3.71 L-8.07 2.78 L-7.98 1.82 L-7.85 0.81 L-7.67 -0.22 L-7.44 -1.27 L-7.18 -2.33 L-6.89 -3.37 L-6.56 -4.41 L-6.17 -5.47 L-5.72 -6.56 L-5.24 -7.65 L-4.72 -8.75 L-4.19 -9.84 L-3.65 -10.92 L-3.13 -11.98 L-2.58 -13.04 L-1.97 -14.16 L-1.32 -15.30 L-0.68 -16.41 L-0.06 -17.46 L0.48 -18.40 L0.93 -19.21 L1.25 -19.83 Z" fill="#d0d0d0" stroke="#8e8e8e" stroke-width="0.91" stroke-linejoin="round"/><path transform="translate(671.0 432.8) rotate(0) scale(0.93 0.93)" d="M0.75 -20.17 L0.29 -19.65 L-0.30 -18.95 L-1.00 -18.10 L-1.76 -17.15 L-2.56 -16.13 L-3.37 -15.08 L-4.15 -14.03 L-4.87 -13.02 L-5.55 -12.05 L-6.25 -11.05 L-6.95 -10.02 L-7.64 -8.97 L-8.31 -7.91 L-8.96 -6.82 L-9.56 -5.72 L-10.11 -4.63 L-10.61 -3.54 L-11.07 -2.43 L-11.51 -1.32 L-11.90 -0.19 L-12.25 0.96 L-12.54 2.11 L-12.78 3.26 L-12.94 4.41 L-13.04 5.55 L-13.08 6.69 L-13.06 7.85 L-12.97 9.01 L-12.81 10.17 L-12.55 11.33 L-12.14 12.44 L-11.59 13.51 L-10.94 14.51 L-10.20 15.43 L-9.38 16.29 L-8.49 17.07 L-7.55 17.78 L-6.56 18.41 L-5.51 18.94 L-4.40 19.36 L-3.24 19.65 L-2.06 19.81 L-0.88 19.85 L0.28 19.80 L1.43 19.66 L2.54 19.44 L3.62 19.15 L4.66 18.77 L5.67 18.29 L6.63 17.71 L7.54 17.06 L8.39 16.35 L9.18 15.58 L9.91 14.75 L10.56 13.87 L11.14 12.93 L11.62 11.91 L11.99 10.86 L12.27 9.79 L12.47 8.71 L12.59 7.63 L12.62 6.57 L12.58 5.52 L12.45 4.47 L12.21 3.44 L11.86 2.44 L11.43 1.49 L10.93 0.59 L10.37 -0.25 L9.75 -1.03 L9.06 -1.75 L8.28 -2.41 L7.40 -2.98 L6.47 -3.41 L5.52 -3.73 L4.58 -3.95 L3.63 -4.08 L2.69 -4.12 L1.75 -4.08 L0.80 -3.92 L-0.15 -3.61 L-1.02 -3.20 L-1.80 -2.69 L-2.51 -2.13 L-3.16 -1.51 L-3.73 -0.83 L-4.19 -0.08 L-4.56 0.81 L-4.82 1.82 L-4.92 2.82 L-4.92 3.74 L-4.85 4.60 L-4.76 5.38 L-4.65 6.05 L-4.54 6.56 L-4.45 6.91 L-0.55 7.09 L-0.42 6.64 L-0.31 6.06 L-0.20 5.42 L-0.08 4.77 L0.06 4.15 L0.23 3.63 L0.40 3.30 L0.56 3.19 L0.76 3.08 L0.99 2.87 L1.21 2.61 L1.45 2.38 L1.69 2.18 L1.92 2.04 L2.09 1.95 L2.20 1.92 L2.38 1.89 L2.69 1.88 L3.07 1.89 L3.49 1.95 L3.89 2.04 L4.25 2.16 L4.52 2.29 L4.72 2.41 L4.93 2.60 L5.22 2.90 L5.52 3.28 L5.82 3.72 L6.08 4.19 L6.29 4.66 L6.45 5.11 L6.55 5.53 L6.60 5.99 L6.62 6.57 L6.60 7.20 L6.53 7.85 L6.41 8.50 L6.26 9.10 L6.07 9.63 L5.86 10.07 L5.60 10.50 L5.25 10.97 L4.83 11.44 L4.36 11.90 L3.86 12.32 L3.34 12.69 L2.83 13.00 L2.34 13.23 L1.80 13.43 L1.17 13.60 L0.49 13.74 L-0.22 13.82 L-0.91 13.85 L-1.56 13.83 L-2.12 13.76 L-2.60 13.64 L-3.06 13.46 L-3.59 13.19 L-4.15 12.84 L-4.70 12.43 L-5.22 11.97 L-5.69 11.47 L-6.09 10.97 L-6.41 10.49 L-6.67 9.98 L-6.92 9.39 L-7.21 8.73 L-7.47 7.99 L-7.68 7.18 L-7.85 6.34 L-7.98 5.46 L-8.06 4.59 L-8.09 3.71 L-8.07 2.78 L-7.98 1.82 L-7.85 0.81 L-7.67 -0.22 L-7.44 -1.27 L-7.18 -2.33 L-6.89 -3.37 L-6.56 -4.41 L-6.17 -5.47 L-5.72 -6.56 L-5.24 -7.65 L-4.72 -8.75 L-4.19 -9.84 L-3.65 -10.92 L-3.13 -11.98 L-2.58 -13.04 L-1.97 -14.16 L-1.32 -15.30 L-0.68 -16.41 L-0.06 -17.46 L0.48 -18.40 L0.93 -19.21 L1.25 -19.83 Z" fill="#d0d0d0" stroke="#8e8e8e" stroke-width="0.91" stroke-linejoin="round"/><path transform="translate(535.7 445.0) rotate(-100) scale(-0.93 0.93)" d="M0.75 -20.17 L0.29 -19.65 L-0.30 -18.95 L-1.00 -18.10 L-1.76 -17.15 L-2.56 -16.13 L-3.37 -15.08 L-4.15 -14.03 L-4.87 -13.02 L-5.55 -12.05 L-6.25 -11.05 L-6.95 -10.02 L-7.64 -8.97 L-8.31 -7.91 L-8.96 -6.82 L-9.56 -5.72 L-10.11 -4.63 L-10.61 -3.54 L-11.07 -2.43 L-11.51 -1.32 L-11.90 -0.19 L-12.25 0.96 L-12.54 2.11 L-12.78 3.26 L-12.94 4.41 L-13.04 5.55 L-13.08 6.69 L-13.06 7.85 L-12.97 9.01 L-12.81 10.17 L-12.55 11.33 L-12.14 12.44 L-11.59 13.51 L-10.94 14.51 L-10.20 15.43 L-9.38 16.29 L-8.49 17.07 L-7.55 17.78 L-6.56 18.41 L-5.51 18.94 L-4.40 19.36 L-3.24 19.65 L-2.06 19.81 L-0.88 19.85 L0.28 19.80 L1.43 19.66 L2.54 19.44 L3.62 19.15 L4.66 18.77 L5.67 18.29 L6.63 17.71 L7.54 17.06 L8.39 16.35 L9.18 15.58 L9.91 14.75 L10.56 13.87 L11.14 12.93 L11.62 11.91 L11.99 10.86 L12.27 9.79 L12.47 8.71 L12.59 7.63 L12.62 6.57 L12.58 5.52 L12.45 4.47 L12.21 3.44 L11.86 2.44 L11.43 1.49 L10.93 0.59 L10.37 -0.25 L9.75 -1.03 L9.06 -1.75 L8.28 -2.41 L7.40 -2.98 L6.47 -3.41 L5.52 -3.73 L4.58 -3.95 L3.63 -4.08 L2.69 -4.12 L1.75 -4.08 L0.80 -3.92 L-0.15 -3.61 L-1.02 -3.20 L-1.80 -2.69 L-2.51 -2.13 L-3.16 -1.51 L-3.73 -0.83 L-4.19 -0.08 L-4.56 0.81 L-4.82 1.82 L-4.92 2.82 L-4.92 3.74 L-4.85 4.60 L-4.76 5.38 L-4.65 6.05 L-4.54 6.56 L-4.45 6.91 L-0.55 7.09 L-0.42 6.64 L-0.31 6.06 L-0.20 5.42 L-0.08 4.77 L0.06 4.15 L0.23 3.63 L0.40 3.30 L0.56 3.19 L0.76 3.08 L0.99 2.87 L1.21 2.61 L1.45 2.38 L1.69 2.18 L1.92 2.04 L2.09 1.95 L2.20 1.92 L2.38 1.89 L2.69 1.88 L3.07 1.89 L3.49 1.95 L3.89 2.04 L4.25 2.16 L4.52 2.29 L4.72 2.41 L4.93 2.60 L5.22 2.90 L5.52 3.28 L5.82 3.72 L6.08 4.19 L6.29 4.66 L6.45 5.11 L6.55 5.53 L6.60 5.99 L6.62 6.57 L6.60 7.20 L6.53 7.85 L6.41 8.50 L6.26 9.10 L6.07 9.63 L5.86 10.07 L5.60 10.50 L5.25 10.97 L4.83 11.44 L4.36 11.90 L3.86 12.32 L3.34 12.69 L2.83 13.00 L2.34 13.23 L1.80 13.43 L1.17 13.60 L0.49 13.74 L-0.22 13.82 L-0.91 13.85 L-1.56 13.83 L-2.12 13.76 L-2.60 13.64 L-3.06 13.46 L-3.59 13.19 L-4.15 12.84 L-4.70 12.43 L-5.22 11.97 L-5.69 11.47 L-6.09 10.97 L-6.41 10.49 L-6.67 9.98 L-6.92 9.39 L-7.21 8.73 L-7.47 7.99 L-7.68 7.18 L-7.85 6.34 L-7.98 5.46 L-8.06 4.59 L-8.09 3.71 L-8.07 2.78 L-7.98 1.82 L-7.85 0.81 L-7.67 -0.22 L-7.44 -1.27 L-7.18 -2.33 L-6.89 -3.37 L-6.56 -4.41 L-6.17 -5.47 L-5.72 -6.56 L-5.24 -7.65 L-4.72 -8.75 L-4.19 -9.84 L-3.65 -10.92 L-3.13 -11.98 L-2.58 -13.04 L-1.97 -14.16 L-1.32 -15.30 L-0.68 -16.41 L-0.06 -17.46 L0.48 -18.40 L0.93 -19.21 L1.25 -19.83 Z" fill="#d0d0d0" stroke="#8e8e8e" stroke-width="0.91" stroke-linejoin="round"/><path transform="translate(574.8 449.9) rotate(0) scale(-0.93 0.93)" d="M0.75 -20.17 L0.29 -19.65 L-0.30 -18.95 L-1.00 -18.10 L-1.76 -17.15 L-2.56 -16.13 L-3.37 -15.08 L-4.15 -14.03 L-4.87 -13.02 L-5.55 -12.05 L-6.25 -11.05 L-6.95 -10.02 L-7.64 -8.97 L-8.31 -7.91 L-8.96 -6.82 L-9.56 -5.72 L-10.11 -4.63 L-10.61 -3.54 L-11.07 -2.43 L-11.51 -1.32 L-11.90 -0.19 L-12.25 0.96 L-12.54 2.11 L-12.78 3.26 L-12.94 4.41 L-13.04 5.55 L-13.08 6.69 L-13.06 7.85 L-12.97 9.01 L-12.81 10.17 L-12.55 11.33 L-12.14 12.44 L-11.59 13.51 L-10.94 14.51 L-10.20 15.43 L-9.38 16.29 L-8.49 17.07 L-7.55 17.78 L-6.56 18.41 L-5.51 18.94 L-4.40 19.36 L-3.24 19.65 L-2.06 19.81 L-0.88 19.85 L0.28 19.80 L1.43 19.66 L2.54 19.44 L3.62 19.15 L4.66 18.77 L5.67 18.29 L6.63 17.71 L7.54 17.06 L8.39 16.35 L9.18 15.58 L9.91 14.75 L10.56 13.87 L11.14 12.93 L11.62 11.91 L11.99 10.86 L12.27 9.79 L12.47 8.71 L12.59 7.63 L12.62 6.57 L12.58 5.52 L12.45 4.47 L12.21 3.44 L11.86 2.44 L11.43 1.49 L10.93 0.59 L10.37 -0.25 L9.75 -1.03 L9.06 -1.75 L8.28 -2.41 L7.40 -2.98 L6.47 -3.41 L5.52 -3.73 L4.58 -3.95 L3.63 -4.08 L2.69 -4.12 L1.75 -4.08 L0.80 -3.92 L-0.15 -3.61 L-1.02 -3.20 L-1.80 -2.69 L-2.51 -2.13 L-3.16 -1.51 L-3.73 -0.83 L-4.19 -0.08 L-4.56 0.81 L-4.82 1.82 L-4.92 2.82 L-4.92 3.74 L-4.85 4.60 L-4.76 5.38 L-4.65 6.05 L-4.54 6.56 L-4.45 6.91 L-0.55 7.09 L-0.42 6.64 L-0.31 6.06 L-0.20 5.42 L-0.08 4.77 L0.06 4.15 L0.23 3.63 L0.40 3.30 L0.56 3.19 L0.76 3.08 L0.99 2.87 L1.21 2.61 L1.45 2.38 L1.69 2.18 L1.92 2.04 L2.09 1.95 L2.20 1.92 L2.38 1.89 L2.69 1.88 L3.07 1.89 L3.49 1.95 L3.89 2.04 L4.25 2.16 L4.52 2.29 L4.72 2.41 L4.93 2.60 L5.22 2.90 L5.52 3.28 L5.82 3.72 L6.08 4.19 L6.29 4.66 L6.45 5.11 L6.55 5.53 L6.60 5.99 L6.62 6.57 L6.60 7.20 L6.53 7.85 L6.41 8.50 L6.26 9.10 L6.07 9.63 L5.86 10.07 L5.60 10.50 L5.25 10.97 L4.83 11.44 L4.36 11.90 L3.86 12.32 L3.34 12.69 L2.83 13.00 L2.34 13.23 L1.80 13.43 L1.17 13.60 L0.49 13.74 L-0.22 13.82 L-0.91 13.85 L-1.56 13.83 L-2.12 13.76 L-2.60 13.64 L-3.06 13.46 L-3.59 13.19 L-4.15 12.84 L-4.70 12.43 L-5.22 11.97 L-5.69 11.47 L-6.09 10.97 L-6.41 10.49 L-6.67 9.98 L-6.92 9.39 L-7.21 8.73 L-7.47 7.99 L-7.68 7.18 L-7.85 6.34 L-7.98 5.46 L-8.06 4.59 L-8.09 3.71 L-8.07 2.78 L-7.98 1.82 L-7.85 0.81 L-7.67 -0.22 L-7.44 -1.27 L-7.18 -2.33 L-6.89 -3.37 L-6.56 -4.41 L-6.17 -5.47 L-5.72 -6.56 L-5.24 -7.65 L-4.72 -8.75 L-4.19 -9.84 L-3.65 -10.92 L-3.13 -11.98 L-2.58 -13.04 L-1.97 -14.16 L-1.32 -15.30 L-0.68 -16.41 L-0.06 -17.46 L0.48 -18.40 L0.93 -19.21 L1.25 -19.83 Z" fill="#d0d0d0" stroke="#8e8e8e" stroke-width="0.91" stroke-linejoin="round"/><path transform="translate(624.8 451.0) rotate(-100) scale(-0.93 0.93)" d="M0.75 -20.17 L0.29 -19.65 L-0.30 -18.95 L-1.00 -18.10 L-1.76 -17.15 L-2.56 -16.13 L-3.37 -15.08 L-4.15 -14.03 L-4.87 -13.02 L-5.55 -12.05 L-6.25 -11.05 L-6.95 -10.02 L-7.64 -8.97 L-8.31 -7.91 L-8.96 -6.82 L-9.56 -5.72 L-10.11 -4.63 L-10.61 -3.54 L-11.07 -2.43 L-11.51 -1.32 L-11.90 -0.19 L-12.25 0.96 L-12.54 2.11 L-12.78 3.26 L-12.94 4.41 L-13.04 5.55 L-13.08 6.69 L-13.06 7.85 L-12.97 9.01 L-12.81 10.17 L-12.55 11.33 L-12.14 12.44 L-11.59 13.51 L-10.94 14.51 L-10.20 15.43 L-9.38 16.29 L-8.49 17.07 L-7.55 17.78 L-6.56 18.41 L-5.51 18.94 L-4.40 19.36 L-3.24 19.65 L-2.06 19.81 L-0.88 19.85 L0.28 19.80 L1.43 19.66 L2.54 19.44 L3.62 19.15 L4.66 18.77 L5.67 18.29 L6.63 17.71 L7.54 17.06 L8.39 16.35 L9.18 15.58 L9.91 14.75 L10.56 13.87 L11.14 12.93 L11.62 11.91 L11.99 10.86 L12.27 9.79 L12.47 8.71 L12.59 7.63 L12.62 6.57 L12.58 5.52 L12.45 4.47 L12.21 3.44 L11.86 2.44 L11.43 1.49 L10.93 0.59 L10.37 -0.25 L9.75 -1.03 L9.06 -1.75 L8.28 -2.41 L7.40 -2.98 L6.47 -3.41 L5.52 -3.73 L4.58 -3.95 L3.63 -4.08 L2.69 -4.12 L1.75 -4.08 L0.80 -3.92 L-0.15 -3.61 L-1.02 -3.20 L-1.80 -2.69 L-2.51 -2.13 L-3.16 -1.51 L-3.73 -0.83 L-4.19 -0.08 L-4.56 0.81 L-4.82 1.82 L-4.92 2.82 L-4.92 3.74 L-4.85 4.60 L-4.76 5.38 L-4.65 6.05 L-4.54 6.56 L-4.45 6.91 L-0.55 7.09 L-0.42 6.64 L-0.31 6.06 L-0.20 5.42 L-0.08 4.77 L0.06 4.15 L0.23 3.63 L0.40 3.30 L0.56 3.19 L0.76 3.08 L0.99 2.87 L1.21 2.61 L1.45 2.38 L1.69 2.18 L1.92 2.04 L2.09 1.95 L2.20 1.92 L2.38 1.89 L2.69 1.88 L3.07 1.89 L3.49 1.95 L3.89 2.04 L4.25 2.16 L4.52 2.29 L4.72 2.41 L4.93 2.60 L5.22 2.90 L5.52 3.28 L5.82 3.72 L6.08 4.19 L6.29 4.66 L6.45 5.11 L6.55 5.53 L6.60 5.99 L6.62 6.57 L6.60 7.20 L6.53 7.85 L6.41 8.50 L6.26 9.10 L6.07 9.63 L5.86 10.07 L5.60 10.50 L5.25 10.97 L4.83 11.44 L4.36 11.90 L3.86 12.32 L3.34 12.69 L2.83 13.00 L2.34 13.23 L1.80 13.43 L1.17 13.60 L0.49 13.74 L-0.22 13.82 L-0.91 13.85 L-1.56 13.83 L-2.12 13.76 L-2.60 13.64 L-3.06 13.46 L-3.59 13.19 L-4.15 12.84 L-4.70 12.43 L-5.22 11.97 L-5.69 11.47 L-6.09 10.97 L-6.41 10.49 L-6.67 9.98 L-6.92 9.39 L-7.21 8.73 L-7.47 7.99 L-7.68 7.18 L-7.85 6.34 L-7.98 5.46 L-8.06 4.59 L-8.09 3.71 L-8.07 2.78 L-7.98 1.82 L-7.85 0.81 L-7.67 -0.22 L-7.44 -1.27 L-7.18 -2.33 L-6.89 -3.37 L-6.56 -4.41 L-6.17 -5.47 L-5.72 -6.56 L-5.24 -7.65 L-4.72 -8.75 L-4.19 -9.84 L-3.65 -10.92 L-3.13 -11.98 L-2.58 -13.04 L-1.97 -14.16 L-1.32 -15.30 L-0.68 -16.41 L-0.06 -17.46 L0.48 -18.40 L0.93 -19.21 L1.25 -19.83 Z" fill="#d0d0d0" stroke="#8e8e8e" stroke-width="0.91" stroke-linejoin="round"/><path transform="translate(533.3 480.4) rotate(180) scale(-0.93 0.93)" d="M0.75 -20.17 L0.29 -19.65 L-0.30 -18.95 L-1.00 -18.10 L-1.76 -17.15 L-2.56 -16.13 L-3.37 -15.08 L-4.15 -14.03 L-4.87 -13.02 L-5.55 -12.05 L-6.25 -11.05 L-6.95 -10.02 L-7.64 -8.97 L-8.31 -7.91 L-8.96 -6.82 L-9.56 -5.72 L-10.11 -4.63 L-10.61 -3.54 L-11.07 -2.43 L-11.51 -1.32 L-11.90 -0.19 L-12.25 0.96 L-12.54 2.11 L-12.78 3.26 L-12.94 4.41 L-13.04 5.55 L-13.08 6.69 L-13.06 7.85 L-12.97 9.01 L-12.81 10.17 L-12.55 11.33 L-12.14 12.44 L-11.59 13.51 L-10.94 14.51 L-10.20 15.43 L-9.38 16.29 L-8.49 17.07 L-7.55 17.78 L-6.56 18.41 L-5.51 18.94 L-4.40 19.36 L-3.24 19.65 L-2.06 19.81 L-0.88 19.85 L0.28 19.80 L1.43 19.66 L2.54 19.44 L3.62 19.15 L4.66 18.77 L5.67 18.29 L6.63 17.71 L7.54 17.06 L8.39 16.35 L9.18 15.58 L9.91 14.75 L10.56 13.87 L11.14 12.93 L11.62 11.91 L11.99 10.86 L12.27 9.79 L12.47 8.71 L12.59 7.63 L12.62 6.57 L12.58 5.52 L12.45 4.47 L12.21 3.44 L11.86 2.44 L11.43 1.49 L10.93 0.59 L10.37 -0.25 L9.75 -1.03 L9.06 -1.75 L8.28 -2.41 L7.40 -2.98 L6.47 -3.41 L5.52 -3.73 L4.58 -3.95 L3.63 -4.08 L2.69 -4.12 L1.75 -4.08 L0.80 -3.92 L-0.15 -3.61 L-1.02 -3.20 L-1.80 -2.69 L-2.51 -2.13 L-3.16 -1.51 L-3.73 -0.83 L-4.19 -0.08 L-4.56 0.81 L-4.82 1.82 L-4.92 2.82 L-4.92 3.74 L-4.85 4.60 L-4.76 5.38 L-4.65 6.05 L-4.54 6.56 L-4.45 6.91 L-0.55 7.09 L-0.42 6.64 L-0.31 6.06 L-0.20 5.42 L-0.08 4.77 L0.06 4.15 L0.23 3.63 L0.40 3.30 L0.56 3.19 L0.76 3.08 L0.99 2.87 L1.21 2.61 L1.45 2.38 L1.69 2.18 L1.92 2.04 L2.09 1.95 L2.20 1.92 L2.38 1.89 L2.69 1.88 L3.07 1.89 L3.49 1.95 L3.89 2.04 L4.25 2.16 L4.52 2.29 L4.72 2.41 L4.93 2.60 L5.22 2.90 L5.52 3.28 L5.82 3.72 L6.08 4.19 L6.29 4.66 L6.45 5.11 L6.55 5.53 L6.60 5.99 L6.62 6.57 L6.60 7.20 L6.53 7.85 L6.41 8.50 L6.26 9.10 L6.07 9.63 L5.86 10.07 L5.60 10.50 L5.25 10.97 L4.83 11.44 L4.36 11.90 L3.86 12.32 L3.34 12.69 L2.83 13.00 L2.34 13.23 L1.80 13.43 L1.17 13.60 L0.49 13.74 L-0.22 13.82 L-0.91 13.85 L-1.56 13.83 L-2.12 13.76 L-2.60 13.64 L-3.06 13.46 L-3.59 13.19 L-4.15 12.84 L-4.70 12.43 L-5.22 11.97 L-5.69 11.47 L-6.09 10.97 L-6.41 10.49 L-6.67 9.98 L-6.92 9.39 L-7.21 8.73 L-7.47 7.99 L-7.68 7.18 L-7.85 6.34 L-7.98 5.46 L-8.06 4.59 L-8.09 3.71 L-8.07 2.78 L-7.98 1.82 L-7.85 0.81 L-7.67 -0.22 L-7.44 -1.27 L-7.18 -2.33 L-6.89 -3.37 L-6.56 -4.41 L-6.17 -5.47 L-5.72 -6.56 L-5.24 -7.65 L-4.72 -8.75 L-4.19 -9.84 L-3.65 -10.92 L-3.13 -11.98 L-2.58 -13.04 L-1.97 -14.16 L-1.32 -15.30 L-0.68 -16.41 L-0.06 -17.46 L0.48 -18.40 L0.93 -19.21 L1.25 -19.83 Z" fill="#d0d0d0" stroke="#8e8e8e" stroke-width="0.91" stroke-linejoin="round"/><path transform="translate(583.3 491.3) rotate(-60) scale(0.93 0.93)" d="M0.75 -20.17 L0.29 -19.65 L-0.30 -18.95 L-1.00 -18.10 L-1.76 -17.15 L-2.56 -16.13 L-3.37 -15.08 L-4.15 -14.03 L-4.87 -13.02 L-5.55 -12.05 L-6.25 -11.05 L-6.95 -10.02 L-7.64 -8.97 L-8.31 -7.91 L-8.96 -6.82 L-9.56 -5.72 L-10.11 -4.63 L-10.61 -3.54 L-11.07 -2.43 L-11.51 -1.32 L-11.90 -0.19 L-12.25 0.96 L-12.54 2.11 L-12.78 3.26 L-12.94 4.41 L-13.04 5.55 L-13.08 6.69 L-13.06 7.85 L-12.97 9.01 L-12.81 10.17 L-12.55 11.33 L-12.14 12.44 L-11.59 13.51 L-10.94 14.51 L-10.20 15.43 L-9.38 16.29 L-8.49 17.07 L-7.55 17.78 L-6.56 18.41 L-5.51 18.94 L-4.40 19.36 L-3.24 19.65 L-2.06 19.81 L-0.88 19.85 L0.28 19.80 L1.43 19.66 L2.54 19.44 L3.62 19.15 L4.66 18.77 L5.67 18.29 L6.63 17.71 L7.54 17.06 L8.39 16.35 L9.18 15.58 L9.91 14.75 L10.56 13.87 L11.14 12.93 L11.62 11.91 L11.99 10.86 L12.27 9.79 L12.47 8.71 L12.59 7.63 L12.62 6.57 L12.58 5.52 L12.45 4.47 L12.21 3.44 L11.86 2.44 L11.43 1.49 L10.93 0.59 L10.37 -0.25 L9.75 -1.03 L9.06 -1.75 L8.28 -2.41 L7.40 -2.98 L6.47 -3.41 L5.52 -3.73 L4.58 -3.95 L3.63 -4.08 L2.69 -4.12 L1.75 -4.08 L0.80 -3.92 L-0.15 -3.61 L-1.02 -3.20 L-1.80 -2.69 L-2.51 -2.13 L-3.16 -1.51 L-3.73 -0.83 L-4.19 -0.08 L-4.56 0.81 L-4.82 1.82 L-4.92 2.82 L-4.92 3.74 L-4.85 4.60 L-4.76 5.38 L-4.65 6.05 L-4.54 6.56 L-4.45 6.91 L-0.55 7.09 L-0.42 6.64 L-0.31 6.06 L-0.20 5.42 L-0.08 4.77 L0.06 4.15 L0.23 3.63 L0.40 3.30 L0.56 3.19 L0.76 3.08 L0.99 2.87 L1.21 2.61 L1.45 2.38 L1.69 2.18 L1.92 2.04 L2.09 1.95 L2.20 1.92 L2.38 1.89 L2.69 1.88 L3.07 1.89 L3.49 1.95 L3.89 2.04 L4.25 2.16 L4.52 2.29 L4.72 2.41 L4.93 2.60 L5.22 2.90 L5.52 3.28 L5.82 3.72 L6.08 4.19 L6.29 4.66 L6.45 5.11 L6.55 5.53 L6.60 5.99 L6.62 6.57 L6.60 7.20 L6.53 7.85 L6.41 8.50 L6.26 9.10 L6.07 9.63 L5.86 10.07 L5.60 10.50 L5.25 10.97 L4.83 11.44 L4.36 11.90 L3.86 12.32 L3.34 12.69 L2.83 13.00 L2.34 13.23 L1.80 13.43 L1.17 13.60 L0.49 13.74 L-0.22 13.82 L-0.91 13.85 L-1.56 13.83 L-2.12 13.76 L-2.60 13.64 L-3.06 13.46 L-3.59 13.19 L-4.15 12.84 L-4.70 12.43 L-5.22 11.97 L-5.69 11.47 L-6.09 10.97 L-6.41 10.49 L-6.67 9.98 L-6.92 9.39 L-7.21 8.73 L-7.47 7.99 L-7.68 7.18 L-7.85 6.34 L-7.98 5.46 L-8.06 4.59 L-8.09 3.71 L-8.07 2.78 L-7.98 1.82 L-7.85 0.81 L-7.67 -0.22 L-7.44 -1.27 L-7.18 -2.33 L-6.89 -3.37 L-6.56 -4.41 L-6.17 -5.47 L-5.72 -6.56 L-5.24 -7.65 L-4.72 -8.75 L-4.19 -9.84 L-3.65 -10.92 L-3.13 -11.98 L-2.58 -13.04 L-1.97 -14.16 L-1.32 -15.30 L-0.68 -16.41 L-0.06 -17.46 L0.48 -18.40 L0.93 -19.21 L1.25 -19.83 Z" fill="#d0d0d0" stroke="#8e8e8e" stroke-width="0.91" stroke-linejoin="round"/><path transform="translate(635.7 492.6) rotate(-60) scale(0.93 0.93)" d="M0.75 -20.17 L0.29 -19.65 L-0.30 -18.95 L-1.00 -18.10 L-1.76 -17.15 L-2.56 -16.13 L-3.37 -15.08 L-4.15 -14.03 L-4.87 -13.02 L-5.55 -12.05 L-6.25 -11.05 L-6.95 -10.02 L-7.64 -8.97 L-8.31 -7.91 L-8.96 -6.82 L-9.56 -5.72 L-10.11 -4.63 L-10.61 -3.54 L-11.07 -2.43 L-11.51 -1.32 L-11.90 -0.19 L-12.25 0.96 L-12.54 2.11 L-12.78 3.26 L-12.94 4.41 L-13.04 5.55 L-13.08 6.69 L-13.06 7.85 L-12.97 9.01 L-12.81 10.17 L-12.55 11.33 L-12.14 12.44 L-11.59 13.51 L-10.94 14.51 L-10.20 15.43 L-9.38 16.29 L-8.49 17.07 L-7.55 17.78 L-6.56 18.41 L-5.51 18.94 L-4.40 19.36 L-3.24 19.65 L-2.06 19.81 L-0.88 19.85 L0.28 19.80 L1.43 19.66 L2.54 19.44 L3.62 19.15 L4.66 18.77 L5.67 18.29 L6.63 17.71 L7.54 17.06 L8.39 16.35 L9.18 15.58 L9.91 14.75 L10.56 13.87 L11.14 12.93 L11.62 11.91 L11.99 10.86 L12.27 9.79 L12.47 8.71 L12.59 7.63 L12.62 6.57 L12.58 5.52 L12.45 4.47 L12.21 3.44 L11.86 2.44 L11.43 1.49 L10.93 0.59 L10.37 -0.25 L9.75 -1.03 L9.06 -1.75 L8.28 -2.41 L7.40 -2.98 L6.47 -3.41 L5.52 -3.73 L4.58 -3.95 L3.63 -4.08 L2.69 -4.12 L1.75 -4.08 L0.80 -3.92 L-0.15 -3.61 L-1.02 -3.20 L-1.80 -2.69 L-2.51 -2.13 L-3.16 -1.51 L-3.73 -0.83 L-4.19 -0.08 L-4.56 0.81 L-4.82 1.82 L-4.92 2.82 L-4.92 3.74 L-4.85 4.60 L-4.76 5.38 L-4.65 6.05 L-4.54 6.56 L-4.45 6.91 L-0.55 7.09 L-0.42 6.64 L-0.31 6.06 L-0.20 5.42 L-0.08 4.77 L0.06 4.15 L0.23 3.63 L0.40 3.30 L0.56 3.19 L0.76 3.08 L0.99 2.87 L1.21 2.61 L1.45 2.38 L1.69 2.18 L1.92 2.04 L2.09 1.95 L2.20 1.92 L2.38 1.89 L2.69 1.88 L3.07 1.89 L3.49 1.95 L3.89 2.04 L4.25 2.16 L4.52 2.29 L4.72 2.41 L4.93 2.60 L5.22 2.90 L5.52 3.28 L5.82 3.72 L6.08 4.19 L6.29 4.66 L6.45 5.11 L6.55 5.53 L6.60 5.99 L6.62 6.57 L6.60 7.20 L6.53 7.85 L6.41 8.50 L6.26 9.10 L6.07 9.63 L5.86 10.07 L5.60 10.50 L5.25 10.97 L4.83 11.44 L4.36 11.90 L3.86 12.32 L3.34 12.69 L2.83 13.00 L2.34 13.23 L1.80 13.43 L1.17 13.60 L0.49 13.74 L-0.22 13.82 L-0.91 13.85 L-1.56 13.83 L-2.12 13.76 L-2.60 13.64 L-3.06 13.46 L-3.59 13.19 L-4.15 12.84 L-4.70 12.43 L-5.22 11.97 L-5.69 11.47 L-6.09 10.97 L-6.41 10.49 L-6.67 9.98 L-6.92 9.39 L-7.21 8.73 L-7.47 7.99 L-7.68 7.18 L-7.85 6.34 L-7.98 5.46 L-8.06 4.59 L-8.09 3.71 L-8.07 2.78 L-7.98 1.82 L-7.85 0.81 L-7.67 -0.22 L-7.44 -1.27 L-7.18 -2.33 L-6.89 -3.37 L-6.56 -4.41 L-6.17 -5.47 L-5.72 -6.56 L-5.24 -7.65 L-4.72 -8.75 L-4.19 -9.84 L-3.65 -10.92 L-3.13 -11.98 L-2.58 -13.04 L-1.97 -14.16 L-1.32 -15.30 L-0.68 -16.41 L-0.06 -17.46 L0.48 -18.40 L0.93 -19.21 L1.25 -19.83 Z" fill="#d0d0d0" stroke="#8e8e8e" stroke-width="0.91" stroke-linejoin="round"/><path transform="translate(533.3 514.5) rotate(-100) scale(-0.93 0.93)" d="M0.75 -20.17 L0.29 -19.65 L-0.30 -18.95 L-1.00 -18.10 L-1.76 -17.15 L-2.56 -16.13 L-3.37 -15.08 L-4.15 -14.03 L-4.87 -13.02 L-5.55 -12.05 L-6.25 -11.05 L-6.95 -10.02 L-7.64 -8.97 L-8.31 -7.91 L-8.96 -6.82 L-9.56 -5.72 L-10.11 -4.63 L-10.61 -3.54 L-11.07 -2.43 L-11.51 -1.32 L-11.90 -0.19 L-12.25 0.96 L-12.54 2.11 L-12.78 3.26 L-12.94 4.41 L-13.04 5.55 L-13.08 6.69 L-13.06 7.85 L-12.97 9.01 L-12.81 10.17 L-12.55 11.33 L-12.14 12.44 L-11.59 13.51 L-10.94 14.51 L-10.20 15.43 L-9.38 16.29 L-8.49 17.07 L-7.55 17.78 L-6.56 18.41 L-5.51 18.94 L-4.40 19.36 L-3.24 19.65 L-2.06 19.81 L-0.88 19.85 L0.28 19.80 L1.43 19.66 L2.54 19.44 L3.62 19.15 L4.66 18.77 L5.67 18.29 L6.63 17.71 L7.54 17.06 L8.39 16.35 L9.18 15.58 L9.91 14.75 L10.56 13.87 L11.14 12.93 L11.62 11.91 L11.99 10.86 L12.27 9.79 L12.47 8.71 L12.59 7.63 L12.62 6.57 L12.58 5.52 L12.45 4.47 L12.21 3.44 L11.86 2.44 L11.43 1.49 L10.93 0.59 L10.37 -0.25 L9.75 -1.03 L9.06 -1.75 L8.28 -2.41 L7.40 -2.98 L6.47 -3.41 L5.52 -3.73 L4.58 -3.95 L3.63 -4.08 L2.69 -4.12 L1.75 -4.08 L0.80 -3.92 L-0.15 -3.61 L-1.02 -3.20 L-1.80 -2.69 L-2.51 -2.13 L-3.16 -1.51 L-3.73 -0.83 L-4.19 -0.08 L-4.56 0.81 L-4.82 1.82 L-4.92 2.82 L-4.92 3.74 L-4.85 4.60 L-4.76 5.38 L-4.65 6.05 L-4.54 6.56 L-4.45 6.91 L-0.55 7.09 L-0.42 6.64 L-0.31 6.06 L-0.20 5.42 L-0.08 4.77 L0.06 4.15 L0.23 3.63 L0.40 3.30 L0.56 3.19 L0.76 3.08 L0.99 2.87 L1.21 2.61 L1.45 2.38 L1.69 2.18 L1.92 2.04 L2.09 1.95 L2.20 1.92 L2.38 1.89 L2.69 1.88 L3.07 1.89 L3.49 1.95 L3.89 2.04 L4.25 2.16 L4.52 2.29 L4.72 2.41 L4.93 2.60 L5.22 2.90 L5.52 3.28 L5.82 3.72 L6.08 4.19 L6.29 4.66 L6.45 5.11 L6.55 5.53 L6.60 5.99 L6.62 6.57 L6.60 7.20 L6.53 7.85 L6.41 8.50 L6.26 9.10 L6.07 9.63 L5.86 10.07 L5.60 10.50 L5.25 10.97 L4.83 11.44 L4.36 11.90 L3.86 12.32 L3.34 12.69 L2.83 13.00 L2.34 13.23 L1.80 13.43 L1.17 13.60 L0.49 13.74 L-0.22 13.82 L-0.91 13.85 L-1.56 13.83 L-2.12 13.76 L-2.60 13.64 L-3.06 13.46 L-3.59 13.19 L-4.15 12.84 L-4.70 12.43 L-5.22 11.97 L-5.69 11.47 L-6.09 10.97 L-6.41 10.49 L-6.67 9.98 L-6.92 9.39 L-7.21 8.73 L-7.47 7.99 L-7.68 7.18 L-7.85 6.34 L-7.98 5.46 L-8.06 4.59 L-8.09 3.71 L-8.07 2.78 L-7.98 1.82 L-7.85 0.81 L-7.67 -0.22 L-7.44 -1.27 L-7.18 -2.33 L-6.89 -3.37 L-6.56 -4.41 L-6.17 -5.47 L-5.72 -6.56 L-5.24 -7.65 L-4.72 -8.75 L-4.19 -9.84 L-3.65 -10.92 L-3.13 -11.98 L-2.58 -13.04 L-1.97 -14.16 L-1.32 -15.30 L-0.68 -16.41 L-0.06 -17.46 L0.48 -18.40 L0.93 -19.21 L1.25 -19.83 Z" fill="#d0d0d0" stroke="#8e8e8e" stroke-width="0.91" stroke-linejoin="round"/><path transform="translate(571.6 521.8) rotate(0) scale(-0.93 0.93)" d="M0.75 -20.17 L0.29 -19.65 L-0.30 -18.95 L-1.00 -18.10 L-1.76 -17.15 L-2.56 -16.13 L-3.37 -15.08 L-4.15 -14.03 L-4.87 -13.02 L-5.55 -12.05 L-6.25 -11.05 L-6.95 -10.02 L-7.64 -8.97 L-8.31 -7.91 L-8.96 -6.82 L-9.56 -5.72 L-10.11 -4.63 L-10.61 -3.54 L-11.07 -2.43 L-11.51 -1.32 L-11.90 -0.19 L-12.25 0.96 L-12.54 2.11 L-12.78 3.26 L-12.94 4.41 L-13.04 5.55 L-13.08 6.69 L-13.06 7.85 L-12.97 9.01 L-12.81 10.17 L-12.55 11.33 L-12.14 12.44 L-11.59 13.51 L-10.94 14.51 L-10.20 15.43 L-9.38 16.29 L-8.49 17.07 L-7.55 17.78 L-6.56 18.41 L-5.51 18.94 L-4.40 19.36 L-3.24 19.65 L-2.06 19.81 L-0.88 19.85 L0.28 19.80 L1.43 19.66 L2.54 19.44 L3.62 19.15 L4.66 18.77 L5.67 18.29 L6.63 17.71 L7.54 17.06 L8.39 16.35 L9.18 15.58 L9.91 14.75 L10.56 13.87 L11.14 12.93 L11.62 11.91 L11.99 10.86 L12.27 9.79 L12.47 8.71 L12.59 7.63 L12.62 6.57 L12.58 5.52 L12.45 4.47 L12.21 3.44 L11.86 2.44 L11.43 1.49 L10.93 0.59 L10.37 -0.25 L9.75 -1.03 L9.06 -1.75 L8.28 -2.41 L7.40 -2.98 L6.47 -3.41 L5.52 -3.73 L4.58 -3.95 L3.63 -4.08 L2.69 -4.12 L1.75 -4.08 L0.80 -3.92 L-0.15 -3.61 L-1.02 -3.20 L-1.80 -2.69 L-2.51 -2.13 L-3.16 -1.51 L-3.73 -0.83 L-4.19 -0.08 L-4.56 0.81 L-4.82 1.82 L-4.92 2.82 L-4.92 3.74 L-4.85 4.60 L-4.76 5.38 L-4.65 6.05 L-4.54 6.56 L-4.45 6.91 L-0.55 7.09 L-0.42 6.64 L-0.31 6.06 L-0.20 5.42 L-0.08 4.77 L0.06 4.15 L0.23 3.63 L0.40 3.30 L0.56 3.19 L0.76 3.08 L0.99 2.87 L1.21 2.61 L1.45 2.38 L1.69 2.18 L1.92 2.04 L2.09 1.95 L2.20 1.92 L2.38 1.89 L2.69 1.88 L3.07 1.89 L3.49 1.95 L3.89 2.04 L4.25 2.16 L4.52 2.29 L4.72 2.41 L4.93 2.60 L5.22 2.90 L5.52 3.28 L5.82 3.72 L6.08 4.19 L6.29 4.66 L6.45 5.11 L6.55 5.53 L6.60 5.99 L6.62 6.57 L6.60 7.20 L6.53 7.85 L6.41 8.50 L6.26 9.10 L6.07 9.63 L5.86 10.07 L5.60 10.50 L5.25 10.97 L4.83 11.44 L4.36 11.90 L3.86 12.32 L3.34 12.69 L2.83 13.00 L2.34 13.23 L1.80 13.43 L1.17 13.60 L0.49 13.74 L-0.22 13.82 L-0.91 13.85 L-1.56 13.83 L-2.12 13.76 L-2.60 13.64 L-3.06 13.46 L-3.59 13.19 L-4.15 12.84 L-4.70 12.43 L-5.22 11.97 L-5.69 11.47 L-6.09 10.97 L-6.41 10.49 L-6.67 9.98 L-6.92 9.39 L-7.21 8.73 L-7.47 7.99 L-7.68 7.18 L-7.85 6.34 L-7.98 5.46 L-8.06 4.59 L-8.09 3.71 L-8.07 2.78 L-7.98 1.82 L-7.85 0.81 L-7.67 -0.22 L-7.44 -1.27 L-7.18 -2.33 L-6.89 -3.37 L-6.56 -4.41 L-6.17 -5.47 L-5.72 -6.56 L-5.24 -7.65 L-4.72 -8.75 L-4.19 -9.84 L-3.65 -10.92 L-3.13 -11.98 L-2.58 -13.04 L-1.97 -14.16 L-1.32 -15.30 L-0.68 -16.41 L-0.06 -17.46 L0.48 -18.40 L0.93 -19.21 L1.25 -19.83 Z" fill="#d0d0d0" stroke="#8e8e8e" stroke-width="0.91" stroke-linejoin="round"/><path transform="translate(624.3 523.0) rotate(0) scale(-0.93 0.93)" d="M0.75 -20.17 L0.29 -19.65 L-0.30 -18.95 L-1.00 -18.10 L-1.76 -17.15 L-2.56 -16.13 L-3.37 -15.08 L-4.15 -14.03 L-4.87 -13.02 L-5.55 -12.05 L-6.25 -11.05 L-6.95 -10.02 L-7.64 -8.97 L-8.31 -7.91 L-8.96 -6.82 L-9.56 -5.72 L-10.11 -4.63 L-10.61 -3.54 L-11.07 -2.43 L-11.51 -1.32 L-11.90 -0.19 L-12.25 0.96 L-12.54 2.11 L-12.78 3.26 L-12.94 4.41 L-13.04 5.55 L-13.08 6.69 L-13.06 7.85 L-12.97 9.01 L-12.81 10.17 L-12.55 11.33 L-12.14 12.44 L-11.59 13.51 L-10.94 14.51 L-10.20 15.43 L-9.38 16.29 L-8.49 17.07 L-7.55 17.78 L-6.56 18.41 L-5.51 18.94 L-4.40 19.36 L-3.24 19.65 L-2.06 19.81 L-0.88 19.85 L0.28 19.80 L1.43 19.66 L2.54 19.44 L3.62 19.15 L4.66 18.77 L5.67 18.29 L6.63 17.71 L7.54 17.06 L8.39 16.35 L9.18 15.58 L9.91 14.75 L10.56 13.87 L11.14 12.93 L11.62 11.91 L11.99 10.86 L12.27 9.79 L12.47 8.71 L12.59 7.63 L12.62 6.57 L12.58 5.52 L12.45 4.47 L12.21 3.44 L11.86 2.44 L11.43 1.49 L10.93 0.59 L10.37 -0.25 L9.75 -1.03 L9.06 -1.75 L8.28 -2.41 L7.40 -2.98 L6.47 -3.41 L5.52 -3.73 L4.58 -3.95 L3.63 -4.08 L2.69 -4.12 L1.75 -4.08 L0.80 -3.92 L-0.15 -3.61 L-1.02 -3.20 L-1.80 -2.69 L-2.51 -2.13 L-3.16 -1.51 L-3.73 -0.83 L-4.19 -0.08 L-4.56 0.81 L-4.82 1.82 L-4.92 2.82 L-4.92 3.74 L-4.85 4.60 L-4.76 5.38 L-4.65 6.05 L-4.54 6.56 L-4.45 6.91 L-0.55 7.09 L-0.42 6.64 L-0.31 6.06 L-0.20 5.42 L-0.08 4.77 L0.06 4.15 L0.23 3.63 L0.40 3.30 L0.56 3.19 L0.76 3.08 L0.99 2.87 L1.21 2.61 L1.45 2.38 L1.69 2.18 L1.92 2.04 L2.09 1.95 L2.20 1.92 L2.38 1.89 L2.69 1.88 L3.07 1.89 L3.49 1.95 L3.89 2.04 L4.25 2.16 L4.52 2.29 L4.72 2.41 L4.93 2.60 L5.22 2.90 L5.52 3.28 L5.82 3.72 L6.08 4.19 L6.29 4.66 L6.45 5.11 L6.55 5.53 L6.60 5.99 L6.62 6.57 L6.60 7.20 L6.53 7.85 L6.41 8.50 L6.26 9.10 L6.07 9.63 L5.86 10.07 L5.60 10.50 L5.25 10.97 L4.83 11.44 L4.36 11.90 L3.86 12.32 L3.34 12.69 L2.83 13.00 L2.34 13.23 L1.80 13.43 L1.17 13.60 L0.49 13.74 L-0.22 13.82 L-0.91 13.85 L-1.56 13.83 L-2.12 13.76 L-2.60 13.64 L-3.06 13.46 L-3.59 13.19 L-4.15 12.84 L-4.70 12.43 L-5.22 11.97 L-5.69 11.47 L-6.09 10.97 L-6.41 10.49 L-6.67 9.98 L-6.92 9.39 L-7.21 8.73 L-7.47 7.99 L-7.68 7.18 L-7.85 6.34 L-7.98 5.46 L-8.06 4.59 L-8.09 3.71 L-8.07 2.78 L-7.98 1.82 L-7.85 0.81 L-7.67 -0.22 L-7.44 -1.27 L-7.18 -2.33 L-6.89 -3.37 L-6.56 -4.41 L-6.17 -5.47 L-5.72 -6.56 L-5.24 -7.65 L-4.72 -8.75 L-4.19 -9.84 L-3.65 -10.92 L-3.13 -11.98 L-2.58 -13.04 L-1.97 -14.16 L-1.32 -15.30 L-0.68 -16.41 L-0.06 -17.46 L0.48 -18.40 L0.93 -19.21 L1.25 -19.83 Z" fill="#d0d0d0" stroke="#8e8e8e" stroke-width="0.91" stroke-linejoin="round"/><path transform="translate(544.3 556.0) rotate(-60) scale(0.93 0.93)" d="M0.75 -20.17 L0.29 -19.65 L-0.30 -18.95 L-1.00 -18.10 L-1.76 -17.15 L-2.56 -16.13 L-3.37 -15.08 L-4.15 -14.03 L-4.87 -13.02 L-5.55 -12.05 L-6.25 -11.05 L-6.95 -10.02 L-7.64 -8.97 L-8.31 -7.91 L-8.96 -6.82 L-9.56 -5.72 L-10.11 -4.63 L-10.61 -3.54 L-11.07 -2.43 L-11.51 -1.32 L-11.90 -0.19 L-12.25 0.96 L-12.54 2.11 L-12.78 3.26 L-12.94 4.41 L-13.04 5.55 L-13.08 6.69 L-13.06 7.85 L-12.97 9.01 L-12.81 10.17 L-12.55 11.33 L-12.14 12.44 L-11.59 13.51 L-10.94 14.51 L-10.20 15.43 L-9.38 16.29 L-8.49 17.07 L-7.55 17.78 L-6.56 18.41 L-5.51 18.94 L-4.40 19.36 L-3.24 19.65 L-2.06 19.81 L-0.88 19.85 L0.28 19.80 L1.43 19.66 L2.54 19.44 L3.62 19.15 L4.66 18.77 L5.67 18.29 L6.63 17.71 L7.54 17.06 L8.39 16.35 L9.18 15.58 L9.91 14.75 L10.56 13.87 L11.14 12.93 L11.62 11.91 L11.99 10.86 L12.27 9.79 L12.47 8.71 L12.59 7.63 L12.62 6.57 L12.58 5.52 L12.45 4.47 L12.21 3.44 L11.86 2.44 L11.43 1.49 L10.93 0.59 L10.37 -0.25 L9.75 -1.03 L9.06 -1.75 L8.28 -2.41 L7.40 -2.98 L6.47 -3.41 L5.52 -3.73 L4.58 -3.95 L3.63 -4.08 L2.69 -4.12 L1.75 -4.08 L0.80 -3.92 L-0.15 -3.61 L-1.02 -3.20 L-1.80 -2.69 L-2.51 -2.13 L-3.16 -1.51 L-3.73 -0.83 L-4.19 -0.08 L-4.56 0.81 L-4.82 1.82 L-4.92 2.82 L-4.92 3.74 L-4.85 4.60 L-4.76 5.38 L-4.65 6.05 L-4.54 6.56 L-4.45 6.91 L-0.55 7.09 L-0.42 6.64 L-0.31 6.06 L-0.20 5.42 L-0.08 4.77 L0.06 4.15 L0.23 3.63 L0.40 3.30 L0.56 3.19 L0.76 3.08 L0.99 2.87 L1.21 2.61 L1.45 2.38 L1.69 2.18 L1.92 2.04 L2.09 1.95 L2.20 1.92 L2.38 1.89 L2.69 1.88 L3.07 1.89 L3.49 1.95 L3.89 2.04 L4.25 2.16 L4.52 2.29 L4.72 2.41 L4.93 2.60 L5.22 2.90 L5.52 3.28 L5.82 3.72 L6.08 4.19 L6.29 4.66 L6.45 5.11 L6.55 5.53 L6.60 5.99 L6.62 6.57 L6.60 7.20 L6.53 7.85 L6.41 8.50 L6.26 9.10 L6.07 9.63 L5.86 10.07 L5.60 10.50 L5.25 10.97 L4.83 11.44 L4.36 11.90 L3.86 12.32 L3.34 12.69 L2.83 13.00 L2.34 13.23 L1.80 13.43 L1.17 13.60 L0.49 13.74 L-0.22 13.82 L-0.91 13.85 L-1.56 13.83 L-2.12 13.76 L-2.60 13.64 L-3.06 13.46 L-3.59 13.19 L-4.15 12.84 L-4.70 12.43 L-5.22 11.97 L-5.69 11.47 L-6.09 10.97 L-6.41 10.49 L-6.67 9.98 L-6.92 9.39 L-7.21 8.73 L-7.47 7.99 L-7.68 7.18 L-7.85 6.34 L-7.98 5.46 L-8.06 4.59 L-8.09 3.71 L-8.07 2.78 L-7.98 1.82 L-7.85 0.81 L-7.67 -0.22 L-7.44 -1.27 L-7.18 -2.33 L-6.89 -3.37 L-6.56 -4.41 L-6.17 -5.47 L-5.72 -6.56 L-5.24 -7.65 L-4.72 -8.75 L-4.19 -9.84 L-3.65 -10.92 L-3.13 -11.98 L-2.58 -13.04 L-1.97 -14.16 L-1.32 -15.30 L-0.68 -16.41 L-0.06 -17.46 L0.48 -18.40 L0.93 -19.21 L1.25 -19.83 Z" fill="#d0d0d0" stroke="#8e8e8e" stroke-width="0.91" stroke-linejoin="round"/><path transform="translate(582.0 551.0) rotate(0) scale(0.93 0.93)" d="M0.75 -20.17 L0.29 -19.65 L-0.30 -18.95 L-1.00 -18.10 L-1.76 -17.15 L-2.56 -16.13 L-3.37 -15.08 L-4.15 -14.03 L-4.87 -13.02 L-5.55 -12.05 L-6.25 -11.05 L-6.95 -10.02 L-7.64 -8.97 L-8.31 -7.91 L-8.96 -6.82 L-9.56 -5.72 L-10.11 -4.63 L-10.61 -3.54 L-11.07 -2.43 L-11.51 -1.32 L-11.90 -0.19 L-12.25 0.96 L-12.54 2.11 L-12.78 3.26 L-12.94 4.41 L-13.04 5.55 L-13.08 6.69 L-13.06 7.85 L-12.97 9.01 L-12.81 10.17 L-12.55 11.33 L-12.14 12.44 L-11.59 13.51 L-10.94 14.51 L-10.20 15.43 L-9.38 16.29 L-8.49 17.07 L-7.55 17.78 L-6.56 18.41 L-5.51 18.94 L-4.40 19.36 L-3.24 19.65 L-2.06 19.81 L-0.88 19.85 L0.28 19.80 L1.43 19.66 L2.54 19.44 L3.62 19.15 L4.66 18.77 L5.67 18.29 L6.63 17.71 L7.54 17.06 L8.39 16.35 L9.18 15.58 L9.91 14.75 L10.56 13.87 L11.14 12.93 L11.62 11.91 L11.99 10.86 L12.27 9.79 L12.47 8.71 L12.59 7.63 L12.62 6.57 L12.58 5.52 L12.45 4.47 L12.21 3.44 L11.86 2.44 L11.43 1.49 L10.93 0.59 L10.37 -0.25 L9.75 -1.03 L9.06 -1.75 L8.28 -2.41 L7.40 -2.98 L6.47 -3.41 L5.52 -3.73 L4.58 -3.95 L3.63 -4.08 L2.69 -4.12 L1.75 -4.08 L0.80 -3.92 L-0.15 -3.61 L-1.02 -3.20 L-1.80 -2.69 L-2.51 -2.13 L-3.16 -1.51 L-3.73 -0.83 L-4.19 -0.08 L-4.56 0.81 L-4.82 1.82 L-4.92 2.82 L-4.92 3.74 L-4.85 4.60 L-4.76 5.38 L-4.65 6.05 L-4.54 6.56 L-4.45 6.91 L-0.55 7.09 L-0.42 6.64 L-0.31 6.06 L-0.20 5.42 L-0.08 4.77 L0.06 4.15 L0.23 3.63 L0.40 3.30 L0.56 3.19 L0.76 3.08 L0.99 2.87 L1.21 2.61 L1.45 2.38 L1.69 2.18 L1.92 2.04 L2.09 1.95 L2.20 1.92 L2.38 1.89 L2.69 1.88 L3.07 1.89 L3.49 1.95 L3.89 2.04 L4.25 2.16 L4.52 2.29 L4.72 2.41 L4.93 2.60 L5.22 2.90 L5.52 3.28 L5.82 3.72 L6.08 4.19 L6.29 4.66 L6.45 5.11 L6.55 5.53 L6.60 5.99 L6.62 6.57 L6.60 7.20 L6.53 7.85 L6.41 8.50 L6.26 9.10 L6.07 9.63 L5.86 10.07 L5.60 10.50 L5.25 10.97 L4.83 11.44 L4.36 11.90 L3.86 12.32 L3.34 12.69 L2.83 13.00 L2.34 13.23 L1.80 13.43 L1.17 13.60 L0.49 13.74 L-0.22 13.82 L-0.91 13.85 L-1.56 13.83 L-2.12 13.76 L-2.60 13.64 L-3.06 13.46 L-3.59 13.19 L-4.15 12.84 L-4.70 12.43 L-5.22 11.97 L-5.69 11.47 L-6.09 10.97 L-6.41 10.49 L-6.67 9.98 L-6.92 9.39 L-7.21 8.73 L-7.47 7.99 L-7.68 7.18 L-7.85 6.34 L-7.98 5.46 L-8.06 4.59 L-8.09 3.71 L-8.07 2.78 L-7.98 1.82 L-7.85 0.81 L-7.67 -0.22 L-7.44 -1.27 L-7.18 -2.33 L-6.89 -3.37 L-6.56 -4.41 L-6.17 -5.47 L-5.72 -6.56 L-5.24 -7.65 L-4.72 -8.75 L-4.19 -9.84 L-3.65 -10.92 L-3.13 -11.98 L-2.58 -13.04 L-1.97 -14.16 L-1.32 -15.30 L-0.68 -16.41 L-0.06 -17.46 L0.48 -18.40 L0.93 -19.21 L1.25 -19.83 Z" fill="#d0d0d0" stroke="#8e8e8e" stroke-width="0.91" stroke-linejoin="round"/><path transform="translate(532.0 587.7) rotate(0) scale(-0.93 0.93)" d="M0.75 -20.17 L0.29 -19.65 L-0.30 -18.95 L-1.00 -18.10 L-1.76 -17.15 L-2.56 -16.13 L-3.37 -15.08 L-4.15 -14.03 L-4.87 -13.02 L-5.55 -12.05 L-6.25 -11.05 L-6.95 -10.02 L-7.64 -8.97 L-8.31 -7.91 L-8.96 -6.82 L-9.56 -5.72 L-10.11 -4.63 L-10.61 -3.54 L-11.07 -2.43 L-11.51 -1.32 L-11.90 -0.19 L-12.25 0.96 L-12.54 2.11 L-12.78 3.26 L-12.94 4.41 L-13.04 5.55 L-13.08 6.69 L-13.06 7.85 L-12.97 9.01 L-12.81 10.17 L-12.55 11.33 L-12.14 12.44 L-11.59 13.51 L-10.94 14.51 L-10.20 15.43 L-9.38 16.29 L-8.49 17.07 L-7.55 17.78 L-6.56 18.41 L-5.51 18.94 L-4.40 19.36 L-3.24 19.65 L-2.06 19.81 L-0.88 19.85 L0.28 19.80 L1.43 19.66 L2.54 19.44 L3.62 19.15 L4.66 18.77 L5.67 18.29 L6.63 17.71 L7.54 17.06 L8.39 16.35 L9.18 15.58 L9.91 14.75 L10.56 13.87 L11.14 12.93 L11.62 11.91 L11.99 10.86 L12.27 9.79 L12.47 8.71 L12.59 7.63 L12.62 6.57 L12.58 5.52 L12.45 4.47 L12.21 3.44 L11.86 2.44 L11.43 1.49 L10.93 0.59 L10.37 -0.25 L9.75 -1.03 L9.06 -1.75 L8.28 -2.41 L7.40 -2.98 L6.47 -3.41 L5.52 -3.73 L4.58 -3.95 L3.63 -4.08 L2.69 -4.12 L1.75 -4.08 L0.80 -3.92 L-0.15 -3.61 L-1.02 -3.20 L-1.80 -2.69 L-2.51 -2.13 L-3.16 -1.51 L-3.73 -0.83 L-4.19 -0.08 L-4.56 0.81 L-4.82 1.82 L-4.92 2.82 L-4.92 3.74 L-4.85 4.60 L-4.76 5.38 L-4.65 6.05 L-4.54 6.56 L-4.45 6.91 L-0.55 7.09 L-0.42 6.64 L-0.31 6.06 L-0.20 5.42 L-0.08 4.77 L0.06 4.15 L0.23 3.63 L0.40 3.30 L0.56 3.19 L0.76 3.08 L0.99 2.87 L1.21 2.61 L1.45 2.38 L1.69 2.18 L1.92 2.04 L2.09 1.95 L2.20 1.92 L2.38 1.89 L2.69 1.88 L3.07 1.89 L3.49 1.95 L3.89 2.04 L4.25 2.16 L4.52 2.29 L4.72 2.41 L4.93 2.60 L5.22 2.90 L5.52 3.28 L5.82 3.72 L6.08 4.19 L6.29 4.66 L6.45 5.11 L6.55 5.53 L6.60 5.99 L6.62 6.57 L6.60 7.20 L6.53 7.85 L6.41 8.50 L6.26 9.10 L6.07 9.63 L5.86 10.07 L5.60 10.50 L5.25 10.97 L4.83 11.44 L4.36 11.90 L3.86 12.32 L3.34 12.69 L2.83 13.00 L2.34 13.23 L1.80 13.43 L1.17 13.60 L0.49 13.74 L-0.22 13.82 L-0.91 13.85 L-1.56 13.83 L-2.12 13.76 L-2.60 13.64 L-3.06 13.46 L-3.59 13.19 L-4.15 12.84 L-4.70 12.43 L-5.22 11.97 L-5.69 11.47 L-6.09 10.97 L-6.41 10.49 L-6.67 9.98 L-6.92 9.39 L-7.21 8.73 L-7.47 7.99 L-7.68 7.18 L-7.85 6.34 L-7.98 5.46 L-8.06 4.59 L-8.09 3.71 L-8.07 2.78 L-7.98 1.82 L-7.85 0.81 L-7.67 -0.22 L-7.44 -1.27 L-7.18 -2.33 L-6.89 -3.37 L-6.56 -4.41 L-6.17 -5.47 L-5.72 -6.56 L-5.24 -7.65 L-4.72 -8.75 L-4.19 -9.84 L-3.65 -10.92 L-3.13 -11.98 L-2.58 -13.04 L-1.97 -14.16 L-1.32 -15.30 L-0.68 -16.41 L-0.06 -17.46 L0.48 -18.40 L0.93 -19.21 L1.25 -19.83 Z" fill="#d0d0d0" stroke="#8e8e8e" stroke-width="0.91" stroke-linejoin="round"/><path d="M394 330 L407 330 L402 408 Q396 398 395 380 Q393 350 394 330 Z" fill="#ecc774" stroke="#c59c17" stroke-width="0.7"/><path d="M473 330 L486 330 Q488 350 486 380 Q485 398 478 408 Z" fill="#ecc774" stroke="#c59c17" stroke-width="0.7"/><path d="M394 345 L407 338 M473 338 L487 345" stroke="#c59c17" stroke-width="3.2"/><path d="M394 358 L407 351 M473 351 L487 358" stroke="#c59c17" stroke-width="3.2"/><path d="M394 371 L407 364 M473 364 L487 371" stroke="#c59c17" stroke-width="3.2"/><path d="M394 384 L407 377 M473 377 L487 384" stroke="#c59c17" stroke-width="3.2"/><path d="M394 397 L407 390 M473 390 L487 397" stroke="#c59c17" stroke-width="3.2"/><path d="M358.5 614.0 A7.0 7.0 0 0 0 357.0 626.0 A6.4 6.4 0 0 0 362.0 636.0 A6.4 6.4 0 0 0 372.0 641.0 A8.1 8.1 0 0 0 386.0 643.0 A8.4 8.4 0 0 0 400.0 647.0 A8.7 8.7 0 0 0 415.0 649.0 A8.7 8.7 0 0 0 430.0 651.5 A9.2 9.2 0 0 0 446.0 651.5 A8.7 8.7 0 0 0 461.0 649.0 A8.7 8.7 0 0 0 476.0 647.0 A8.2 8.2 0 0 0 490.0 644.0 A8.8 8.8 0 0 0 505.0 641.0 A7.5 7.5 0 0 0 516.0 634.0 A6.9 6.9 0 0 0 522.6 624.0 A7.1 7.1 0 0 0 520.0 612.0 L500 600 L380 600 Z" fill="#f8f8f8" stroke="#9a9a9a" stroke-width="0.8"/><path d="M401.3 406.7 L368.5 444 A22 22 0 0 0 367 469 A22 22 0 0 0 367 494 A22 22 0 0 0 367 519 A22 22 0 0 0 367 544 A22 22 0 0 0 367 569 A22 22 0 0 0 367 594 A22 22 0 0 0 367 612 Q367 624 380 624 L396 624 Q408 624 409 612 L468 612 Q469 624 481 624 L496 624 Q509 624 508.3 612 A22 22 0 0 0 508.3 594 A22 22 0 0 0 508.3 569 A22 22 0 0 0 508.3 544 A22 22 0 0 0 508.3 519 A22 22 0 0 0 508.3 494 A22 22 0 0 0 508.3 469 A22 22 0 0 0 508.3 444 L505.3 445.3 L492 426.7 L480 408 Z" fill="#d5d5d5" stroke="#9a9a9a" stroke-width="0.9"/><path d="M438.7 416 V436" stroke="#9a9a9a" stroke-width="0.7"/><path d="M408.5 640 L408.5 612 A20 20 0 0 0 408.5 587 A20 20 0 0 0 408.5 562 A20 20 0 0 0 408.5 537 A20 20 0 0 0 408.5 512 A20 20 0 0 0 408.5 487 A20 20 0 0 0 408.5 462 A20 20 0 0 0 408.5 437 Q409 440 418 437 Q428 432 438 433 Q452 432 462 437 Q470 442 469.8 450 A20 20 0 0 0 469.8 475 A20 20 0 0 0 469.8 500 A20 20 0 0 0 469.8 525 A20 20 0 0 0 469.8 550 A20 20 0 0 0 469.8 575 A20 20 0 0 0 469.8 600 A20 20 0 0 0 469.8 612 L469.8 640 Z" fill="#f8f8f8"/><path d="M408.5 612 A20 20 0 0 0 408.5 587 A20 20 0 0 0 408.5 562 A20 20 0 0 0 408.5 537 A20 20 0 0 0 408.5 512 A20 20 0 0 0 408.5 487 A20 20 0 0 0 408.5 462 A20 20 0 0 0 408.5 437 Q409 440 418 437 Q428 432 438 433 Q452 432 462 437 Q470 442 469.8 450 A20 20 0 0 0 469.8 475 A20 20 0 0 0 469.8 500 A20 20 0 0 0 469.8 525 A20 20 0 0 0 469.8 550 A20 20 0 0 0 469.8 575 A20 20 0 0 0 469.8 600 A20 20 0 0 0 469.8 612" fill="none" stroke="#9a9a9a" stroke-width="0.8"/><path d="M387.0 443.5 L390.2 451.6 L398.9 452.1 L392.1 457.7 L394.3 466.1 L387.0 461.4 L379.7 466.1 L381.9 457.7 L375.1 452.1 L383.8 451.6 Z" fill="#fafafa" stroke="#9a9a9a" stroke-width="0.9"/><path d="M387.0 491.5 L390.2 499.6 L398.9 500.1 L392.1 505.7 L394.3 514.1 L387.0 509.4 L379.7 514.1 L381.9 505.7 L375.1 500.1 L383.8 499.6 Z" fill="#fafafa" stroke="#9a9a9a" stroke-width="0.9"/><path d="M387.0 540.1 L390.2 548.2 L398.9 548.7 L392.1 554.3 L394.3 562.7 L387.0 558.0 L379.7 562.7 L381.9 554.3 L375.1 548.7 L383.8 548.2 Z" fill="#fafafa" stroke="#9a9a9a" stroke-width="0.9"/><path d="M387.0 586.5 L390.2 594.6 L398.9 595.1 L392.1 600.7 L394.3 609.1 L387.0 604.4 L379.7 609.1 L381.9 600.7 L375.1 595.1 L383.8 594.6 Z" fill="#fafafa" stroke="#9a9a9a" stroke-width="0.9"/><path d="M488.0 443.5 L491.2 451.6 L499.9 452.1 L493.1 457.7 L495.3 466.1 L488.0 461.4 L480.7 466.1 L482.9 457.7 L476.1 452.1 L484.8 451.6 Z" fill="#fafafa" stroke="#9a9a9a" stroke-width="0.9"/><path d="M488.0 491.0 L491.2 499.1 L499.9 499.6 L493.1 505.2 L495.3 513.6 L488.0 508.9 L480.7 513.6 L482.9 505.2 L476.1 499.6 L484.8 499.1 Z" fill="#fafafa" stroke="#9a9a9a" stroke-width="0.9"/><path d="M488.0 538.5 L491.2 546.6 L499.9 547.1 L493.1 552.7 L495.3 561.1 L488.0 556.4 L480.7 561.1 L482.9 552.7 L476.1 547.1 L484.8 546.6 Z" fill="#fafafa" stroke="#9a9a9a" stroke-width="0.9"/><path d="M488.0 588.0 L491.2 596.1 L499.9 596.6 L493.1 602.2 L495.3 610.6 L488.0 605.9 L480.7 610.6 L482.9 602.2 L476.1 596.6 L484.8 596.1 Z" fill="#fafafa" stroke="#9a9a9a" stroke-width="0.9"/><path d="M443.0 453.5 L445.2 459.0 L451.1 459.4 L446.5 463.1 L448.0 468.9 L443.0 465.7 L438.0 468.9 L439.5 463.1 L434.9 459.4 L440.8 459.0 Z" fill="#d0d0d0" stroke="#9a9a9a" stroke-width="0.8"/><path d="M414.0 472.3 L416.2 477.8 L422.1 478.2 L417.5 481.9 L419.0 487.7 L414.0 484.5 L409.0 487.7 L410.5 481.9 L405.9 478.2 L411.8 477.8 Z" fill="#d0d0d0" stroke="#9a9a9a" stroke-width="0.8"/><path d="M461.0 495.1 L463.2 500.6 L469.1 501.0 L464.5 504.7 L466.0 510.5 L461.0 507.3 L456.0 510.5 L457.5 504.7 L452.9 501.0 L458.8 500.6 Z" fill="#d0d0d0" stroke="#9a9a9a" stroke-width="0.8"/><path d="M434.0 510.3 L436.2 515.8 L442.1 516.2 L437.5 519.9 L439.0 525.7 L434.0 522.5 L429.0 525.7 L430.5 519.9 L425.9 516.2 L431.8 515.8 Z" fill="#d0d0d0" stroke="#9a9a9a" stroke-width="0.8"/><path d="M413.0 527.4 L415.2 532.9 L421.1 533.3 L416.5 537.0 L418.0 542.8 L413.0 539.6 L408.0 542.8 L409.5 537.0 L404.9 533.3 L410.8 532.9 Z" fill="#d0d0d0" stroke="#9a9a9a" stroke-width="0.8"/><path d="M441.4 555.9 L443.6 561.4 L449.5 561.8 L444.9 565.5 L446.4 571.3 L441.4 568.1 L436.4 571.3 L437.9 565.5 L433.3 561.8 L439.2 561.4 Z" fill="#d0d0d0" stroke="#9a9a9a" stroke-width="0.8"/><path d="M424.0 580.5 L426.2 586.0 L432.1 586.4 L427.5 590.1 L429.0 595.9 L424.0 592.7 L419.0 595.9 L420.5 590.1 L415.9 586.4 L421.8 586.0 Z" fill="#d0d0d0" stroke="#9a9a9a" stroke-width="0.8"/><path d="M458.5 437.5 L460.7 443.0 L466.6 443.4 L462.0 447.1 L463.5 452.9 L458.5 449.7 L453.5 452.9 L455.0 447.1 L450.4 443.4 L456.3 443.0 Z" fill="#d0d0d0" stroke="#9a9a9a" stroke-width="0.8"/><path d="M414.0 437.5 L416.2 443.0 L422.1 443.4 L417.5 447.1 L419.0 452.9 L414.0 449.7 L409.0 452.9 L410.5 447.1 L405.9 443.4 L411.8 443.0 Z" fill="#d0d0d0" stroke="#9a9a9a" stroke-width="0.8"/><circle cx="434.0" cy="445.0" r="3.2" fill="#d0d0d0" stroke="#9a9a9a" stroke-width="0.8"/><circle cx="444.0" cy="495.0" r="3.2" fill="#d0d0d0" stroke="#9a9a9a" stroke-width="0.8"/><circle cx="437.6" cy="543.5" r="3.2" fill="#d0d0d0" stroke="#9a9a9a" stroke-width="0.8"/><circle cx="412.5" cy="559.0" r="3.2" fill="#d0d0d0" stroke="#9a9a9a" stroke-width="0.8"/><circle cx="463.5" cy="549.0" r="3.2" fill="#d0d0d0" stroke="#9a9a9a" stroke-width="0.8"/><circle cx="453.0" cy="591.0" r="3.2" fill="#d0d0d0" stroke="#9a9a9a" stroke-width="0.8"/><circle cx="419.5" cy="615.7" r="3.2" fill="#d0d0d0" stroke="#9a9a9a" stroke-width="0.8"/><circle cx="459.0" cy="620.0" r="3.2" fill="#d0d0d0" stroke="#9a9a9a" stroke-width="0.8"/><path d="M400.5 621.5 L402.7 627.0 L408.6 627.4 L404.0 631.1 L405.5 636.9 L400.5 633.7 L395.5 636.9 L397.0 631.1 L392.4 627.4 L398.3 627.0 Z" fill="#d0d0d0" stroke="#9a9a9a" stroke-width="0.8"/><path d="M438.0 625.0 L440.2 630.5 L446.1 630.9 L441.5 634.6 L443.0 640.4 L438.0 637.2 L433.0 640.4 L434.5 634.6 L429.9 630.9 L435.8 630.5 Z" fill="#d0d0d0" stroke="#9a9a9a" stroke-width="0.8"/><path d="M474.5 621.5 L476.7 627.0 L482.6 627.4 L478.0 631.1 L479.5 636.9 L474.5 633.7 L469.5 636.9 L471.0 631.1 L466.4 627.4 L472.3 627.0 Z" fill="#d0d0d0" stroke="#9a9a9a" stroke-width="0.8"/><path d="M405 287 L347 321 Q340 352 349 377 L404.5 325.6 L401.3 406.7 Q438.7 425 480 408 L475 323.6 L536.6 378.3 Q528 352 550 327 L478 285.6 Z" fill="#d5d5d5" stroke="#9a9a9a" stroke-width="0.9" stroke-linejoin="round"/><path d="M323 327 L338 324 Q329 352 340 379 L327 379 Q308 356 323 327 Z" fill="#d5d5d5" stroke="#9a9a9a" stroke-width="0.8"/><path d="M550 327 Q568 336 566 355 Q564 374 551 380.6 L536.6 378.3 Q528 352 550 327 Z" fill="#d5d5d5" stroke="#9a9a9a" stroke-width="0.8"/><path d="M338 324 L347 321 Q340 352 349 377 L340 379 Q329 352 338 324 Z" fill="#fbfbfb" stroke="#9a9a9a" stroke-width="0.8"/><path d="M550 327 Q528 352 536.6 378.3 L547 379.5 Q539 355 559 328 Z" fill="#fbfbfb" stroke="#9a9a9a" stroke-width="0.8"/><path d="M296.4 354.8 L303 335.7 L306.9 338.6 Q312 330 323 328 Q330 330 331 337.6 Q326 348 316.4 352.9 Z" fill="#f5d5c2" stroke="#b9978a" stroke-width="0.6"/><path d="M553 330 Q572 331 582 337 Q589 346 585 352 Q575 357 560 350 Q556 340 553 330 Z" fill="#f5d5c2" stroke="#b9978a" stroke-width="0.6"/><path transform="translate(353.0 330.0) rotate(100) scale(0.52 0.52)" d="M0.77 -20.15 L0.32 -19.63 L-0.27 -18.93 L-0.96 -18.08 L-1.72 -17.12 L-2.51 -16.10 L-3.31 -15.04 L-4.08 -13.99 L-4.80 -12.98 L-5.47 -12.00 L-6.16 -11.00 L-6.85 -9.97 L-7.54 -8.92 L-8.21 -7.85 L-8.84 -6.77 L-9.44 -5.67 L-9.98 -4.58 L-10.47 -3.48 L-10.92 -2.39 L-11.35 -1.27 L-11.73 -0.14 L-12.07 0.99 L-12.36 2.13 L-12.58 3.28 L-12.74 4.42 L-12.83 5.55 L-12.86 6.68 L-12.84 7.82 L-12.74 8.97 L-12.57 10.11 L-12.32 11.25 L-11.91 12.34 L-11.38 13.38 L-10.74 14.36 L-10.01 15.27 L-9.20 16.11 L-8.33 16.88 L-7.41 17.58 L-6.43 18.19 L-5.41 18.71 L-4.33 19.12 L-3.19 19.41 L-2.04 19.56 L-0.89 19.60 L0.26 19.55 L1.39 19.42 L2.48 19.20 L3.54 18.91 L4.56 18.54 L5.55 18.07 L6.49 17.50 L7.38 16.87 L8.22 16.16 L9.00 15.40 L9.71 14.59 L10.36 13.73 L10.92 12.81 L11.39 11.82 L11.75 10.79 L12.03 9.74 L12.22 8.68 L12.34 7.62 L12.38 6.57 L12.34 5.54 L12.21 4.52 L11.97 3.51 L11.63 2.53 L11.21 1.60 L10.72 0.72 L10.17 -0.10 L9.56 -0.87 L8.89 -1.57 L8.13 -2.21 L7.28 -2.76 L6.37 -3.18 L5.45 -3.49 L4.53 -3.70 L3.61 -3.83 L2.69 -3.88 L1.78 -3.83 L0.86 -3.67 L-0.05 -3.38 L-0.90 -2.98 L-1.66 -2.49 L-2.35 -1.94 L-2.97 -1.33 L-3.54 -0.68 L-3.98 0.05 L-4.35 0.91 L-4.60 1.88 L-4.71 2.85 L-4.71 3.76 L-4.66 4.61 L-4.57 5.39 L-4.47 6.05 L-4.37 6.56 L-4.29 6.92 L-0.71 7.08 L-0.59 6.64 L-0.49 6.06 L-0.39 5.42 L-0.28 4.77 L-0.15 4.14 L0.01 3.60 L0.19 3.24 L0.35 3.09 L0.55 2.95 L0.79 2.71 L1.03 2.44 L1.29 2.19 L1.55 1.98 L1.79 1.82 L1.99 1.72 L2.14 1.67 L2.35 1.64 L2.69 1.62 L3.10 1.64 L3.53 1.70 L3.96 1.80 L4.34 1.93 L4.64 2.07 L4.87 2.21 L5.11 2.42 L5.41 2.74 L5.72 3.14 L6.03 3.59 L6.30 4.08 L6.52 4.57 L6.69 5.04 L6.79 5.48 L6.85 5.97 L6.88 6.57 L6.85 7.22 L6.78 7.89 L6.66 8.55 L6.50 9.17 L6.30 9.73 L6.08 10.19 L5.80 10.64 L5.44 11.13 L5.01 11.62 L4.53 12.09 L4.01 12.52 L3.48 12.90 L2.95 13.22 L2.44 13.46 L1.88 13.67 L1.23 13.85 L0.53 13.98 L-0.20 14.07 L-0.91 14.10 L-1.58 14.08 L-2.17 14.00 L-2.67 13.88 L-3.17 13.69 L-3.72 13.41 L-4.29 13.05 L-4.85 12.62 L-5.39 12.15 L-5.88 11.64 L-6.29 11.12 L-6.62 10.62 L-6.90 10.08 L-7.16 9.47 L-7.44 8.79 L-7.70 8.03 L-7.90 7.21 L-8.07 6.35 L-8.19 5.47 L-8.26 4.58 L-8.29 3.69 L-8.25 2.76 L-8.16 1.78 L-8.02 0.77 L-7.83 -0.27 L-7.59 -1.32 L-7.32 -2.38 L-7.02 -3.42 L-6.68 -4.47 L-6.28 -5.53 L-5.83 -6.61 L-5.34 -7.71 L-4.81 -8.80 L-4.28 -9.89 L-3.73 -10.97 L-3.20 -12.02 L-2.65 -13.09 L-2.03 -14.20 L-1.37 -15.33 L-0.72 -16.44 L-0.10 -17.48 L0.45 -18.43 L0.90 -19.23 L1.23 -19.85 Z" fill="#fafafa" stroke="#a0a0a0" stroke-width="1.63" stroke-linejoin="round"/><path transform="translate(377.0 334.0) rotate(60) scale(-0.62 0.62)" d="M0.77 -20.15 L0.32 -19.63 L-0.27 -18.93 L-0.96 -18.08 L-1.72 -17.12 L-2.51 -16.10 L-3.31 -15.04 L-4.08 -13.99 L-4.80 -12.98 L-5.47 -12.00 L-6.16 -11.00 L-6.85 -9.97 L-7.54 -8.92 L-8.21 -7.85 L-8.84 -6.77 L-9.44 -5.67 L-9.98 -4.58 L-10.47 -3.48 L-10.92 -2.39 L-11.35 -1.27 L-11.73 -0.14 L-12.07 0.99 L-12.36 2.13 L-12.58 3.28 L-12.74 4.42 L-12.83 5.55 L-12.86 6.68 L-12.84 7.82 L-12.74 8.97 L-12.57 10.11 L-12.32 11.25 L-11.91 12.34 L-11.38 13.38 L-10.74 14.36 L-10.01 15.27 L-9.20 16.11 L-8.33 16.88 L-7.41 17.58 L-6.43 18.19 L-5.41 18.71 L-4.33 19.12 L-3.19 19.41 L-2.04 19.56 L-0.89 19.60 L0.26 19.55 L1.39 19.42 L2.48 19.20 L3.54 18.91 L4.56 18.54 L5.55 18.07 L6.49 17.50 L7.38 16.87 L8.22 16.16 L9.00 15.40 L9.71 14.59 L10.36 13.73 L10.92 12.81 L11.39 11.82 L11.75 10.79 L12.03 9.74 L12.22 8.68 L12.34 7.62 L12.38 6.57 L12.34 5.54 L12.21 4.52 L11.97 3.51 L11.63 2.53 L11.21 1.60 L10.72 0.72 L10.17 -0.10 L9.56 -0.87 L8.89 -1.57 L8.13 -2.21 L7.28 -2.76 L6.37 -3.18 L5.45 -3.49 L4.53 -3.70 L3.61 -3.83 L2.69 -3.88 L1.78 -3.83 L0.86 -3.67 L-0.05 -3.38 L-0.90 -2.98 L-1.66 -2.49 L-2.35 -1.94 L-2.97 -1.33 L-3.54 -0.68 L-3.98 0.05 L-4.35 0.91 L-4.60 1.88 L-4.71 2.85 L-4.71 3.76 L-4.66 4.61 L-4.57 5.39 L-4.47 6.05 L-4.37 6.56 L-4.29 6.92 L-0.71 7.08 L-0.59 6.64 L-0.49 6.06 L-0.39 5.42 L-0.28 4.77 L-0.15 4.14 L0.01 3.60 L0.19 3.24 L0.35 3.09 L0.55 2.95 L0.79 2.71 L1.03 2.44 L1.29 2.19 L1.55 1.98 L1.79 1.82 L1.99 1.72 L2.14 1.67 L2.35 1.64 L2.69 1.62 L3.10 1.64 L3.53 1.70 L3.96 1.80 L4.34 1.93 L4.64 2.07 L4.87 2.21 L5.11 2.42 L5.41 2.74 L5.72 3.14 L6.03 3.59 L6.30 4.08 L6.52 4.57 L6.69 5.04 L6.79 5.48 L6.85 5.97 L6.88 6.57 L6.85 7.22 L6.78 7.89 L6.66 8.55 L6.50 9.17 L6.30 9.73 L6.08 10.19 L5.80 10.64 L5.44 11.13 L5.01 11.62 L4.53 12.09 L4.01 12.52 L3.48 12.90 L2.95 13.22 L2.44 13.46 L1.88 13.67 L1.23 13.85 L0.53 13.98 L-0.20 14.07 L-0.91 14.10 L-1.58 14.08 L-2.17 14.00 L-2.67 13.88 L-3.17 13.69 L-3.72 13.41 L-4.29 13.05 L-4.85 12.62 L-5.39 12.15 L-5.88 11.64 L-6.29 11.12 L-6.62 10.62 L-6.90 10.08 L-7.16 9.47 L-7.44 8.79 L-7.70 8.03 L-7.90 7.21 L-8.07 6.35 L-8.19 5.47 L-8.26 4.58 L-8.29 3.69 L-8.25 2.76 L-8.16 1.78 L-8.02 0.77 L-7.83 -0.27 L-7.59 -1.32 L-7.32 -2.38 L-7.02 -3.42 L-6.68 -4.47 L-6.28 -5.53 L-5.83 -6.61 L-5.34 -7.71 L-4.81 -8.80 L-4.28 -9.89 L-3.73 -10.97 L-3.20 -12.02 L-2.65 -13.09 L-2.03 -14.20 L-1.37 -15.33 L-0.72 -16.44 L-0.10 -17.48 L0.45 -18.43 L0.90 -19.23 L1.23 -19.85 Z" fill="#fafafa" stroke="#a0a0a0" stroke-width="1.37" stroke-linejoin="round"/><path transform="translate(505.0 334.0) rotate(-60) scale(0.62 0.62)" d="M0.77 -20.15 L0.32 -19.63 L-0.27 -18.93 L-0.96 -18.08 L-1.72 -17.12 L-2.51 -16.10 L-3.31 -15.04 L-4.08 -13.99 L-4.80 -12.98 L-5.47 -12.00 L-6.16 -11.00 L-6.85 -9.97 L-7.54 -8.92 L-8.21 -7.85 L-8.84 -6.77 L-9.44 -5.67 L-9.98 -4.58 L-10.47 -3.48 L-10.92 -2.39 L-11.35 -1.27 L-11.73 -0.14 L-12.07 0.99 L-12.36 2.13 L-12.58 3.28 L-12.74 4.42 L-12.83 5.55 L-12.86 6.68 L-12.84 7.82 L-12.74 8.97 L-12.57 10.11 L-12.32 11.25 L-11.91 12.34 L-11.38 13.38 L-10.74 14.36 L-10.01 15.27 L-9.20 16.11 L-8.33 16.88 L-7.41 17.58 L-6.43 18.19 L-5.41 18.71 L-4.33 19.12 L-3.19 19.41 L-2.04 19.56 L-0.89 19.60 L0.26 19.55 L1.39 19.42 L2.48 19.20 L3.54 18.91 L4.56 18.54 L5.55 18.07 L6.49 17.50 L7.38 16.87 L8.22 16.16 L9.00 15.40 L9.71 14.59 L10.36 13.73 L10.92 12.81 L11.39 11.82 L11.75 10.79 L12.03 9.74 L12.22 8.68 L12.34 7.62 L12.38 6.57 L12.34 5.54 L12.21 4.52 L11.97 3.51 L11.63 2.53 L11.21 1.60 L10.72 0.72 L10.17 -0.10 L9.56 -0.87 L8.89 -1.57 L8.13 -2.21 L7.28 -2.76 L6.37 -3.18 L5.45 -3.49 L4.53 -3.70 L3.61 -3.83 L2.69 -3.88 L1.78 -3.83 L0.86 -3.67 L-0.05 -3.38 L-0.90 -2.98 L-1.66 -2.49 L-2.35 -1.94 L-2.97 -1.33 L-3.54 -0.68 L-3.98 0.05 L-4.35 0.91 L-4.60 1.88 L-4.71 2.85 L-4.71 3.76 L-4.66 4.61 L-4.57 5.39 L-4.47 6.05 L-4.37 6.56 L-4.29 6.92 L-0.71 7.08 L-0.59 6.64 L-0.49 6.06 L-0.39 5.42 L-0.28 4.77 L-0.15 4.14 L0.01 3.60 L0.19 3.24 L0.35 3.09 L0.55 2.95 L0.79 2.71 L1.03 2.44 L1.29 2.19 L1.55 1.98 L1.79 1.82 L1.99 1.72 L2.14 1.67 L2.35 1.64 L2.69 1.62 L3.10 1.64 L3.53 1.70 L3.96 1.80 L4.34 1.93 L4.64 2.07 L4.87 2.21 L5.11 2.42 L5.41 2.74 L5.72 3.14 L6.03 3.59 L6.30 4.08 L6.52 4.57 L6.69 5.04 L6.79 5.48 L6.85 5.97 L6.88 6.57 L6.85 7.22 L6.78 7.89 L6.66 8.55 L6.50 9.17 L6.30 9.73 L6.08 10.19 L5.80 10.64 L5.44 11.13 L5.01 11.62 L4.53 12.09 L4.01 12.52 L3.48 12.90 L2.95 13.22 L2.44 13.46 L1.88 13.67 L1.23 13.85 L0.53 13.98 L-0.20 14.07 L-0.91 14.10 L-1.58 14.08 L-2.17 14.00 L-2.67 13.88 L-3.17 13.69 L-3.72 13.41 L-4.29 13.05 L-4.85 12.62 L-5.39 12.15 L-5.88 11.64 L-6.29 11.12 L-6.62 10.62 L-6.90 10.08 L-7.16 9.47 L-7.44 8.79 L-7.70 8.03 L-7.90 7.21 L-8.07 6.35 L-8.19 5.47 L-8.26 4.58 L-8.29 3.69 L-8.25 2.76 L-8.16 1.78 L-8.02 0.77 L-7.83 -0.27 L-7.59 -1.32 L-7.32 -2.38 L-7.02 -3.42 L-6.68 -4.47 L-6.28 -5.53 L-5.83 -6.61 L-5.34 -7.71 L-4.81 -8.80 L-4.28 -9.89 L-3.73 -10.97 L-3.20 -12.02 L-2.65 -13.09 L-2.03 -14.20 L-1.37 -15.33 L-0.72 -16.44 L-0.10 -17.48 L0.45 -18.43 L0.90 -19.23 L1.23 -19.85 Z" fill="#fafafa" stroke="#a0a0a0" stroke-width="1.37" stroke-linejoin="round"/><path transform="translate(528.0 330.0) rotate(-100) scale(-0.52 0.52)" d="M0.77 -20.15 L0.32 -19.63 L-0.27 -18.93 L-0.96 -18.08 L-1.72 -17.12 L-2.51 -16.10 L-3.31 -15.04 L-4.08 -13.99 L-4.80 -12.98 L-5.47 -12.00 L-6.16 -11.00 L-6.85 -9.97 L-7.54 -8.92 L-8.21 -7.85 L-8.84 -6.77 L-9.44 -5.67 L-9.98 -4.58 L-10.47 -3.48 L-10.92 -2.39 L-11.35 -1.27 L-11.73 -0.14 L-12.07 0.99 L-12.36 2.13 L-12.58 3.28 L-12.74 4.42 L-12.83 5.55 L-12.86 6.68 L-12.84 7.82 L-12.74 8.97 L-12.57 10.11 L-12.32 11.25 L-11.91 12.34 L-11.38 13.38 L-10.74 14.36 L-10.01 15.27 L-9.20 16.11 L-8.33 16.88 L-7.41 17.58 L-6.43 18.19 L-5.41 18.71 L-4.33 19.12 L-3.19 19.41 L-2.04 19.56 L-0.89 19.60 L0.26 19.55 L1.39 19.42 L2.48 19.20 L3.54 18.91 L4.56 18.54 L5.55 18.07 L6.49 17.50 L7.38 16.87 L8.22 16.16 L9.00 15.40 L9.71 14.59 L10.36 13.73 L10.92 12.81 L11.39 11.82 L11.75 10.79 L12.03 9.74 L12.22 8.68 L12.34 7.62 L12.38 6.57 L12.34 5.54 L12.21 4.52 L11.97 3.51 L11.63 2.53 L11.21 1.60 L10.72 0.72 L10.17 -0.10 L9.56 -0.87 L8.89 -1.57 L8.13 -2.21 L7.28 -2.76 L6.37 -3.18 L5.45 -3.49 L4.53 -3.70 L3.61 -3.83 L2.69 -3.88 L1.78 -3.83 L0.86 -3.67 L-0.05 -3.38 L-0.90 -2.98 L-1.66 -2.49 L-2.35 -1.94 L-2.97 -1.33 L-3.54 -0.68 L-3.98 0.05 L-4.35 0.91 L-4.60 1.88 L-4.71 2.85 L-4.71 3.76 L-4.66 4.61 L-4.57 5.39 L-4.47 6.05 L-4.37 6.56 L-4.29 6.92 L-0.71 7.08 L-0.59 6.64 L-0.49 6.06 L-0.39 5.42 L-0.28 4.77 L-0.15 4.14 L0.01 3.60 L0.19 3.24 L0.35 3.09 L0.55 2.95 L0.79 2.71 L1.03 2.44 L1.29 2.19 L1.55 1.98 L1.79 1.82 L1.99 1.72 L2.14 1.67 L2.35 1.64 L2.69 1.62 L3.10 1.64 L3.53 1.70 L3.96 1.80 L4.34 1.93 L4.64 2.07 L4.87 2.21 L5.11 2.42 L5.41 2.74 L5.72 3.14 L6.03 3.59 L6.30 4.08 L6.52 4.57 L6.69 5.04 L6.79 5.48 L6.85 5.97 L6.88 6.57 L6.85 7.22 L6.78 7.89 L6.66 8.55 L6.50 9.17 L6.30 9.73 L6.08 10.19 L5.80 10.64 L5.44 11.13 L5.01 11.62 L4.53 12.09 L4.01 12.52 L3.48 12.90 L2.95 13.22 L2.44 13.46 L1.88 13.67 L1.23 13.85 L0.53 13.98 L-0.20 14.07 L-0.91 14.10 L-1.58 14.08 L-2.17 14.00 L-2.67 13.88 L-3.17 13.69 L-3.72 13.41 L-4.29 13.05 L-4.85 12.62 L-5.39 12.15 L-5.88 11.64 L-6.29 11.12 L-6.62 10.62 L-6.90 10.08 L-7.16 9.47 L-7.44 8.79 L-7.70 8.03 L-7.90 7.21 L-8.07 6.35 L-8.19 5.47 L-8.26 4.58 L-8.29 3.69 L-8.25 2.76 L-8.16 1.78 L-8.02 0.77 L-7.83 -0.27 L-7.59 -1.32 L-7.32 -2.38 L-7.02 -3.42 L-6.68 -4.47 L-6.28 -5.53 L-5.83 -6.61 L-5.34 -7.71 L-4.81 -8.80 L-4.28 -9.89 L-3.73 -10.97 L-3.20 -12.02 L-2.65 -13.09 L-2.03 -14.20 L-1.37 -15.33 L-0.72 -16.44 L-0.10 -17.48 L0.45 -18.43 L0.90 -19.23 L1.23 -19.85 Z" fill="#fafafa" stroke="#a0a0a0" stroke-width="1.63" stroke-linejoin="round"/><path d="M438.6 310.3 Q441.0 320.4 451.1 322.8 Q441.0 325.2 438.6 335.3 Q436.2 325.2 426.1 322.8 Q436.2 320.4 438.6 310.3 Z" fill="#fafafa" stroke="#9a9a9a" stroke-width="0.8"/><path d="M419.2 328.5 Q420.8 335.4 427.7 337.0 Q420.8 338.6 419.2 345.5 Q417.6 338.6 410.7 337.0 Q417.6 335.4 419.2 328.5 Z" fill="#fafafa" stroke="#9a9a9a" stroke-width="0.8"/><path d="M462.0 328.5 Q463.6 335.4 470.5 337.0 Q463.6 338.6 462.0 345.5 Q460.4 338.6 453.5 337.0 Q460.4 335.4 462.0 328.5 Z" fill="#fafafa" stroke="#9a9a9a" stroke-width="0.8"/><path transform="translate(427.0 383.0) rotate(-6) scale(-0.85 0.85)" d="M0.77 -20.16 L0.31 -19.63 L-0.28 -18.93 L-0.97 -18.08 L-1.73 -17.13 L-2.52 -16.10 L-3.32 -15.05 L-4.10 -14.00 L-4.81 -12.99 L-5.49 -12.01 L-6.18 -11.01 L-6.87 -9.98 L-7.56 -8.93 L-8.23 -7.86 L-8.87 -6.78 L-9.46 -5.68 L-10.00 -4.59 L-10.49 -3.50 L-10.95 -2.40 L-11.38 -1.28 L-11.77 -0.15 L-12.11 0.98 L-12.39 2.13 L-12.62 3.28 L-12.78 4.42 L-12.87 5.55 L-12.91 6.68 L-12.88 7.83 L-12.79 8.98 L-12.62 10.13 L-12.37 11.26 L-11.96 12.36 L-11.42 13.41 L-10.78 14.39 L-10.05 15.30 L-9.24 16.14 L-8.37 16.92 L-7.44 17.62 L-6.46 18.23 L-5.43 18.75 L-4.34 19.17 L-3.20 19.46 L-2.04 19.61 L-0.89 19.65 L0.26 19.60 L1.39 19.47 L2.50 19.25 L3.56 18.96 L4.58 18.58 L5.57 18.11 L6.52 17.55 L7.41 16.91 L8.25 16.20 L9.04 15.44 L9.75 14.62 L10.40 13.76 L10.96 12.83 L11.43 11.84 L11.80 10.80 L12.08 9.75 L12.27 8.68 L12.39 7.62 L12.43 6.57 L12.38 5.53 L12.26 4.51 L12.02 3.49 L11.68 2.51 L11.26 1.58 L10.76 0.70 L10.21 -0.13 L9.60 -0.90 L8.92 -1.61 L8.16 -2.25 L7.30 -2.80 L6.39 -3.23 L5.47 -3.54 L4.54 -3.75 L3.61 -3.88 L2.69 -3.92 L1.77 -3.88 L0.85 -3.72 L-0.07 -3.43 L-0.92 -3.02 L-1.69 -2.53 L-2.38 -1.98 L-3.01 -1.37 L-3.58 -0.71 L-4.02 0.03 L-4.39 0.89 L-4.65 1.87 L-4.75 2.85 L-4.75 3.76 L-4.70 4.61 L-4.61 5.39 L-4.50 6.05 L-4.40 6.56 L-4.32 6.92 L-0.68 7.08 L-0.56 6.64 L-0.46 6.06 L-0.35 5.42 L-0.24 4.77 L-0.11 4.14 L0.05 3.61 L0.23 3.25 L0.39 3.11 L0.59 2.98 L0.83 2.74 L1.06 2.47 L1.32 2.23 L1.58 2.02 L1.82 1.86 L2.01 1.77 L2.15 1.72 L2.36 1.69 L2.69 1.67 L3.09 1.69 L3.52 1.75 L3.94 1.85 L4.32 1.98 L4.62 2.11 L4.84 2.25 L5.07 2.45 L5.37 2.77 L5.68 3.16 L5.99 3.62 L6.26 4.10 L6.48 4.59 L6.64 5.06 L6.74 5.49 L6.80 5.98 L6.83 6.57 L6.80 7.21 L6.73 7.88 L6.61 8.54 L6.45 9.16 L6.25 9.71 L6.04 10.17 L5.76 10.61 L5.40 11.10 L4.98 11.58 L4.50 12.05 L3.98 12.48 L3.45 12.86 L2.92 13.18 L2.42 13.42 L1.86 13.62 L1.22 13.80 L0.52 13.93 L-0.20 14.02 L-0.91 14.05 L-1.57 14.03 L-2.16 13.95 L-2.66 13.83 L-3.14 13.64 L-3.69 13.36 L-4.26 13.00 L-4.82 12.58 L-5.35 12.11 L-5.84 11.61 L-6.25 11.09 L-6.58 10.59 L-6.85 10.06 L-7.11 9.45 L-7.40 8.78 L-7.65 8.02 L-7.86 7.21 L-8.02 6.35 L-8.14 5.46 L-8.22 4.58 L-8.25 3.69 L-8.22 2.76 L-8.13 1.79 L-7.98 0.78 L-7.80 -0.26 L-7.56 -1.31 L-7.29 -2.37 L-7.00 -3.41 L-6.66 -4.46 L-6.26 -5.52 L-5.81 -6.60 L-5.32 -7.70 L-4.79 -8.79 L-4.26 -9.88 L-3.72 -10.96 L-3.19 -12.01 L-2.63 -13.08 L-2.01 -14.19 L-1.36 -15.33 L-0.71 -16.44 L-0.09 -17.48 L0.46 -18.42 L0.91 -19.22 L1.23 -19.84 Z" fill="#fafafa" stroke="#a0a0a0" stroke-width="1.00" stroke-linejoin="round"/><path transform="translate(452.0 383.0) rotate(6) scale(0.85 0.85)" d="M0.77 -20.16 L0.31 -19.63 L-0.28 -18.93 L-0.97 -18.08 L-1.73 -17.13 L-2.52 -16.10 L-3.32 -15.05 L-4.10 -14.00 L-4.81 -12.99 L-5.49 -12.01 L-6.18 -11.01 L-6.87 -9.98 L-7.56 -8.93 L-8.23 -7.86 L-8.87 -6.78 L-9.46 -5.68 L-10.00 -4.59 L-10.49 -3.50 L-10.95 -2.40 L-11.38 -1.28 L-11.77 -0.15 L-12.11 0.98 L-12.39 2.13 L-12.62 3.28 L-12.78 4.42 L-12.87 5.55 L-12.91 6.68 L-12.88 7.83 L-12.79 8.98 L-12.62 10.13 L-12.37 11.26 L-11.96 12.36 L-11.42 13.41 L-10.78 14.39 L-10.05 15.30 L-9.24 16.14 L-8.37 16.92 L-7.44 17.62 L-6.46 18.23 L-5.43 18.75 L-4.34 19.17 L-3.20 19.46 L-2.04 19.61 L-0.89 19.65 L0.26 19.60 L1.39 19.47 L2.50 19.25 L3.56 18.96 L4.58 18.58 L5.57 18.11 L6.52 17.55 L7.41 16.91 L8.25 16.20 L9.04 15.44 L9.75 14.62 L10.40 13.76 L10.96 12.83 L11.43 11.84 L11.80 10.80 L12.08 9.75 L12.27 8.68 L12.39 7.62 L12.43 6.57 L12.38 5.53 L12.26 4.51 L12.02 3.49 L11.68 2.51 L11.26 1.58 L10.76 0.70 L10.21 -0.13 L9.60 -0.90 L8.92 -1.61 L8.16 -2.25 L7.30 -2.80 L6.39 -3.23 L5.47 -3.54 L4.54 -3.75 L3.61 -3.88 L2.69 -3.92 L1.77 -3.88 L0.85 -3.72 L-0.07 -3.43 L-0.92 -3.02 L-1.69 -2.53 L-2.38 -1.98 L-3.01 -1.37 L-3.58 -0.71 L-4.02 0.03 L-4.39 0.89 L-4.65 1.87 L-4.75 2.85 L-4.75 3.76 L-4.70 4.61 L-4.61 5.39 L-4.50 6.05 L-4.40 6.56 L-4.32 6.92 L-0.68 7.08 L-0.56 6.64 L-0.46 6.06 L-0.35 5.42 L-0.24 4.77 L-0.11 4.14 L0.05 3.61 L0.23 3.25 L0.39 3.11 L0.59 2.98 L0.83 2.74 L1.06 2.47 L1.32 2.23 L1.58 2.02 L1.82 1.86 L2.01 1.77 L2.15 1.72 L2.36 1.69 L2.69 1.67 L3.09 1.69 L3.52 1.75 L3.94 1.85 L4.32 1.98 L4.62 2.11 L4.84 2.25 L5.07 2.45 L5.37 2.77 L5.68 3.16 L5.99 3.62 L6.26 4.10 L6.48 4.59 L6.64 5.06 L6.74 5.49 L6.80 5.98 L6.83 6.57 L6.80 7.21 L6.73 7.88 L6.61 8.54 L6.45 9.16 L6.25 9.71 L6.04 10.17 L5.76 10.61 L5.40 11.10 L4.98 11.58 L4.50 12.05 L3.98 12.48 L3.45 12.86 L2.92 13.18 L2.42 13.42 L1.86 13.62 L1.22 13.80 L0.52 13.93 L-0.20 14.02 L-0.91 14.05 L-1.57 14.03 L-2.16 13.95 L-2.66 13.83 L-3.14 13.64 L-3.69 13.36 L-4.26 13.00 L-4.82 12.58 L-5.35 12.11 L-5.84 11.61 L-6.25 11.09 L-6.58 10.59 L-6.85 10.06 L-7.11 9.45 L-7.40 8.78 L-7.65 8.02 L-7.86 7.21 L-8.02 6.35 L-8.14 5.46 L-8.22 4.58 L-8.25 3.69 L-8.22 2.76 L-8.13 1.79 L-7.98 0.78 L-7.80 -0.26 L-7.56 -1.31 L-7.29 -2.37 L-7.00 -3.41 L-6.66 -4.46 L-6.26 -5.52 L-5.81 -6.60 L-5.32 -7.70 L-4.79 -8.79 L-4.26 -9.88 L-3.72 -10.96 L-3.19 -12.01 L-2.63 -13.08 L-2.01 -14.19 L-1.36 -15.33 L-0.71 -16.44 L-0.09 -17.48 L0.46 -18.42 L0.91 -19.22 L1.23 -19.84 Z" fill="#fafafa" stroke="#a0a0a0" stroke-width="1.00" stroke-linejoin="round"/><path d="M427.5 270 L451.5 270 L451.5 292 L427.5 292 Z" fill="#f5d5c2"/><path d="M428.3 290.0 L428.0 287.0 L427.0 281.0 L424.0 272.0 L420.0 262.0 L418.6 252.0 L419.0 247.0 L428.0 243.0 L439.0 240.5 L450.0 242.0 L459.0 247.0 L461.8 255.8 L458.0 265.0 L455.0 272.0 L452.0 282.0 L451.6 290.0 Z" fill="#f5d5c2"/><path d="M439.0 215.0 A10.5 10.5 0 0 0 428.0 216.5 A11.8 11.8 0 0 0 419.0 225.0 A10.8 10.8 0 0 0 412.0 234.0 A12.0 12.0 0 0 0 408.0 246.0 A11.6 11.6 0 0 0 406.0 258.0 A12.9 12.9 0 0 0 402.0 271.0 A13.3 13.3 0 0 0 402.5 285.0 A13.6 13.6 0 0 0 405.5 299.0 A11.7 11.7 0 0 0 411.0 310.0 A14.9 14.9 0 0 0 425.7 315.5 L429.0 310.0 L431.4 303.6 L430.0 295.0 L428.0 287.0 L427.0 281.0 L424.0 272.0 L420.0 262.0 L418.6 252.0 L419.0 247.0 L428.0 243.0 L439.0 240.5 L450.0 242.0 L459.0 247.0 L461.8 255.8 L458.0 265.0 L455.0 272.0 L452.0 282.0 L451.5 292.0 L452.0 300.0 L452.9 307.9 L456.0 313.0 L462.9 316.4 A11.4 11.4 0 0 0 473.0 310.0 A13.2 13.2 0 0 0 477.9 297.0 A13.4 13.4 0 0 0 479.5 283.0 A13.7 13.7 0 0 0 476.0 269.0 A13.4 13.4 0 0 0 474.5 255.0 A14.5 14.5 0 0 0 471.5 240.0 A13.8 13.8 0 0 0 465.0 227.0 A12.8 12.8 0 0 0 455.0 218.0 A9.9 9.9 0 0 0 445.0 215.0 A5.7 5.7 0 0 0 439.0 215.0 Z" fill="#a36c36" stroke="#6a4726" stroke-width="0.9" stroke-linejoin="round"/><path d="M427.9 275.5 Q441 282 451.7 277.9" stroke="#a08070" stroke-width="0.8" fill="none"/><path d="M424.3 254.8 Q430.5 251.5 436.8 255.4 M445 255.4 Q451.3 251.5 457.4 254.3" stroke="#1e1e1e" stroke-width="2.1" fill="none" stroke-linecap="round"/><path d="M437.6 262.8 Q440.4 264.8 443.2 262.8" stroke="#3a2a20" stroke-width="1.3" fill="none"/><path d="M435 268.6 Q440.6 266.6 446.3 268.6 Q441 274.5 435 268.6 Z" fill="#ee7c6c"/></svg><svg class="a" style="left:0;top:0" width="1500" height="841"><rect x="172.5" y="214" width="531" height="438" fill="none" stroke="#86d6bb" stroke-width="1.2"/><circle cx="172.5" cy="214" r="3.8" fill="#fff" stroke="#22b389" stroke-width="1.8"/><circle cx="703.5" cy="214" r="3.8" fill="#fff" stroke="#22b389" stroke-width="1.8"/><circle cx="172.5" cy="652" r="3.8" fill="#fff" stroke="#22b389" stroke-width="1.8"/><circle cx="703.5" cy="652" r="3.8" fill="#fff" stroke="#22b389" stroke-width="1.8"/><rect x="429" y="209.5" width="18" height="9" rx="4.5" fill="#fff" stroke="#22b389" stroke-width="1.8"/><rect x="429" y="647.5" width="18" height="9" rx="4.5" fill="#fff" stroke="#22b389" stroke-width="1.8"/><rect x="168" y="424" width="9" height="18" rx="4.5" fill="#fff" stroke="#22b389" stroke-width="1.8"/><rect x="699" y="424" width="9" height="18" rx="4.5" fill="#fff" stroke="#22b389" stroke-width="1.8"/></svg><div class="a" style="left:387px;top:173px;width:101px;height:27px;background:#0aa87b;border-radius:4px"></div><div class="tx" style="left:398.80px;top:180.26px;font-size:12.21px;line-height:12.21px;font-weight:bold;color:#ffffff;font-family:'Liberation Sans',sans-serif;transform:scaleX(0.8618);transform-origin:0 0;">9.4&nbsp;&nbsp;in x 7.75&nbsp;&nbsp;in</div><div class="a" style="left:360px;top:660px;width:157px;height:31px;background:#fff;border-radius:7px;box-shadow:0 2px 4px rgba(0,0,0,0.18)"></div><svg class="a" style="left:0;top:0" width="1500" height="841"><path d="M368.5 671 H383 M372 671 V669 H379.5 V671 M370 671 L371 682 H380.5 L381.5 671 M373.8 674 V679 M377.7 674 V679" fill="none" stroke="#222" stroke-width="1.3" stroke-linecap="round" stroke-linejoin="round"/><path d="M403 679.5 H400.5 V668.5 H410.5 V671 M403 671 H414 V682 H403 Z M408.5 673.5 V679.5 M405.5 676.5 H411.5" fill="none" stroke="#222" stroke-width="1.3" stroke-linecap="round" stroke-linejoin="round"/><path d="M435 678.5 H441.5 a3.5 3.5 0 0 0 0-7 H434 a3.5 3.5 0 0 0 0 7 M441 675.5 H434.5 a1 1 0 0 1 0-2 H441.5 a1.6 1.6 0 0 1 0 3.2" fill="none" stroke="#222" stroke-width="1.3" stroke-linecap="round" stroke-linejoin="round"/><path d="M470 668 V673 M468 671 L470 673 L472 671 M463.5 673.5 L470 677.5 L476.5 673.5 M463.5 677.5 L470 681.5 L476.5 677.5" fill="none" stroke="#222" stroke-width="1.3" stroke-linecap="round" stroke-linejoin="round"/><g transform="translate(493 667)"><circle cx="3" cy="2.5" r="1.8" fill="none" stroke="#222" stroke-width="1.3" stroke-linecap="round" stroke-linejoin="round"/><circle cx="9" cy="2.5" r="1.8" fill="none" stroke="#222" stroke-width="1.3" stroke-linecap="round" stroke-linejoin="round"/><circle cx="3" cy="9" r="1.8" fill="none" stroke="#222" stroke-width="1.3" stroke-linecap="round" stroke-linejoin="round"/><circle cx="14" cy="9.5" r="1.8" fill="none" stroke="#222" stroke-width="1.3" stroke-linecap="round" stroke-linejoin="round"/><circle cx="9" cy="13.5" r="1.8" fill="none" stroke="#222" stroke-width="1.3" stroke-linecap="round" stroke-linejoin="round"/><circle cx="14" cy="13.5" r="1.6" fill="none" stroke="#222" stroke-width="1.3" stroke-linecap="round" stroke-linejoin="round"/><path d="M4.8 2.5 H7.2 M3 4.3 V7.2 M4.6 9.8 L7.6 12.6 M10.8 13.5 H12.4 M10.3 4 L12.8 8" fill="none" stroke="#222" stroke-width="1.3" stroke-linecap="round" stroke-linejoin="round"/></g></svg><svg class="a" style="left:0;top:0" width="1500" height="841"><path d="M783.6 385.2 L783.6 404.5 L787.6 400.5 L791.6 408.2 L795 406.3 L791.2 399.6 L798.3 399.3 Z" fill="#0a0a0a" stroke="#0a0a0a" stroke-width="0.6" stroke-linejoin="round"/></svg><div class="tx" style="left:12.00px;top:799.17px;font-size:33.23px;line-height:33.23px;font-weight:bold;color:#1b6681;font-family:'Liberation Serif',serif;transform:scaleX(0.9799);transform-origin:0 0;-webkit-text-stroke:0.7px currentColor;">Craft with Sarah</div></body></html>
